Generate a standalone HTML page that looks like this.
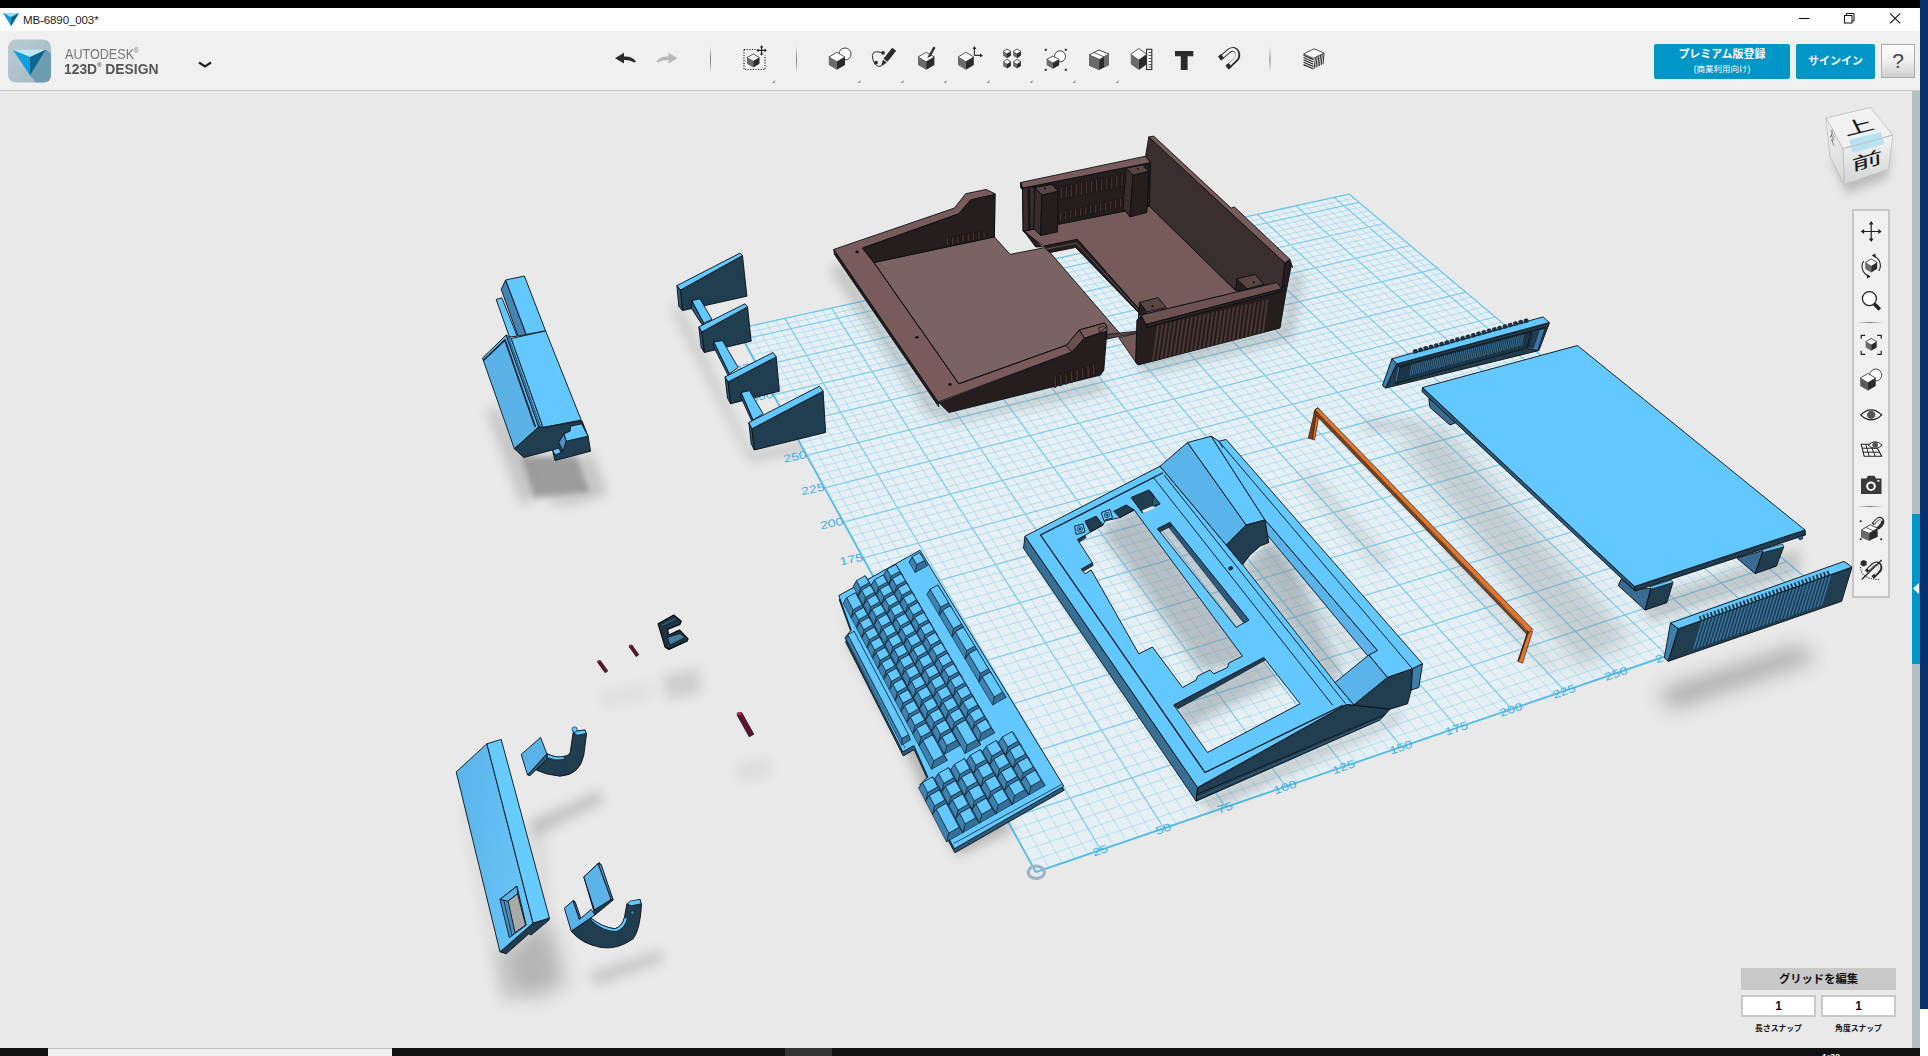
<!DOCTYPE html>
<html lang="ja"><head><meta charset="utf-8"><title>MB-6890_003* - 123D Design</title>
<style>

html,body{margin:0;padding:0;background:#e9e9e9;}
body{width:1928px;height:1056px;overflow:hidden;position:relative;font-family:"Liberation Sans","Noto Sans CJK JP",sans-serif;}
#app{position:absolute;left:0;top:0;width:1928px;height:1056px;overflow:hidden;background:#e9e9e9;}
#scene{position:absolute;left:0;top:0;}
.abs{position:absolute;}
#topblack{left:0;top:0;width:1920px;height:8px;background:#000;}
#titlebar{left:0;top:8px;width:1920px;height:23px;background:#fff;}
#title{left:23px;top:12px;font-size:11.5px;color:#222;line-height:16px;letter-spacing:-0.1px;}
#header{left:0;top:31px;width:1920px;height:59px;background:#f0f0f0;border-bottom:1px solid #c9c9c9;}
#rightblue{left:1920px;top:0;width:8px;height:1009px;background:#08306d;}
#rightwhite{left:1920px;top:1009px;width:8px;height:47px;background:#fff;}
#scrollstrip{left:1912px;top:90px;width:8px;height:958px;background:#b5bfbf;}
#scrollblue{left:1912px;top:514px;width:8px;height:150px;background:#0096c8;}
#bottombar{left:0;top:1048px;width:1920px;height:8px;background:#111;}
#bb1{left:48px;top:1048px;width:344px;height:8px;background:#f0f0f0;border-top:1px solid #c4c4c4;box-sizing:border-box;}
#bb2{left:785px;top:1048px;width:47px;height:8px;background:#333;}
.brand{color:#6e6e6e;}
#brand1{left:65px;top:43px;font-size:14px;line-height:16px;color:#777;transform:scaleX(0.9);transform-origin:0 0;white-space:nowrap;}
#brand2{left:64px;top:57px;font-size:14px;line-height:16px;color:#555;font-weight:bold;transform:scaleX(0.99);transform-origin:0 0;white-space:nowrap;}
.btn{background:#0096c8;border-radius:2px;color:#fff;text-align:center;font-weight:bold;}
#prem{left:1654px;top:44px;width:136px;height:35px;}
#prem .l1{position:absolute;left:0;width:136px;top:2px;font-size:11px;line-height:16px;}
#prem .l2{position:absolute;left:0;width:136px;top:19px;font-size:8.5px;line-height:12px;font-weight:normal;}
#signin{left:1796px;top:44px;width:79px;height:35px;font-size:11px;line-height:34px;}
#help{left:1881px;top:44px;width:34px;height:34px;box-sizing:border-box;border:1px solid #aaa;background:linear-gradient(#fcfcfc,#f0f0f0 50%,#cfcfcf);text-align:center;font-size:21px;line-height:31px;color:#444;}
#gridhead{left:1741px;top:968px;width:155px;height:22px;background:#c8c8c8;text-align:center;font-size:11.3px;line-height:23px;font-weight:bold;color:#111;}
.ginp{top:995px;height:22px;box-sizing:border-box;border:2px solid #c8c8c8;background:#fff;text-align:center;font-size:12px;line-height:18px;font-weight:bold;color:#111;}
.glab{top:1022.5px;width:75px;text-align:center;font-size:7.8px;line-height:12px;font-weight:bold;color:#111;}
#rtool{left:1852px;top:209px;width:38px;height:389px;box-sizing:border-box;border:2px solid #c6c6c6;background:#f0f0f0;}

</style></head>
<body>
<div id="app">
<svg id="scene" width="1928" height="1056" viewBox="0 0 1928 1056">
<defs><filter id="b3" x="-30%" y="-30%" width="160%" height="160%"><feGaussianBlur stdDeviation="3"/></filter><filter id="b6" x="-30%" y="-30%" width="160%" height="160%"><feGaussianBlur stdDeviation="6"/></filter><filter id="b10" x="-40%" y="-40%" width="180%" height="180%"><feGaussianBlur stdDeviation="10"/></filter><filter id="b14" x="-40%" y="-40%" width="180%" height="180%"><feGaussianBlur stdDeviation="14"/></filter><style>.gl{font-family:"Liberation Sans",sans-serif;font-size:11px;fill:#3fb0e3;}</style></defs>
<rect x="0" y="0" width="1928" height="1056" fill="#e9e9e9"/>
<polygon points="521.0,456.0 577.0,456.0 590.0,492.0 534.0,498.0" fill="#6e6e6e" opacity="0.62" filter="url(#b3)"/>
<polygon points="486.0,409.0 500.0,409.0 525.0,458.0 534.0,497.0 522.0,506.0" fill="#6e6e6e" opacity="0.3" filter="url(#b6)"/>
<polygon points="577.0,456.0 592.0,454.0 607.0,494.0 566.0,506.0 540.0,500.0 590.0,490.0" fill="#6e6e6e" opacity="0.32" filter="url(#b6)"/>
<polygon points="672.0,300.0 684.0,312.0 752.0,452.0 826.0,436.0 832.0,446.0 750.0,462.0 676.0,318.0" fill="#6e6e6e" opacity="0.28" filter="url(#b6)"/>
<polygon points="662.0,676.0 698.0,668.0 702.0,692.0 668.0,700.0" fill="#6e6e6e" opacity="0.22" filter="url(#b6)"/>
<polygon points="600.0,692.0 650.0,682.0 653.0,698.0 604.0,708.0" fill="#6e6e6e" opacity="0.07" filter="url(#b6)"/>
<polygon points="735.0,765.0 770.0,757.0 772.0,775.0 738.0,782.0" fill="#6e6e6e" opacity="0.09" filter="url(#b6)"/>
<polygon points="528.0,822.0 600.0,790.0 604.0,802.0 536.0,836.0" fill="#6e6e6e" opacity="0.3" filter="url(#b6)"/>
<polygon points="527.0,932.0 551.0,924.0 565.0,985.0 528.0,999.0 509.0,988.0 501.0,953.0" fill="#6e6e6e" opacity="0.42" filter="url(#b10)"/>
<polygon points="470.0,800.0 500.0,950.0 520.0,1000.0 500.0,1005.0 462.0,805.0" fill="#6e6e6e" opacity="0.12" filter="url(#b6)"/>
<polygon points="527.0,826.0 546.0,826.0 552.0,930.0 530.0,934.0" fill="#6e6e6e" opacity="0.1" filter="url(#b6)"/>
<polygon points="590.0,972.0 660.0,950.0 664.0,962.0 596.0,986.0" fill="#6e6e6e" opacity="0.26" filter="url(#b6)"/>
<polygon points="1660.0,690.0 1800.0,645.0 1815.0,660.0 1670.0,710.0" fill="#6e6e6e" opacity="0.5" filter="url(#b10)"/>
<polygon points="1035.9,872.2 1831.3,599.4 1349.1,194.1 737.2,328.9" fill="#e6eff3"/>
<path d="M1049.0,867.7L746.8,326.8M1029.9,861.3L1822.1,591.7M1062.1,863.2L756.3,324.7M1024.0,850.5L1813.1,584.0M1075.0,858.7L765.9,322.6M1018.2,839.9L1804.1,576.5M1088.0,854.3L775.4,320.5M1012.4,829.5L1795.2,569.0M1113.6,845.5L794.3,316.3M1001.1,808.9L1777.6,554.3M1126.3,841.1L803.7,314.3M995.5,798.8L1769.0,547.0M1138.9,836.8L813.0,312.2M990.1,788.8L1760.5,539.8M1151.5,832.5L822.3,310.1M984.6,778.9L1752.0,532.7M1176.5,823.9L840.9,306.1M974.0,759.5L1735.4,518.7M1188.9,819.7L850.1,304.0M968.7,750.0L1727.1,511.8M1201.2,815.5L859.3,302.0M963.6,740.6L1719.0,505.0M1213.5,811.3L868.5,300.0M958.4,731.3L1711.0,498.2M1237.8,802.9L886.7,296.0M948.4,713.0L1695.1,484.9M1249.9,798.8L895.8,294.0M943.4,704.0L1687.3,478.3M1261.9,794.6L904.8,292.0M938.6,695.1L1679.6,471.8M1273.9,790.5L913.8,290.0M933.7,686.3L1671.9,465.4M1297.6,782.4L931.7,286.1M924.2,669.1L1656.8,452.7M1309.4,778.4L940.6,284.1M919.5,660.6L1649.3,446.4M1321.1,774.4L949.5,282.1M914.9,652.1L1641.9,440.2M1332.7,770.4L958.3,280.2M910.3,643.8L1634.6,434.0M1355.9,762.4L975.9,276.3M901.3,627.5L1620.2,421.9M1367.4,758.5L984.6,274.4M896.9,619.4L1613.1,415.9M1378.8,754.6L993.4,272.5M892.5,611.4L1606.0,410.0M1390.2,750.7L1002.1,270.6M888.2,603.6L1599.1,404.2M1412.7,742.9L1019.3,266.8M879.7,588.0L1585.3,392.6M1423.9,739.1L1027.9,264.9M875.5,580.4L1578.5,386.9M1435.1,735.3L1036.5,263.0M871.3,572.8L1571.8,381.2M1446.2,731.4L1045.0,261.1M867.2,565.4L1565.1,375.6M1468.2,723.9L1062.0,257.3M859.1,550.6L1551.9,364.5M1479.2,720.1L1070.5,255.5M855.1,543.4L1545.4,359.1M1490.1,716.4L1078.9,253.6M851.2,536.2L1539.0,353.6M1500.9,712.7L1087.3,251.8M847.3,529.1L1532.6,348.3M1522.4,705.3L1104.0,248.1M839.6,515.1L1520.0,337.7M1533.1,701.7L1112.3,246.3M835.8,508.2L1513.8,332.5M1543.7,698.0L1120.6,244.4M832.0,501.4L1507.6,327.3M1554.3,694.4L1128.9,242.6M828.3,494.6L1501.5,322.1M1575.3,687.2L1145.3,239.0M821.0,481.3L1489.4,312.0M1585.7,683.6L1153.5,237.2M817.4,474.7L1483.4,307.0M1596.1,680.0L1161.6,235.4M813.8,468.2L1477.5,302.0M1606.4,676.5L1169.7,233.6M810.2,461.8L1471.7,297.1M1626.9,669.5L1185.9,230.1M803.2,449.1L1460.1,287.3M1637.1,666.0L1193.9,228.3M799.8,442.8L1454.4,282.5M1647.3,662.5L1201.9,226.5M796.4,436.6L1448.7,277.8M1657.3,659.0L1209.9,224.8M793.0,430.4L1443.1,273.0M1677.4,652.2L1225.8,221.3M786.4,418.3L1431.9,263.7M1687.3,648.7L1233.7,219.5M783.1,412.4L1426.5,259.1M1697.3,645.4L1241.5,217.8M779.8,406.4L1421.0,254.5M1707.1,642.0L1249.4,216.1M776.6,400.6L1415.6,250.0M1726.7,635.3L1265.0,212.6M770.2,389.0L1404.9,241.0M1736.4,631.9L1272.8,210.9M767.1,383.3L1399.7,236.6M1746.1,628.6L1280.5,209.2M764.0,377.6L1394.4,232.2M1755.8,625.3L1288.3,207.5M760.9,372.0L1389.2,227.8M1774.9,618.7L1303.6,204.1M754.8,361.0L1379.0,219.2M1784.4,615.5L1311.3,202.4M751.8,355.5L1373.9,214.9M1793.9,612.2L1318.9,200.8M748.8,350.1L1368.9,210.7M1803.3,609.0L1326.5,199.1M745.9,344.7L1363.9,206.5M1822.0,602.6L1341.6,195.8M740.1,334.1L1354.0,198.2M1831.3,599.4L1349.1,194.1M737.2,328.9L1349.1,194.1" stroke="#7fcdee" stroke-width="0.85" opacity="0.55" fill="none"/>
<path d="M1035.9,872.2L737.2,328.9M1035.9,872.2L1831.3,599.4M1100.8,849.9L784.8,318.4M1006.7,819.1L1786.4,561.6M1164.0,828.2L831.6,308.1M979.3,769.2L1743.6,525.7M1225.7,807.1L877.6,298.0M953.4,722.1L1703.0,491.5M1285.7,786.5L922.7,288.0M928.9,677.6L1664.3,459.0M1344.3,766.4L967.1,278.3M905.8,635.6L1627.4,428.0M1401.5,746.8L1010.7,268.7M883.9,595.8L1592.1,398.3M1457.2,727.7L1053.6,259.2M863.1,558.0L1558.5,370.0M1511.7,709.0L1095.7,249.9M843.4,522.1L1526.2,343.0M1564.8,690.8L1137.1,240.8M824.6,487.9L1495.4,317.0M1616.7,673.0L1177.8,231.8M806.7,455.4L1465.8,292.2M1667.4,655.6L1217.8,223.0M789.7,424.4L1437.5,268.3M1716.9,638.6L1257.2,214.3M773.4,394.8L1410.3,245.5M1765.3,622.0L1296.0,205.8M757.8,366.5L1384.1,223.5M1812.7,605.8L1334.1,197.4M743.0,339.4L1358.9,202.3" stroke="#5bbfe8" stroke-width="1.25" opacity="0.72" fill="none"/>
<path d="M1035.9,872.2L1831.3,599.4M1035.9,872.2L737.2,328.9" stroke="#4fb9e6" stroke-width="1.8" fill="none" opacity="0.9"/>
<path d="M1349.1,194.1L1831.3,599.4M1349.1,194.1L737.2,328.9" stroke="#5bbfe8" stroke-width="1.3" fill="none" opacity="0.8"/>
<ellipse cx="1036.3" cy="872.3" rx="8.2" ry="6.2" fill="none" stroke="#9db3c6" stroke-width="3.2"/>
<text transform="translate(1101.3,854.1) rotate(-18.8) scale(1.28,1)" text-anchor="middle" class="gl">25</text>
<text transform="translate(1164.5,832.4) rotate(-18.8) scale(1.28,1)" text-anchor="middle" class="gl">50</text>
<text transform="translate(1226.2,811.3) rotate(-18.8) scale(1.28,1)" text-anchor="middle" class="gl">75</text>
<text transform="translate(1286.2,790.7) rotate(-18.8) scale(1.28,1)" text-anchor="middle" class="gl">100</text>
<text transform="translate(1344.8,770.6) rotate(-18.8) scale(1.28,1)" text-anchor="middle" class="gl">125</text>
<text transform="translate(1402.0,751.0) rotate(-18.8) scale(1.28,1)" text-anchor="middle" class="gl">150</text>
<text transform="translate(1457.7,731.9) rotate(-18.8) scale(1.28,1)" text-anchor="middle" class="gl">175</text>
<text transform="translate(1512.2,713.2) rotate(-18.8) scale(1.28,1)" text-anchor="middle" class="gl">200</text>
<text transform="translate(1565.3,695.0) rotate(-18.8) scale(1.28,1)" text-anchor="middle" class="gl">225</text>
<text transform="translate(1617.2,677.2) rotate(-18.8) scale(1.28,1)" text-anchor="middle" class="gl">250</text>
<text transform="translate(1667.9,659.8) rotate(-18.8) scale(1.28,1)" text-anchor="middle" class="gl">275</text>
<text transform="translate(1717.4,642.8) rotate(-18.8) scale(1.28,1)" text-anchor="middle" class="gl">300</text>
<text transform="translate(1765.8,626.2) rotate(-18.8) scale(1.28,1)" text-anchor="middle" class="gl">325</text>
<text transform="translate(1813.2,610.0) rotate(-18.8) scale(1.28,1)" text-anchor="middle" class="gl">350</text>
<text transform="translate(1007.2,821.6) rotate(-12) scale(1.28,1)" text-anchor="end" class="gl">25</text>
<text transform="translate(979.8,771.7) rotate(-12) scale(1.28,1)" text-anchor="end" class="gl">50</text>
<text transform="translate(953.9,724.6) rotate(-12) scale(1.28,1)" text-anchor="end" class="gl">75</text>
<text transform="translate(929.4,680.1) rotate(-12) scale(1.28,1)" text-anchor="end" class="gl">100</text>
<text transform="translate(906.3,638.1) rotate(-12) scale(1.28,1)" text-anchor="end" class="gl">125</text>
<text transform="translate(884.4,598.3) rotate(-12) scale(1.28,1)" text-anchor="end" class="gl">150</text>
<text transform="translate(863.6,560.5) rotate(-12) scale(1.28,1)" text-anchor="end" class="gl">175</text>
<text transform="translate(843.9,524.6) rotate(-12) scale(1.28,1)" text-anchor="end" class="gl">200</text>
<text transform="translate(825.1,490.4) rotate(-12) scale(1.28,1)" text-anchor="end" class="gl">225</text>
<text transform="translate(807.2,457.9) rotate(-12) scale(1.28,1)" text-anchor="end" class="gl">250</text>
<text transform="translate(790.2,426.9) rotate(-12) scale(1.28,1)" text-anchor="end" class="gl">275</text>
<text transform="translate(773.9,397.3) rotate(-12) scale(1.28,1)" text-anchor="end" class="gl">300</text>
<text transform="translate(758.3,369.0) rotate(-12) scale(1.28,1)" text-anchor="end" class="gl">325</text>
<text transform="translate(743.5,341.9) rotate(-12) scale(1.28,1)" text-anchor="end" class="gl">350</text>
<polygon points="1398.0,440.0 1440.0,424.0 1632.0,640.0 1578.0,668.0" fill="#6e6e6e" opacity="0.25" filter="url(#b10)"/>
<polygon points="1640.0,600.0 1800.0,548.0 1800.0,575.0 1650.0,622.0" fill="#6e6e6e" opacity="0.3" filter="url(#b6)"/>
<polygon points="1362.0,418.0 1420.0,422.0 1424.0,432.0 1366.0,430.0" fill="#6e6e6e" opacity="0.25" filter="url(#b6)"/>
<polygon points="1298.0,478.0 1312.0,472.0 1392.0,560.0 1378.0,570.0" fill="#6e6e6e" opacity="0.16" filter="url(#b6)"/>
<polygon points="1440.0,560.0 1452.0,552.0 1560.0,668.0 1546.0,676.0" fill="#6e6e6e" opacity="0.12" filter="url(#b6)"/>
<polygon points="842.0,262.0 940.0,405.0 960.0,412.0 1100.0,378.0 1108.0,390.0 952.0,422.0 928.0,414.0 830.0,270.0" fill="#6e6e6e" opacity="0.32" filter="url(#b6)"/>
<polygon points="1138.0,362.0 1282.0,328.0 1292.0,270.0 1302.0,275.0 1292.0,338.0 1142.0,374.0" fill="#6e6e6e" opacity="0.35" filter="url(#b6)"/>
<polygon points="496.2,299.4 501.9,297.9 517.2,336.2 509.4,336.9" fill="#62c8ff" stroke="#0a0f14" stroke-width="0.9" stroke-linejoin="round" />
<polygon points="505.6,280.0 501.2,289.4 518.1,336.2 526.2,334.4" fill="#4385b3" stroke="#0a0f14" stroke-width="0.9" stroke-linejoin="round" />
<polygon points="505.6,280.0 524.4,276.0 545.6,330.9 526.2,334.4" fill="#62c8ff" stroke="#0a0f14" stroke-width="0.9" stroke-linejoin="round" />
<polygon points="482.5,358.1 506.2,335.0 538.8,426.9 514.4,448.8" fill="#5ab2e6" stroke="#0a0f14" stroke-width="0.9" stroke-linejoin="round" />
<polyline points="483.8,360.0 505.0,340.0 535.0,426.2" fill="none" stroke="#0a1a26" stroke-width="1.6" stroke-linejoin="round" stroke-linecap="round" />
<polygon points="506.2,335.0 511.2,338.5 543.1,427.5 538.8,426.9" fill="#62c8ff" stroke="#0a0f14" stroke-width="0.9" stroke-linejoin="round" />
<polyline points="508.1,336.5 540.6,427.2" fill="none" stroke="#2d6488" stroke-width="1.6" stroke-linejoin="round" stroke-linecap="round" />
<polygon points="511.2,338.5 545.6,330.9 581.2,420.0 543.1,427.5" fill="#62c8ff" stroke="#0a0f14" stroke-width="0.9" stroke-linejoin="round" />
<polygon points="514.4,448.8 538.8,426.9 543.1,427.5 581.9,420.6 588.1,436.2 590.6,451.2 555.0,460.6 552.5,450.0 523.8,457.5" fill="#213d50" stroke="#0a0f14" stroke-width="0.9" stroke-linejoin="round" />
<polygon points="570.6,426.2 581.6,423.8 588.1,436.2 566.2,441.2 563.8,433.8 570.0,431.2" fill="#62c8ff" stroke="#0a0f14" stroke-width="0.9" stroke-linejoin="round" />
<polygon points="563.8,433.8 566.2,441.2 563.1,451.2 558.8,442.5" fill="#4b92c2" stroke="#0a0f14" stroke-width="0.9" stroke-linejoin="round" />
<polygon points="552.5,450.0 558.8,448.1 561.2,452.5 555.0,455.0" fill="#62c8ff" stroke="#0a0f14" stroke-width="0.9" stroke-linejoin="round" />
<polygon points="676.9,285.6 680.6,290.0 682.5,310.6 678.8,306.2" fill="#2d5a7a" stroke="#0a0f14" stroke-width="0.9" stroke-linejoin="round" />
<polygon points="680.6,290.0 742.5,255.6 746.9,296.2 682.5,310.6" fill="#213d50" stroke="#0a0f14" stroke-width="0.9" stroke-linejoin="round" />
<polygon points="676.9,285.6 740.0,253.1 742.5,255.6 680.6,290.0" fill="#62c8ff" stroke="#0a0f14" stroke-width="0.9" stroke-linejoin="round" />
<polygon points="691.9,300.6 703.8,323.1 703.1,326.2 691.2,308.1" fill="#2d5a7a" stroke="#0a0f14" stroke-width="0.9" stroke-linejoin="round" />
<polygon points="691.9,300.6 700.0,298.8 711.9,319.4 703.8,323.1" fill="#62c8ff" stroke="#0a0f14" stroke-width="0.9" stroke-linejoin="round" />
<polygon points="698.8,326.9 701.9,331.9 704.4,352.5 701.2,347.5" fill="#2d5a7a" stroke="#0a0f14" stroke-width="0.9" stroke-linejoin="round" />
<polygon points="701.9,331.9 747.5,306.9 751.2,341.2 704.4,352.5" fill="#213d50" stroke="#0a0f14" stroke-width="0.9" stroke-linejoin="round" />
<polygon points="698.8,326.9 745.0,303.8 747.5,306.9 701.9,331.9" fill="#62c8ff" stroke="#0a0f14" stroke-width="0.9" stroke-linejoin="round" />
<polygon points="713.8,341.9 729.4,373.8 729.0,376.9 714.0,347.5" fill="#2d5a7a" stroke="#0a0f14" stroke-width="0.9" stroke-linejoin="round" />
<polygon points="713.8,341.9 722.5,340.6 738.1,367.5 729.4,373.8" fill="#62c8ff" stroke="#0a0f14" stroke-width="0.9" stroke-linejoin="round" />
<polygon points="725.0,376.9 728.1,381.9 730.6,403.8 727.5,398.1" fill="#2d5a7a" stroke="#0a0f14" stroke-width="0.9" stroke-linejoin="round" />
<polygon points="728.1,381.9 776.2,356.9 779.4,391.2 730.6,403.8" fill="#213d50" stroke="#0a0f14" stroke-width="0.9" stroke-linejoin="round" />
<polygon points="725.0,376.9 773.1,352.5 776.2,356.9 728.1,381.9" fill="#62c8ff" stroke="#0a0f14" stroke-width="0.9" stroke-linejoin="round" />
<polygon points="741.2,392.5 753.1,420.0 752.8,423.1 741.0,397.5" fill="#2d5a7a" stroke="#0a0f14" stroke-width="0.9" stroke-linejoin="round" />
<polygon points="741.2,392.5 749.4,390.6 763.1,413.8 753.1,420.0" fill="#62c8ff" stroke="#0a0f14" stroke-width="0.9" stroke-linejoin="round" />
<polygon points="748.8,422.5 751.9,428.8 754.4,450.0 751.2,443.8" fill="#2d5a7a" stroke="#0a0f14" stroke-width="0.9" stroke-linejoin="round" />
<polygon points="751.9,428.8 823.1,391.2 825.6,432.5 754.4,450.0" fill="#213d50" stroke="#0a0f14" stroke-width="0.9" stroke-linejoin="round" />
<polygon points="748.8,422.5 819.4,386.2 823.1,391.2 751.9,428.8" fill="#62c8ff" stroke="#0a0f14" stroke-width="0.9" stroke-linejoin="round" />
<polygon points="833.8,249.4 834.4,254.4 938.8,406.9 938.1,401.9" fill="#261d1d" stroke="#0a0f14" stroke-width="0.9" stroke-linejoin="round" />
<polygon points="938.1,401.9 942.5,406.2 948.8,412.5 1100.6,375.0 1103.8,370.0 1106.9,331.2 1099.4,333.1 1084.4,338.1 1071.9,351.9 939.4,402.5" fill="#261d1d" stroke="#0a0f14" stroke-width="0.9" stroke-linejoin="round" />
<polygon points="1053.8,376.2 1056.0,375.6 1056.5,386.9 1054.2,387.8" fill="#4a3838" stroke="#120c0c" stroke-width="0.7" stroke-linejoin="round" />
<polygon points="1059.2,374.6 1061.5,373.9 1062.0,385.2 1059.8,386.1" fill="#4a3838" stroke="#120c0c" stroke-width="0.7" stroke-linejoin="round" />
<polygon points="1064.8,372.9 1067.0,372.2 1067.5,383.5 1065.2,384.4" fill="#4a3838" stroke="#120c0c" stroke-width="0.7" stroke-linejoin="round" />
<polygon points="1070.2,371.2 1072.5,370.6 1073.0,381.8 1070.8,382.7" fill="#4a3838" stroke="#120c0c" stroke-width="0.7" stroke-linejoin="round" />
<polygon points="1075.8,369.5 1078.0,368.9 1078.5,380.1 1076.2,381.0" fill="#4a3838" stroke="#120c0c" stroke-width="0.7" stroke-linejoin="round" />
<polygon points="1081.2,367.8 1083.5,367.2 1084.0,378.4 1081.8,379.3" fill="#4a3838" stroke="#120c0c" stroke-width="0.7" stroke-linejoin="round" />
<polygon points="1086.8,366.1 1089.0,365.5 1089.5,376.8 1087.2,377.6" fill="#4a3838" stroke="#120c0c" stroke-width="0.7" stroke-linejoin="round" />
<polygon points="1092.2,364.4 1094.5,363.8 1095.0,375.1 1092.8,375.9" fill="#4a3838" stroke="#120c0c" stroke-width="0.7" stroke-linejoin="round" />
<polygon points="873.8,262.5 994.4,236.9 1010.0,254.4 1042.5,248.1 1043.8,247.5 1050.0,252.5 1121.2,335.0 1106.9,338.8 1106.9,331.2 1104.4,323.1 1079.4,330.0 1066.2,345.6 958.8,383.8" fill="#7c6363" stroke="#0a0f14" stroke-width="0.9" stroke-linejoin="round" />
<polygon points="833.8,249.4 954.4,208.1 965.6,193.8 986.2,189.4 995.0,193.8 995.0,194.4 970.6,200.0 958.8,213.8 862.5,248.1 873.8,262.5 958.8,383.8 1066.9,345.0 1079.4,330.0 1104.4,323.1 1106.9,326.2 1106.9,331.2 1099.4,333.1 1084.4,338.1 1071.9,351.9 938.1,401.9" fill="#7a5b5b" stroke="#0a0f14" stroke-width="0.9" stroke-linejoin="round" />
<polygon points="862.5,248.1 958.8,213.8 970.6,200.0 995.0,194.4 994.4,236.9 873.8,262.5" fill="#261d1d" stroke="#0a0f14" stroke-width="0.9" stroke-linejoin="round" />
<polygon points="946.2,238.1 948.5,237.6 948.5,245.6 946.2,246.1" fill="#4a3838" stroke="#120c0c" stroke-width="0.7" stroke-linejoin="round" />
<polygon points="951.5,237.1 953.8,236.6 953.8,244.6 951.5,245.1" fill="#4a3838" stroke="#120c0c" stroke-width="0.7" stroke-linejoin="round" />
<polygon points="956.8,236.0 959.0,235.5 959.0,243.5 956.8,244.0" fill="#4a3838" stroke="#120c0c" stroke-width="0.7" stroke-linejoin="round" />
<polygon points="962.0,234.9 964.2,234.4 964.2,242.4 962.0,242.9" fill="#4a3838" stroke="#120c0c" stroke-width="0.7" stroke-linejoin="round" />
<polygon points="967.2,233.9 969.5,233.4 969.5,241.4 967.2,241.9" fill="#4a3838" stroke="#120c0c" stroke-width="0.7" stroke-linejoin="round" />
<polygon points="972.5,232.8 974.8,232.3 974.8,240.3 972.5,240.8" fill="#4a3838" stroke="#120c0c" stroke-width="0.7" stroke-linejoin="round" />
<polygon points="977.8,231.8 980.0,231.2 980.0,239.2 977.8,239.8" fill="#4a3838" stroke="#120c0c" stroke-width="0.7" stroke-linejoin="round" />
<polygon points="983.0,230.7 985.2,230.2 985.2,238.2 983.0,238.7" fill="#4a3838" stroke="#120c0c" stroke-width="0.7" stroke-linejoin="round" />
<polyline points="995.0,193.8 994.4,236.9" fill="none" stroke="#0a0f14" stroke-width="0.9" stroke-linejoin="round" stroke-linecap="round" />
<polyline points="873.8,262.5 958.8,383.8 1066.9,345.0" fill="none" stroke="#1a1212" stroke-width="0.9" stroke-linejoin="round" stroke-linecap="round" />
<polygon points="1066.2,345.6 1079.4,330.0 1084.4,338.1 1071.9,351.9" fill="#6a4f4f" stroke="#0a0f14" stroke-width="0.9" stroke-linejoin="round" />
<polygon points="1079.4,330.0 1104.4,323.1 1106.9,326.2 1099.4,333.1 1084.4,338.1" fill="#7a5b5b" stroke="#0a0f14" stroke-width="0.9" stroke-linejoin="round" />
<polyline points="1099.4,333.1 1098.8,327.5 1104.4,326.2" fill="none" stroke="#1a1212" stroke-width="0.8" stroke-linejoin="round" stroke-linecap="round" />
<ellipse cx="857.1" cy="251.9" rx="1.6" ry="1.3" fill="#140d0d"/>
<ellipse cx="916.9" cy="337.2" rx="1.6" ry="1.3" fill="#140d0d"/>
<ellipse cx="950.0" cy="384.4" rx="1.6" ry="1.3" fill="#140d0d"/>
<polygon points="1106.9,334.4 1136.2,331.2 1136.2,333.1 1106.9,339.0" fill="#5a4545" stroke="#120c0c" stroke-width="0.8" stroke-linejoin="round" />
<polygon points="1023.1,231.2 1149.4,206.2 1235.0,290.0 1277.5,282.5 1141.2,315.0 1137.5,350.0 1138.8,308.8 1077.5,239.4 1043.8,246.2" fill="#775b5b" stroke="#0a0f14" stroke-width="0.9" stroke-linejoin="round" />
<polygon points="1023.1,230.0 1026.9,233.1 1042.5,246.9 1035.6,246.9" fill="#261d1d" stroke="#0a0f14" stroke-width="0.9" stroke-linejoin="round" />
<polygon points="1043.8,246.2 1077.5,239.4 1138.8,308.8 1137.8,311.9 1075.6,247.5 1050.0,252.5" fill="#261d1d" stroke="#0a0f14" stroke-width="0.9" stroke-linejoin="round" />
<polyline points="1046.9,249.0 1076.5,243.1 1138.2,310.0" fill="none" stroke="#6a5050" stroke-width="1.0" stroke-linejoin="round" stroke-linecap="round" />
<polygon points="1022.5,188.1 1150.6,162.5 1149.4,206.2 1023.1,231.2" fill="#261d1d" stroke="#0a0f14" stroke-width="0.9" stroke-linejoin="round" />
<polygon points="1022.5,188.1 1028.1,187.1 1029.0,230.0 1023.1,231.2" fill="#3a2c2c" stroke="#0a0f14" stroke-width="0.9" stroke-linejoin="round" />
<polygon points="1029.4,186.9 1034.8,187.5 1033.8,228.8 1030.0,229.8" fill="#3a2c2c" stroke="#0a0f14" stroke-width="0.9" stroke-linejoin="round" />
<polygon points="1060.2,186.9 1062.4,186.4 1062.1,199.4 1060.0,199.9" fill="#4a3838" stroke="#120c0c" stroke-width="0.7" stroke-linejoin="round" />
<polygon points="1059.8,211.9 1061.9,211.4 1061.6,220.9 1059.5,221.4" fill="#4a3838" stroke="#120c0c" stroke-width="0.7" stroke-linejoin="round" />
<polygon points="1065.3,185.8 1067.4,185.3 1067.2,198.3 1065.1,198.8" fill="#4a3838" stroke="#120c0c" stroke-width="0.7" stroke-linejoin="round" />
<polygon points="1064.8,210.8 1066.9,210.2 1066.6,219.8 1064.5,220.2" fill="#4a3838" stroke="#120c0c" stroke-width="0.7" stroke-linejoin="round" />
<polygon points="1070.4,184.8 1072.5,184.2 1072.2,197.2 1070.1,197.8" fill="#4a3838" stroke="#120c0c" stroke-width="0.7" stroke-linejoin="round" />
<polygon points="1069.8,209.6 1071.9,209.1 1071.6,218.6 1069.5,219.1" fill="#4a3838" stroke="#120c0c" stroke-width="0.7" stroke-linejoin="round" />
<polygon points="1075.4,183.7 1077.6,183.2 1077.3,196.2 1075.2,196.7" fill="#4a3838" stroke="#120c0c" stroke-width="0.7" stroke-linejoin="round" />
<polygon points="1074.8,208.5 1076.9,208.0 1076.6,217.5 1074.5,218.0" fill="#4a3838" stroke="#120c0c" stroke-width="0.7" stroke-linejoin="round" />
<polygon points="1080.5,182.6 1082.6,182.1 1082.4,195.1 1080.2,195.6" fill="#4a3838" stroke="#120c0c" stroke-width="0.7" stroke-linejoin="round" />
<polygon points="1079.8,207.4 1081.9,206.9 1081.6,216.4 1079.5,216.9" fill="#4a3838" stroke="#120c0c" stroke-width="0.7" stroke-linejoin="round" />
<polygon points="1085.6,181.6 1087.7,181.1 1087.4,194.1 1085.3,194.6" fill="#4a3838" stroke="#120c0c" stroke-width="0.7" stroke-linejoin="round" />
<polygon points="1084.8,206.2 1086.9,205.8 1086.6,215.2 1084.5,215.8" fill="#4a3838" stroke="#120c0c" stroke-width="0.7" stroke-linejoin="round" />
<polygon points="1090.6,180.5 1092.8,180.0 1092.5,193.0 1090.4,193.5" fill="#4a3838" stroke="#120c0c" stroke-width="0.7" stroke-linejoin="round" />
<polygon points="1089.8,205.1 1091.9,204.6 1091.6,214.1 1089.5,214.6" fill="#4a3838" stroke="#120c0c" stroke-width="0.7" stroke-linejoin="round" />
<polygon points="1095.7,179.4 1097.8,178.9 1097.6,191.9 1095.4,192.4" fill="#4a3838" stroke="#120c0c" stroke-width="0.7" stroke-linejoin="round" />
<polygon points="1094.8,204.0 1096.9,203.5 1096.6,213.0 1094.5,213.5" fill="#4a3838" stroke="#120c0c" stroke-width="0.7" stroke-linejoin="round" />
<polygon points="1100.8,178.4 1102.9,177.9 1102.6,190.9 1100.5,191.4" fill="#4a3838" stroke="#120c0c" stroke-width="0.7" stroke-linejoin="round" />
<polygon points="1099.8,202.9 1101.9,202.4 1101.6,211.9 1099.5,212.4" fill="#4a3838" stroke="#120c0c" stroke-width="0.7" stroke-linejoin="round" />
<polygon points="1105.8,177.3 1107.9,176.8 1107.7,189.8 1105.6,190.3" fill="#4a3838" stroke="#120c0c" stroke-width="0.7" stroke-linejoin="round" />
<polygon points="1104.8,201.8 1106.9,201.2 1106.6,210.8 1104.5,211.2" fill="#4a3838" stroke="#120c0c" stroke-width="0.7" stroke-linejoin="round" />
<polygon points="1110.9,176.2 1113.0,175.8 1112.8,188.8 1110.6,189.2" fill="#4a3838" stroke="#120c0c" stroke-width="0.7" stroke-linejoin="round" />
<polygon points="1109.8,200.6 1111.9,200.1 1111.6,209.6 1109.5,210.1" fill="#4a3838" stroke="#120c0c" stroke-width="0.7" stroke-linejoin="round" />
<polygon points="1115.9,175.2 1118.1,174.7 1117.8,187.7 1115.7,188.2" fill="#4a3838" stroke="#120c0c" stroke-width="0.7" stroke-linejoin="round" />
<polygon points="1114.8,199.5 1116.9,199.0 1116.6,208.5 1114.5,209.0" fill="#4a3838" stroke="#120c0c" stroke-width="0.7" stroke-linejoin="round" />
<polygon points="1121.0,174.1 1123.1,173.6 1122.9,186.6 1120.8,187.1" fill="#4a3838" stroke="#120c0c" stroke-width="0.7" stroke-linejoin="round" />
<polygon points="1119.8,198.4 1121.9,197.9 1121.6,207.4 1119.5,207.9" fill="#4a3838" stroke="#120c0c" stroke-width="0.7" stroke-linejoin="round" />
<polygon points="1020.6,182.5 1145.6,156.2 1150.6,162.5 1022.5,188.1" fill="#7a5b5b" stroke="#0a0f14" stroke-width="0.9" stroke-linejoin="round" />
<polygon points="1020.6,182.5 1022.5,188.1 1022.5,190.0 1020.6,187.5" fill="#261d1d" stroke="#0a0f14" stroke-width="0.9" stroke-linejoin="round" />
<polygon points="1148.8,136.9 1195.0,180.0 1285.0,263.1 1281.9,288.8 1235.0,290.0 1149.4,206.2 1150.6,162.5 1145.6,156.2" fill="#3b2e2e" stroke="#0a0f14" stroke-width="0.9" stroke-linejoin="round" />
<polygon points="1148.8,136.9 1153.8,136.2 1231.2,208.1 1234.4,206.9 1290.0,259.4 1285.0,263.1" fill="#7a5b5b" stroke="#0a0f14" stroke-width="0.9" stroke-linejoin="round" />
<polygon points="1285.0,263.1 1290.0,259.4 1292.5,267.5 1291.2,266.2 1286.2,291.2 1281.9,288.8" fill="#261d1d" stroke="#0a0f14" stroke-width="0.9" stroke-linejoin="round" />
<polygon points="1035.0,187.5 1041.9,195.0 1040.6,235.6 1033.8,228.8" fill="#3a2c2c" stroke="#0a0f14" stroke-width="0.9" stroke-linejoin="round" />
<polygon points="1041.9,195.0 1058.1,191.2 1057.5,231.9 1040.6,235.6" fill="#261d1d" stroke="#0a0f14" stroke-width="0.9" stroke-linejoin="round" />
<polygon points="1035.0,187.5 1051.9,184.4 1058.1,191.2 1041.9,195.0" fill="#5a4545" stroke="#0a0f14" stroke-width="0.9" stroke-linejoin="round" />
<polygon points="1126.2,168.1 1133.1,175.0 1130.0,216.9 1123.1,208.1" fill="#3a2c2c" stroke="#0a0f14" stroke-width="0.9" stroke-linejoin="round" />
<polygon points="1133.1,175.0 1148.8,171.2 1146.9,212.5 1130.0,216.9" fill="#261d1d" stroke="#0a0f14" stroke-width="0.9" stroke-linejoin="round" />
<polygon points="1126.2,168.1 1142.5,165.0 1148.8,171.2 1133.1,175.0" fill="#5a4545" stroke="#0a0f14" stroke-width="0.9" stroke-linejoin="round" />
<ellipse cx="1045.0" cy="188.5" rx="1.1" ry="0.9" fill="#140d0d"/>
<ellipse cx="1137.9" cy="168.8" rx="1.1" ry="0.9" fill="#140d0d"/>
<polygon points="1236.9,278.8 1246.9,288.8 1246.2,291.9 1235.6,290.6" fill="#261d1d" stroke="#0a0f14" stroke-width="0.9" stroke-linejoin="round" />
<polygon points="1236.9,278.8 1255.0,274.4 1263.8,284.4 1246.9,288.8" fill="#5a4545" stroke="#0a0f14" stroke-width="0.9" stroke-linejoin="round" />
<polygon points="1139.4,302.5 1146.9,311.9 1146.2,315.0 1138.8,315.0" fill="#261d1d" stroke="#0a0f14" stroke-width="0.9" stroke-linejoin="round" />
<polygon points="1139.4,302.5 1158.1,297.5 1166.2,307.5 1146.9,311.9" fill="#5a4545" stroke="#0a0f14" stroke-width="0.9" stroke-linejoin="round" />
<ellipse cx="1253.8" cy="282.2" rx="1.1" ry="0.9" fill="#140d0d"/>
<ellipse cx="1152.5" cy="306.2" rx="1.1" ry="0.9" fill="#140d0d"/>
<polygon points="1118.8,337.8 1136.5,333.2 1136.5,361.9 1135.0,361.2" fill="#755959" stroke="#120c0c" stroke-width="0.8" stroke-linejoin="round" />
<polygon points="1141.2,316.2 1146.2,325.0 1281.9,289.8 1286.2,291.2 1280.0,328.1 1138.1,365.0 1135.6,362.5 1136.9,320.0" fill="#261d1d" stroke="#0a0f14" stroke-width="0.9" stroke-linejoin="round" />
<polygon points="1157.2,325.0 1159.6,324.4 1154.0,361.1 1151.6,361.6" fill="#4d3a3a" stroke="#1a1212" stroke-width="0.3" stroke-linejoin="round" />
<polygon points="1161.4,324.0 1163.8,323.5 1158.2,360.0 1155.9,360.5" fill="#4d3a3a" stroke="#1a1212" stroke-width="0.3" stroke-linejoin="round" />
<polygon points="1165.6,323.0 1168.0,322.5 1162.5,358.9 1160.1,359.4" fill="#4d3a3a" stroke="#1a1212" stroke-width="0.3" stroke-linejoin="round" />
<polygon points="1169.8,322.1 1172.2,321.5 1166.7,357.7 1164.3,358.3" fill="#4d3a3a" stroke="#1a1212" stroke-width="0.3" stroke-linejoin="round" />
<polygon points="1174.0,321.1 1176.4,320.5 1170.9,356.6 1168.5,357.2" fill="#4d3a3a" stroke="#1a1212" stroke-width="0.3" stroke-linejoin="round" />
<polygon points="1178.2,320.1 1180.6,319.5 1175.2,355.5 1172.8,356.1" fill="#4d3a3a" stroke="#1a1212" stroke-width="0.3" stroke-linejoin="round" />
<polygon points="1182.4,319.1 1184.8,318.6 1179.4,354.4 1177.0,355.0" fill="#4d3a3a" stroke="#1a1212" stroke-width="0.3" stroke-linejoin="round" />
<polygon points="1186.6,318.1 1189.0,317.6 1183.6,353.3 1181.2,353.9" fill="#4d3a3a" stroke="#1a1212" stroke-width="0.3" stroke-linejoin="round" />
<polygon points="1190.8,317.2 1193.2,316.6 1187.8,352.2 1185.5,352.8" fill="#4d3a3a" stroke="#1a1212" stroke-width="0.3" stroke-linejoin="round" />
<polygon points="1195.0,316.2 1197.4,315.6 1192.1,351.1 1189.7,351.7" fill="#4d3a3a" stroke="#1a1212" stroke-width="0.3" stroke-linejoin="round" />
<polygon points="1199.2,315.2 1201.5,314.6 1196.3,350.0 1193.9,350.6" fill="#4d3a3a" stroke="#1a1212" stroke-width="0.3" stroke-linejoin="round" />
<polygon points="1203.4,314.2 1205.7,313.6 1200.5,348.9 1198.2,349.5" fill="#4d3a3a" stroke="#1a1212" stroke-width="0.3" stroke-linejoin="round" />
<polygon points="1207.6,313.2 1209.9,312.7 1204.8,347.8 1202.4,348.4" fill="#4d3a3a" stroke="#1a1212" stroke-width="0.3" stroke-linejoin="round" />
<polygon points="1211.8,312.2 1214.1,311.7 1209.0,346.7 1206.6,347.2" fill="#4d3a3a" stroke="#1a1212" stroke-width="0.3" stroke-linejoin="round" />
<polygon points="1215.9,311.3 1218.3,310.7 1213.2,345.6 1210.9,346.1" fill="#4d3a3a" stroke="#1a1212" stroke-width="0.3" stroke-linejoin="round" />
<polygon points="1220.1,310.3 1222.5,309.7 1217.5,344.5 1215.1,345.0" fill="#4d3a3a" stroke="#1a1212" stroke-width="0.3" stroke-linejoin="round" />
<polygon points="1224.3,309.3 1226.7,308.7 1221.7,343.4 1219.3,343.9" fill="#4d3a3a" stroke="#1a1212" stroke-width="0.3" stroke-linejoin="round" />
<polygon points="1228.5,308.3 1230.9,307.8 1225.9,342.3 1223.5,342.8" fill="#4d3a3a" stroke="#1a1212" stroke-width="0.3" stroke-linejoin="round" />
<polygon points="1232.7,307.3 1235.1,306.8 1230.2,341.2 1227.8,341.7" fill="#4d3a3a" stroke="#1a1212" stroke-width="0.3" stroke-linejoin="round" />
<polygon points="1236.9,306.4 1239.3,305.8 1234.4,340.1 1232.0,340.6" fill="#4d3a3a" stroke="#1a1212" stroke-width="0.3" stroke-linejoin="round" />
<polygon points="1241.1,305.4 1243.5,304.8 1238.6,338.9 1236.2,339.5" fill="#4d3a3a" stroke="#1a1212" stroke-width="0.3" stroke-linejoin="round" />
<polygon points="1245.3,304.4 1247.7,303.8 1242.8,337.8 1240.5,338.4" fill="#4d3a3a" stroke="#1a1212" stroke-width="0.3" stroke-linejoin="round" />
<polygon points="1249.5,303.4 1251.9,302.9 1247.1,336.7 1244.7,337.3" fill="#4d3a3a" stroke="#1a1212" stroke-width="0.3" stroke-linejoin="round" />
<polygon points="1253.7,302.4 1256.0,301.9 1251.3,335.6 1248.9,336.2" fill="#4d3a3a" stroke="#1a1212" stroke-width="0.3" stroke-linejoin="round" />
<polygon points="1257.9,301.5 1260.2,300.9 1255.5,334.5 1253.2,335.1" fill="#4d3a3a" stroke="#1a1212" stroke-width="0.3" stroke-linejoin="round" />
<polygon points="1262.1,300.5 1264.4,299.9 1259.8,333.4 1257.4,334.0" fill="#4d3a3a" stroke="#1a1212" stroke-width="0.3" stroke-linejoin="round" />
<polygon points="1266.2,299.5 1268.6,298.9 1264.0,332.3 1261.6,332.9" fill="#4d3a3a" stroke="#1a1212" stroke-width="0.3" stroke-linejoin="round" />
<polygon points="1141.2,315.0 1276.9,282.5 1281.9,288.8 1146.2,324.4" fill="#6d5252" stroke="#0a0f14" stroke-width="0.9" stroke-linejoin="round" />
<polygon points="1146.2,324.4 1281.9,288.8 1281.9,291.2 1146.2,327.8" fill="#2e2222" stroke="#0a0f14" stroke-width="0.9" stroke-linejoin="round" />
<polygon points="1391.9,358.8 1396.9,363.8 1385.6,388.1 1382.5,385.6" fill="#3f7fab" stroke="#0a0f14" stroke-width="0.9" stroke-linejoin="round" />
<polygon points="1396.9,363.8 1549.4,323.1 1538.8,350.6 1385.6,388.1" fill="#213d50" stroke="#0a0f14" stroke-width="0.9" stroke-linejoin="round" />
<polyline points="1397.8,366.5 1547.8,326.5" fill="none" stroke="#0a0f14" stroke-width="0.8" stroke-linejoin="round" stroke-linecap="round" />
<polygon points="1399.8,367.5 1531.2,332.2 1526.9,348.1 1395.6,383.5" fill="#1b3546" stroke="#0a0f14" stroke-width="0.7" stroke-linejoin="round" />
<path d="M1412.2,364.0 L1410.2,374.8 Q1411.2,375.8 1412.2,374.2 L1414.2,363.5" fill="none" stroke="#3a78a4" stroke-width="0.8"/>
<path d="M1416.3,362.9 L1414.3,373.7 Q1415.3,374.7 1416.3,373.2 L1418.3,362.4" fill="none" stroke="#3a78a4" stroke-width="0.8"/>
<path d="M1420.3,361.8 L1418.3,372.6 Q1419.3,373.6 1420.3,372.1 L1422.3,361.3" fill="none" stroke="#3a78a4" stroke-width="0.8"/>
<path d="M1424.4,360.8 L1422.4,371.5 Q1423.4,372.5 1424.4,371.0 L1426.4,360.2" fill="none" stroke="#3a78a4" stroke-width="0.8"/>
<path d="M1428.4,359.7 L1426.4,370.4 Q1427.4,371.4 1428.4,369.9 L1430.4,359.2" fill="none" stroke="#3a78a4" stroke-width="0.8"/>
<path d="M1432.5,358.6 L1430.5,369.3 Q1431.5,370.3 1432.5,368.8 L1434.5,358.1" fill="none" stroke="#3a78a4" stroke-width="0.8"/>
<path d="M1436.5,357.5 L1434.5,368.2 Q1435.5,369.2 1436.5,367.8 L1438.5,357.0" fill="none" stroke="#3a78a4" stroke-width="0.8"/>
<path d="M1440.6,356.4 L1438.6,367.2 Q1439.6,368.2 1440.6,366.7 L1442.6,355.9" fill="none" stroke="#3a78a4" stroke-width="0.8"/>
<path d="M1444.6,355.3 L1442.6,366.1 Q1443.6,367.1 1444.6,365.6 L1446.6,354.8" fill="none" stroke="#3a78a4" stroke-width="0.8"/>
<path d="M1448.7,354.2 L1446.7,365.0 Q1447.7,366.0 1448.7,364.5 L1450.7,353.8" fill="none" stroke="#3a78a4" stroke-width="0.8"/>
<path d="M1452.7,353.2 L1450.7,363.9 Q1451.7,364.9 1452.7,363.4 L1454.7,352.7" fill="none" stroke="#3a78a4" stroke-width="0.8"/>
<path d="M1456.8,352.1 L1454.8,362.8 Q1455.8,363.8 1456.8,362.3 L1458.8,351.6" fill="none" stroke="#3a78a4" stroke-width="0.8"/>
<path d="M1460.8,351.0 L1458.8,361.8 Q1459.8,362.8 1460.8,361.2 L1462.8,350.5" fill="none" stroke="#3a78a4" stroke-width="0.8"/>
<path d="M1464.9,349.9 L1462.9,360.7 Q1463.9,361.7 1464.9,360.2 L1466.9,349.4" fill="none" stroke="#3a78a4" stroke-width="0.8"/>
<path d="M1468.9,348.8 L1466.9,359.6 Q1467.9,360.6 1468.9,359.1 L1470.9,348.3" fill="none" stroke="#3a78a4" stroke-width="0.8"/>
<path d="M1472.9,347.8 L1470.9,358.5 Q1471.9,359.5 1472.9,358.0 L1474.9,347.2" fill="none" stroke="#3a78a4" stroke-width="0.8"/>
<path d="M1477.0,346.7 L1475.0,357.4 Q1476.0,358.4 1477.0,356.9 L1479.0,346.2" fill="none" stroke="#3a78a4" stroke-width="0.8"/>
<path d="M1481.0,345.6 L1479.0,356.3 Q1480.0,357.3 1481.0,355.8 L1483.0,345.1" fill="none" stroke="#3a78a4" stroke-width="0.8"/>
<path d="M1485.1,344.5 L1483.1,355.2 Q1484.1,356.2 1485.1,354.8 L1487.1,344.0" fill="none" stroke="#3a78a4" stroke-width="0.8"/>
<path d="M1489.1,343.4 L1487.1,354.2 Q1488.1,355.2 1489.1,353.7 L1491.1,342.9" fill="none" stroke="#3a78a4" stroke-width="0.8"/>
<path d="M1493.2,342.3 L1491.2,353.1 Q1492.2,354.1 1493.2,352.6 L1495.2,341.8" fill="none" stroke="#3a78a4" stroke-width="0.8"/>
<path d="M1497.2,341.2 L1495.2,352.0 Q1496.2,353.0 1497.2,351.5 L1499.2,340.8" fill="none" stroke="#3a78a4" stroke-width="0.8"/>
<path d="M1501.3,340.2 L1499.3,350.9 Q1500.3,351.9 1501.3,350.4 L1503.3,339.7" fill="none" stroke="#3a78a4" stroke-width="0.8"/>
<path d="M1505.3,339.1 L1503.3,349.8 Q1504.3,350.8 1505.3,349.3 L1507.3,338.6" fill="none" stroke="#3a78a4" stroke-width="0.8"/>
<path d="M1509.4,338.0 L1507.4,348.8 Q1508.4,349.8 1509.4,348.2 L1511.4,337.5" fill="none" stroke="#3a78a4" stroke-width="0.8"/>
<path d="M1513.4,336.9 L1511.4,347.7 Q1512.4,348.7 1513.4,347.2 L1515.4,336.4" fill="none" stroke="#3a78a4" stroke-width="0.8"/>
<path d="M1517.5,335.8 L1515.5,346.6 Q1516.5,347.6 1517.5,346.1 L1519.5,335.3" fill="none" stroke="#3a78a4" stroke-width="0.8"/>
<path d="M1521.5,334.8 L1519.5,345.5 Q1520.5,346.5 1521.5,345.0 L1523.5,334.2" fill="none" stroke="#3a78a4" stroke-width="0.8"/>
<polygon points="1397.8,366.9 1400.0,366.2 1396.9,381.5 1394.8,382.2" fill="#3f7fab" stroke="#0a0f14" stroke-width="0.6" stroke-linejoin="round" />
<polygon points="1532.5,331.9 1545.2,328.2 1537.8,350.6 1527.8,348.5" fill="#3a78a4" stroke="#0a0f14" stroke-width="0.7" stroke-linejoin="round" />
<polygon points="1533.1,333.1 1539.0,331.5 1533.1,348.1 1529.0,347.2" fill="#213d50" stroke="#0a0f14" stroke-width="0.5" stroke-linejoin="round" />
<polygon points="1391.9,358.8 1543.1,316.9 1549.4,322.5 1396.9,363.8" fill="#62c8ff" stroke="#0a0f14" stroke-width="0.9" stroke-linejoin="round" />
<path d="M1414.0,353.5 L1413.0,350.5 Q1415.0,348.8 1416.8,349.5 L1417.8,352.5 Z" fill="#1b3546" stroke="#0a0f14" stroke-width="0.5"/>
<path d="M1419.3,352.0 L1418.3,349.0 Q1420.3,347.3 1422.0,348.0 L1423.0,351.0 Z" fill="#1b3546" stroke="#0a0f14" stroke-width="0.5"/>
<path d="M1424.5,350.6 L1423.5,347.6 Q1425.5,345.8 1427.3,346.6 L1428.3,349.6 Z" fill="#1b3546" stroke="#0a0f14" stroke-width="0.5"/>
<path d="M1429.8,349.1 L1428.8,346.1 Q1430.8,344.4 1432.6,345.1 L1433.6,348.1 Z" fill="#1b3546" stroke="#0a0f14" stroke-width="0.5"/>
<path d="M1435.1,347.7 L1434.1,344.7 Q1436.1,342.9 1437.8,343.7 L1438.8,346.7 Z" fill="#1b3546" stroke="#0a0f14" stroke-width="0.5"/>
<path d="M1440.4,346.2 L1439.4,343.2 Q1441.4,341.5 1443.1,342.2 L1444.1,345.2 Z" fill="#1b3546" stroke="#0a0f14" stroke-width="0.5"/>
<path d="M1445.6,344.8 L1444.6,341.8 Q1446.6,340.0 1448.4,340.8 L1449.4,343.8 Z" fill="#1b3546" stroke="#0a0f14" stroke-width="0.5"/>
<path d="M1450.9,343.3 L1449.9,340.3 Q1451.9,338.5 1453.7,339.3 L1454.7,342.3 Z" fill="#1b3546" stroke="#0a0f14" stroke-width="0.5"/>
<path d="M1456.2,341.8 L1455.2,338.8 Q1457.2,337.1 1458.9,337.8 L1459.9,340.8 Z" fill="#1b3546" stroke="#0a0f14" stroke-width="0.5"/>
<path d="M1461.5,340.4 L1460.5,337.4 Q1462.5,335.6 1464.2,336.4 L1465.2,339.4 Z" fill="#1b3546" stroke="#0a0f14" stroke-width="0.5"/>
<path d="M1466.7,338.9 L1465.7,335.9 Q1467.7,334.2 1469.5,334.9 L1470.5,337.9 Z" fill="#1b3546" stroke="#0a0f14" stroke-width="0.5"/>
<path d="M1472.0,337.5 L1471.0,334.5 Q1473.0,332.7 1474.8,333.5 L1475.8,336.5 Z" fill="#1b3546" stroke="#0a0f14" stroke-width="0.5"/>
<path d="M1477.3,336.0 L1476.3,333.0 Q1478.3,331.2 1480.0,332.0 L1481.0,335.0 Z" fill="#1b3546" stroke="#0a0f14" stroke-width="0.5"/>
<path d="M1482.6,334.5 L1481.6,331.5 Q1483.6,329.8 1485.3,330.5 L1486.3,333.5 Z" fill="#1b3546" stroke="#0a0f14" stroke-width="0.5"/>
<path d="M1487.8,333.1 L1486.8,330.1 Q1488.8,328.3 1490.6,329.1 L1491.6,332.1 Z" fill="#1b3546" stroke="#0a0f14" stroke-width="0.5"/>
<path d="M1493.1,331.6 L1492.1,328.6 Q1494.1,326.9 1495.9,327.6 L1496.9,330.6 Z" fill="#1b3546" stroke="#0a0f14" stroke-width="0.5"/>
<path d="M1498.4,330.2 L1497.4,327.2 Q1499.4,325.4 1501.1,326.2 L1502.1,329.2 Z" fill="#1b3546" stroke="#0a0f14" stroke-width="0.5"/>
<path d="M1503.7,328.7 L1502.7,325.7 Q1504.7,324.0 1506.4,324.7 L1507.4,327.7 Z" fill="#1b3546" stroke="#0a0f14" stroke-width="0.5"/>
<path d="M1508.9,327.2 L1507.9,324.2 Q1509.9,322.5 1511.7,323.2 L1512.7,326.2 Z" fill="#1b3546" stroke="#0a0f14" stroke-width="0.5"/>
<path d="M1514.2,325.8 L1513.2,322.8 Q1515.2,321.0 1517.0,321.8 L1518.0,324.8 Z" fill="#1b3546" stroke="#0a0f14" stroke-width="0.5"/>
<path d="M1519.5,324.3 L1518.5,321.3 Q1520.5,319.6 1522.2,320.3 L1523.2,323.3 Z" fill="#1b3546" stroke="#0a0f14" stroke-width="0.5"/>
<path d="M1524.8,322.9 L1523.8,319.9 Q1525.8,318.1 1527.5,318.9 L1528.5,321.9 Z" fill="#1b3546" stroke="#0a0f14" stroke-width="0.5"/>
<polygon points="1670.5,623.0 1678.5,628.7 1668.3,661.3 1664.3,657.8" fill="#3f7fab" stroke="#0a0f14" stroke-width="0.9" stroke-linejoin="round" />
<polygon points="1678.5,628.7 1852.0,567.1 1841.7,601.3 1668.3,661.3" fill="#213d50" stroke="#0a0f14" stroke-width="0.9" stroke-linejoin="round" />
<polygon points="1701.6,620.5 1703.9,619.7 1694.8,649.3 1692.5,650.1" fill="#3a78a4" stroke="#0a0f14" stroke-width="0.25" stroke-linejoin="round" />
<polygon points="1705.2,619.2 1707.5,618.4 1698.5,648.0 1696.2,648.8" fill="#3a78a4" stroke="#0a0f14" stroke-width="0.25" stroke-linejoin="round" />
<polygon points="1708.9,617.9 1711.2,617.1 1702.1,646.8 1699.8,647.6" fill="#3a78a4" stroke="#0a0f14" stroke-width="0.25" stroke-linejoin="round" />
<polygon points="1712.5,616.6 1714.8,615.8 1705.7,645.5 1703.5,646.3" fill="#3a78a4" stroke="#0a0f14" stroke-width="0.25" stroke-linejoin="round" />
<polygon points="1716.2,615.4 1718.5,614.6 1709.4,644.3 1707.1,645.1" fill="#3a78a4" stroke="#0a0f14" stroke-width="0.25" stroke-linejoin="round" />
<polygon points="1719.8,614.1 1722.1,613.3 1713.0,643.0 1710.7,643.8" fill="#3a78a4" stroke="#0a0f14" stroke-width="0.25" stroke-linejoin="round" />
<polygon points="1723.5,612.8 1725.8,612.0 1716.7,641.8 1714.4,642.6" fill="#3a78a4" stroke="#0a0f14" stroke-width="0.25" stroke-linejoin="round" />
<polygon points="1727.1,611.5 1729.4,610.7 1720.3,640.5 1718.0,641.3" fill="#3a78a4" stroke="#0a0f14" stroke-width="0.25" stroke-linejoin="round" />
<polygon points="1730.8,610.2 1733.1,609.4 1723.9,639.3 1721.7,640.1" fill="#3a78a4" stroke="#0a0f14" stroke-width="0.25" stroke-linejoin="round" />
<polygon points="1734.4,608.9 1736.7,608.1 1727.6,638.0 1725.3,638.8" fill="#3a78a4" stroke="#0a0f14" stroke-width="0.25" stroke-linejoin="round" />
<polygon points="1738.1,607.6 1740.4,606.8 1731.2,636.8 1728.9,637.6" fill="#3a78a4" stroke="#0a0f14" stroke-width="0.25" stroke-linejoin="round" />
<polygon points="1741.7,606.3 1744.0,605.5 1734.9,635.5 1732.6,636.3" fill="#3a78a4" stroke="#0a0f14" stroke-width="0.25" stroke-linejoin="round" />
<polygon points="1745.4,605.0 1747.7,604.2 1738.5,634.3 1736.2,635.1" fill="#3a78a4" stroke="#0a0f14" stroke-width="0.25" stroke-linejoin="round" />
<polygon points="1749.0,603.7 1751.3,602.9 1742.1,633.0 1739.9,633.8" fill="#3a78a4" stroke="#0a0f14" stroke-width="0.25" stroke-linejoin="round" />
<polygon points="1752.7,602.4 1755.0,601.6 1745.8,631.7 1743.5,632.5" fill="#3a78a4" stroke="#0a0f14" stroke-width="0.25" stroke-linejoin="round" />
<polygon points="1756.3,601.2 1758.6,600.4 1749.4,630.5 1747.1,631.3" fill="#3a78a4" stroke="#0a0f14" stroke-width="0.25" stroke-linejoin="round" />
<polygon points="1760.0,599.9 1762.3,599.1 1753.1,629.2 1750.8,630.0" fill="#3a78a4" stroke="#0a0f14" stroke-width="0.25" stroke-linejoin="round" />
<polygon points="1763.7,598.6 1765.9,597.8 1756.7,628.0 1754.4,628.8" fill="#3a78a4" stroke="#0a0f14" stroke-width="0.25" stroke-linejoin="round" />
<polygon points="1767.3,597.3 1769.6,596.5 1760.3,626.7 1758.1,627.5" fill="#3a78a4" stroke="#0a0f14" stroke-width="0.25" stroke-linejoin="round" />
<polygon points="1771.0,596.0 1773.2,595.2 1764.0,625.5 1761.7,626.3" fill="#3a78a4" stroke="#0a0f14" stroke-width="0.25" stroke-linejoin="round" />
<polygon points="1774.6,594.7 1776.9,593.9 1767.6,624.2 1765.3,625.0" fill="#3a78a4" stroke="#0a0f14" stroke-width="0.25" stroke-linejoin="round" />
<polygon points="1778.3,593.4 1780.5,592.6 1771.3,623.0 1769.0,623.8" fill="#3a78a4" stroke="#0a0f14" stroke-width="0.25" stroke-linejoin="round" />
<polygon points="1781.9,592.1 1784.2,591.3 1774.9,621.7 1772.6,622.5" fill="#3a78a4" stroke="#0a0f14" stroke-width="0.25" stroke-linejoin="round" />
<polygon points="1785.6,590.8 1787.8,590.0 1778.5,620.5 1776.3,621.3" fill="#3a78a4" stroke="#0a0f14" stroke-width="0.25" stroke-linejoin="round" />
<polygon points="1789.2,589.5 1791.5,588.7 1782.2,619.2 1779.9,620.0" fill="#3a78a4" stroke="#0a0f14" stroke-width="0.25" stroke-linejoin="round" />
<polygon points="1792.9,588.2 1795.1,587.4 1785.8,618.0 1783.5,618.8" fill="#3a78a4" stroke="#0a0f14" stroke-width="0.25" stroke-linejoin="round" />
<polygon points="1796.5,587.0 1798.8,586.2 1789.5,616.7 1787.2,617.5" fill="#3a78a4" stroke="#0a0f14" stroke-width="0.25" stroke-linejoin="round" />
<polygon points="1800.2,585.7 1802.4,584.9 1793.1,615.5 1790.8,616.3" fill="#3a78a4" stroke="#0a0f14" stroke-width="0.25" stroke-linejoin="round" />
<polygon points="1803.8,584.4 1806.1,583.6 1796.7,614.2 1794.5,615.0" fill="#3a78a4" stroke="#0a0f14" stroke-width="0.25" stroke-linejoin="round" />
<polygon points="1807.5,583.1 1809.8,582.3 1800.4,612.9 1798.1,613.7" fill="#3a78a4" stroke="#0a0f14" stroke-width="0.25" stroke-linejoin="round" />
<polygon points="1811.1,581.8 1813.4,581.0 1804.0,611.7 1801.7,612.5" fill="#3a78a4" stroke="#0a0f14" stroke-width="0.25" stroke-linejoin="round" />
<polygon points="1814.8,580.5 1817.1,579.7 1807.7,610.4 1805.4,611.2" fill="#3a78a4" stroke="#0a0f14" stroke-width="0.25" stroke-linejoin="round" />
<polygon points="1818.4,579.2 1820.7,578.4 1811.3,609.2 1809.0,610.0" fill="#3a78a4" stroke="#0a0f14" stroke-width="0.25" stroke-linejoin="round" />
<polygon points="1822.1,577.9 1824.4,577.1 1814.9,607.9 1812.7,608.7" fill="#3a78a4" stroke="#0a0f14" stroke-width="0.25" stroke-linejoin="round" />
<polygon points="1825.7,576.6 1828.0,575.8 1818.6,606.7 1816.3,607.5" fill="#3a78a4" stroke="#0a0f14" stroke-width="0.25" stroke-linejoin="round" />
<polygon points="1829.4,575.3 1831.7,574.5 1822.2,605.4 1819.9,606.2" fill="#3a78a4" stroke="#0a0f14" stroke-width="0.25" stroke-linejoin="round" />
<polygon points="1670.5,623.0 1844.0,561.4 1852.0,567.1 1678.5,628.7" fill="#62c8ff" stroke="#0a0f14" stroke-width="0.9" stroke-linejoin="round" />
<polygon points="1700.7,620.9 1702.0,620.3 1700.4,616.0 1699.1,616.5" fill="#1b3546" stroke="#0a0f14" stroke-width="0.3" stroke-linejoin="round" />
<polygon points="1704.3,619.6 1705.7,619.1 1704.1,614.7 1702.7,615.2" fill="#1b3546" stroke="#0a0f14" stroke-width="0.3" stroke-linejoin="round" />
<polygon points="1708.0,618.3 1709.3,617.8 1707.7,613.4 1706.4,613.9" fill="#1b3546" stroke="#0a0f14" stroke-width="0.3" stroke-linejoin="round" />
<polygon points="1711.6,617.0 1713.0,616.5 1711.4,612.1 1710.0,612.6" fill="#1b3546" stroke="#0a0f14" stroke-width="0.3" stroke-linejoin="round" />
<polygon points="1715.3,615.7 1716.6,615.2 1715.0,610.8 1713.7,611.3" fill="#1b3546" stroke="#0a0f14" stroke-width="0.3" stroke-linejoin="round" />
<polygon points="1718.9,614.4 1720.3,613.9 1718.7,609.5 1717.3,610.0" fill="#1b3546" stroke="#0a0f14" stroke-width="0.3" stroke-linejoin="round" />
<polygon points="1722.6,613.1 1723.9,612.6 1722.3,608.2 1721.0,608.7" fill="#1b3546" stroke="#0a0f14" stroke-width="0.3" stroke-linejoin="round" />
<polygon points="1726.2,611.8 1727.6,611.3 1726.0,606.9 1724.6,607.4" fill="#1b3546" stroke="#0a0f14" stroke-width="0.3" stroke-linejoin="round" />
<polygon points="1729.9,610.5 1731.2,610.0 1729.6,605.6 1728.3,606.1" fill="#1b3546" stroke="#0a0f14" stroke-width="0.3" stroke-linejoin="round" />
<polygon points="1733.5,609.2 1734.9,608.7 1733.3,604.3 1731.9,604.8" fill="#1b3546" stroke="#0a0f14" stroke-width="0.3" stroke-linejoin="round" />
<polygon points="1737.2,608.0 1738.5,607.4 1737.0,603.0 1735.6,603.6" fill="#1b3546" stroke="#0a0f14" stroke-width="0.3" stroke-linejoin="round" />
<polygon points="1740.8,606.7 1742.2,606.1 1740.6,601.8 1739.2,602.3" fill="#1b3546" stroke="#0a0f14" stroke-width="0.3" stroke-linejoin="round" />
<polygon points="1744.5,605.4 1745.9,604.9 1744.3,600.5 1742.9,601.0" fill="#1b3546" stroke="#0a0f14" stroke-width="0.3" stroke-linejoin="round" />
<polygon points="1748.1,604.1 1749.5,603.6 1747.9,599.2 1746.5,599.7" fill="#1b3546" stroke="#0a0f14" stroke-width="0.3" stroke-linejoin="round" />
<polygon points="1751.8,602.8 1753.2,602.3 1751.6,597.9 1750.2,598.4" fill="#1b3546" stroke="#0a0f14" stroke-width="0.3" stroke-linejoin="round" />
<polygon points="1755.4,601.5 1756.8,601.0 1755.2,596.6 1753.8,597.1" fill="#1b3546" stroke="#0a0f14" stroke-width="0.3" stroke-linejoin="round" />
<polygon points="1759.1,600.2 1760.5,599.7 1758.9,595.3 1757.5,595.8" fill="#1b3546" stroke="#0a0f14" stroke-width="0.3" stroke-linejoin="round" />
<polygon points="1762.7,598.9 1764.1,598.4 1762.5,594.0 1761.1,594.5" fill="#1b3546" stroke="#0a0f14" stroke-width="0.3" stroke-linejoin="round" />
<polygon points="1766.4,597.6 1767.8,597.1 1766.2,592.7 1764.8,593.2" fill="#1b3546" stroke="#0a0f14" stroke-width="0.3" stroke-linejoin="round" />
<polygon points="1770.0,596.3 1771.4,595.8 1769.8,591.4 1768.4,591.9" fill="#1b3546" stroke="#0a0f14" stroke-width="0.3" stroke-linejoin="round" />
<polygon points="1773.7,595.0 1775.1,594.5 1773.5,590.1 1772.1,590.6" fill="#1b3546" stroke="#0a0f14" stroke-width="0.3" stroke-linejoin="round" />
<polygon points="1777.3,593.7 1778.7,593.2 1777.1,588.8 1775.7,589.4" fill="#1b3546" stroke="#0a0f14" stroke-width="0.3" stroke-linejoin="round" />
<polygon points="1781.0,592.5 1782.4,591.9 1780.8,587.6 1779.4,588.1" fill="#1b3546" stroke="#0a0f14" stroke-width="0.3" stroke-linejoin="round" />
<polygon points="1784.6,591.2 1786.0,590.7 1784.4,586.3 1783.0,586.8" fill="#1b3546" stroke="#0a0f14" stroke-width="0.3" stroke-linejoin="round" />
<polygon points="1788.3,589.9 1789.7,589.4 1788.1,585.0 1786.7,585.5" fill="#1b3546" stroke="#0a0f14" stroke-width="0.3" stroke-linejoin="round" />
<polygon points="1792.0,588.6 1793.3,588.1 1791.7,583.7 1790.4,584.2" fill="#1b3546" stroke="#0a0f14" stroke-width="0.3" stroke-linejoin="round" />
<polygon points="1795.6,587.3 1797.0,586.8 1795.4,582.4 1794.0,582.9" fill="#1b3546" stroke="#0a0f14" stroke-width="0.3" stroke-linejoin="round" />
<polygon points="1799.3,586.0 1800.6,585.5 1799.0,581.1 1797.7,581.6" fill="#1b3546" stroke="#0a0f14" stroke-width="0.3" stroke-linejoin="round" />
<polygon points="1802.9,584.7 1804.3,584.2 1802.7,579.8 1801.3,580.3" fill="#1b3546" stroke="#0a0f14" stroke-width="0.3" stroke-linejoin="round" />
<polygon points="1806.6,583.4 1807.9,582.9 1806.3,578.5 1805.0,579.0" fill="#1b3546" stroke="#0a0f14" stroke-width="0.3" stroke-linejoin="round" />
<polygon points="1810.2,582.1 1811.6,581.6 1810.0,577.2 1808.6,577.7" fill="#1b3546" stroke="#0a0f14" stroke-width="0.3" stroke-linejoin="round" />
<polygon points="1813.9,580.8 1815.2,580.3 1813.6,575.9 1812.3,576.4" fill="#1b3546" stroke="#0a0f14" stroke-width="0.3" stroke-linejoin="round" />
<polygon points="1817.5,579.5 1818.9,579.0 1817.3,574.6 1815.9,575.2" fill="#1b3546" stroke="#0a0f14" stroke-width="0.3" stroke-linejoin="round" />
<polygon points="1821.2,578.3 1822.5,577.7 1820.9,573.3 1819.6,573.9" fill="#1b3546" stroke="#0a0f14" stroke-width="0.3" stroke-linejoin="round" />
<polygon points="1824.8,577.0 1826.2,576.5 1824.6,572.1 1823.2,572.6" fill="#1b3546" stroke="#0a0f14" stroke-width="0.3" stroke-linejoin="round" />
<polygon points="1828.5,575.7 1829.8,575.2 1828.2,570.8 1826.9,571.3" fill="#1b3546" stroke="#0a0f14" stroke-width="0.3" stroke-linejoin="round" />
<polygon points="1428.8,398.8 1430.0,407.5 1450.0,425.0 1456.2,422.5 1455.0,413.8" fill="#3a6c91" stroke="#0a0f14" stroke-width="0.9" stroke-linejoin="round" />
<polygon points="1618.3,585.6 1645.1,610.1 1650.8,588.5 1634.8,589.0 1621.1,579.3" fill="#3a6c91" stroke="#0a0f14" stroke-width="0.9" stroke-linejoin="round" />
<polygon points="1650.8,588.5 1673.0,582.2 1666.8,602.7 1645.1,610.1" fill="#213d50" stroke="#0a0f14" stroke-width="0.9" stroke-linejoin="round" />
<polygon points="1650.2,586.8 1671.3,579.9 1673.0,582.5 1651.6,588.9" fill="#62c8ff" stroke="#0a0f14" stroke-width="0.6" stroke-linejoin="round" />
<polygon points="1736.9,558.2 1762.0,550.8 1762.6,552.5 1755.2,573.6" fill="#3a6c91" stroke="#0a0f14" stroke-width="0.9" stroke-linejoin="round" />
<polygon points="1762.6,552.2 1783.7,546.8 1776.3,566.2 1755.2,573.6" fill="#213d50" stroke="#0a0f14" stroke-width="0.9" stroke-linejoin="round" />
<polygon points="1762.0,549.9 1782.6,544.0 1783.9,546.9 1763.2,552.4" fill="#62c8ff" stroke="#0a0f14" stroke-width="0.6" stroke-linejoin="round" />
<polygon points="1422.5,387.5 1634.5,586.5 1635.0,591.0 1422.0,391.5" fill="#2d5a7a" stroke="#0a0f14" stroke-width="0.9" stroke-linejoin="round" />
<polygon points="1634.5,586.5 1805.0,530.0 1805.5,535.0 1635.0,591.0" fill="#213d50" stroke="#0a0f14" stroke-width="0.9" stroke-linejoin="round" />
<polygon points="1422.5,387.5 1577.5,345.5 1805.0,530.0 1634.5,586.5" fill="#62c8ff" stroke="#0a0f14" stroke-width="0.9" stroke-linejoin="round" />
<path d="M1797,537 l5,-1.5 l1,3 l-3,1.5 z" fill="#2d5a7a" stroke="#0a0f14" stroke-width="0.6" stroke-linejoin="round" />
<polygon points="1315.0,409.6 1317.9,407.9 1312.5,439.2 1308.3,438.3" fill="#7e4018" stroke="#1a0d05" stroke-width="0.6" stroke-linejoin="round" />
<polygon points="1317.5,407.9 1320.0,410.0 1314.6,440.0 1312.5,439.2" fill="#e5752a" stroke="#1a0d05" stroke-width="0.6" stroke-linejoin="round" />
<polygon points="1528.3,630.0 1532.5,631.2 1522.5,663.3 1517.9,661.2" fill="#e5752a" stroke="#1a0d05" stroke-width="0.6" stroke-linejoin="round" />
<polygon points="1528.3,630.0 1529.6,628.3 1519.6,658.8 1517.9,661.2" fill="#7e4018" stroke="#1a0d05" stroke-width="0.6" stroke-linejoin="round" />
<polygon points="1315.0,410.4 1528.3,632.9 1527.5,635.0 1313.8,412.9" fill="#7e4018" stroke="#1a0d05" stroke-width="0.6" stroke-linejoin="round" />
<polygon points="1315.0,410.0 1317.9,407.9 1532.5,629.2 1529.2,632.5" fill="#e5752a" stroke="#1a0d05" stroke-width="0.6" stroke-linejoin="round" />
<clipPath id="ch1"><polygon points="1075.5,540.5 1135.0,508.0 1245.0,656.2 1182.5,690.0"/></clipPath>
<clipPath id="ch2"><polygon points="1172.5,706.2 1263.8,656.2 1301.2,703.8 1207.5,753.8"/></clipPath>
<clipPath id="ch3"><polygon points="1156.2,529.5 1171.2,521.2 1250.0,620.0 1236.2,628.8"/></clipPath>
<clipPath id="ch4"><polygon points="1241.2,566.2 1270.0,540.0 1372.5,657.5 1335.0,683.8"/></clipPath>
<g clip-path="url(#ch1)"><polygon points="1100.0,530.0 1140.0,505.0 1250.0,645.0 1242.5,665.0 1200.0,670.0" fill="#70797f" opacity="0.4" filter="url(#b6)"/></g>
<g clip-path="url(#ch2)"><polygon points="1170.0,707.5 1265.0,655.0 1282.5,677.5 1185.0,730.0" fill="#70797f" opacity="0.38" filter="url(#b6)"/></g>
<g clip-path="url(#ch3)"><polygon points="1156.2,529.5 1171.2,521.2 1250.0,620.0 1236.2,628.8" fill="#70797f" opacity="0.3" filter="url(#b3)"/></g>
<g clip-path="url(#ch4)"><polygon points="1241.2,566.2 1270.0,540.0 1290.0,560.0 1342.5,670.0 1332.5,685.0" fill="#70797f" opacity="0.4" filter="url(#b6)"/></g>
<g clip-path="url(#ch4)"><polygon points="1270.0,540.0 1372.5,657.5 1360.0,667.5 1265.0,555.0" fill="#70797f" opacity="0.14" filter="url(#b6)"/></g>
<polygon points="1200.0,800.0 1385.0,720.0 1400.0,710.0 1400.0,720.0 1210.0,810.0" fill="#6e6e6e" opacity="0.35" filter="url(#b6)"/>
<polygon points="1025.0,536.2 1023.5,548.0 1196.2,801.2 1197.5,787.5" fill="#3a6f94" stroke="#0a0f14" stroke-width="0.9" stroke-linejoin="round" />
<polygon points="1197.5,788.0 1346.2,704.5 1353.8,705.0 1390.0,709.2 1380.0,720.0 1196.2,801.2" fill="#213d50" stroke="#0a0f14" stroke-width="0.9" stroke-linejoin="round" />
<polyline points="1198.0,793.8 1385.0,714.5" fill="none" stroke="#0a0f14" stroke-width="0.8" stroke-linejoin="round" stroke-linecap="round" />
<polyline points="1197.5,797.5 1382.0,718.0" fill="none" stroke="#3a6f94" stroke-width="0.8" stroke-linejoin="round" stroke-linecap="round" />
<path d="M1025.0,536.2 L1160.0,466.2 L1226.2,545.0 L1243.8,566.2 L1335.0,682.5 L1353.8,705.0 L1346.2,704.5 L1197.5,787.5 Z M1077.5,539.5 L1085.0,535.5 L1090.5,532.0 L1103.0,525.0 L1105.0,521.0 L1120.0,517.5 L1134.2,510.0 L1242.5,656.2 L1228.8,663.0 L1227.5,667.5 L1213.8,673.8 L1210.0,670.0 L1197.5,676.2 L1196.2,680.0 L1182.5,687.5 L1152.5,647.0 L1138.8,653.8 L1091.2,570.0 L1085.0,573.8 L1081.2,569.2 L1092.5,563.0 Z M1173.8,705.0 L1263.8,657.5 L1300.0,703.8 L1207.5,752.5 Z M1157.5,528.8 L1170.0,522.5 L1248.8,620.0 L1236.2,627.5 Z" fill="#62c8ff" stroke="#0a0f14" stroke-width="0.9" stroke-linejoin="round" fill-rule="evenodd"/>
<polygon points="1173.8,705.0 1263.8,657.5 1265.5,660.0 1178.0,708.8" fill="#213d50" stroke="#0a0f14" stroke-width="0.6" stroke-linejoin="round" />
<polygon points="1170.0,522.5 1248.8,620.0 1243.8,623.0 1167.0,525.0" fill="#2d5a7a" stroke="#0a0f14" stroke-width="0.6" stroke-linejoin="round" />
<polygon points="1157.5,528.8 1170.0,522.5 1171.2,526.2 1160.0,531.8" fill="#213d50" stroke="#0a0f14" stroke-width="0.6" stroke-linejoin="round" />
<polygon points="1077.5,539.5 1085.0,535.5 1086.2,537.5 1079.5,542.0" fill="#213d50" stroke="#0a0f14" stroke-width="0.6" stroke-linejoin="round" />
<polygon points="1081.2,569.2 1092.5,563.0 1093.2,565.5 1083.8,571.2" fill="#213d50" stroke="#0a0f14" stroke-width="0.6" stroke-linejoin="round" />
<polygon points="1085.0,521.2 1096.2,516.2 1103.0,525.0 1090.5,532.0" fill="#213d50" stroke="#0a0f14" stroke-width="0.9" stroke-linejoin="round" />
<polygon points="1113.8,511.2 1126.2,505.0 1134.2,510.0 1120.0,517.5" fill="#213d50" stroke="#0a0f14" stroke-width="0.9" stroke-linejoin="round" />
<polygon points="1074.5,526.2 1083.0,523.8 1085.0,532.0 1076.2,534.5" fill="#62c8ff" stroke="#0a0f14" stroke-width="0.9" stroke-linejoin="round" />
<polygon points="1101.2,512.5 1110.0,509.5 1112.5,518.0 1103.8,520.5" fill="#62c8ff" stroke="#0a0f14" stroke-width="0.9" stroke-linejoin="round" />
<circle cx="1079.8" cy="529.2" r="2.6" fill="#62c8ff" stroke="#0a0f14" stroke-width="0.7"/><circle cx="1079.8" cy="529.2" r="1.1" fill="#0a0f14"/>
<circle cx="1107.0" cy="515.0" r="2.6" fill="#62c8ff" stroke="#0a0f14" stroke-width="0.7"/><circle cx="1107.0" cy="515.0" r="1.1" fill="#0a0f14"/>
<polygon points="1131.2,497.5 1148.8,490.0 1160.0,503.8 1142.5,513.0" fill="#213d50" stroke="#0a0f14" stroke-width="0.9" stroke-linejoin="round" />
<polygon points="1142.0,510.5 1153.8,505.5 1155.0,508.0 1143.5,513.0" fill="#dfe9ee" stroke="none" stroke-width="0" stroke-linejoin="round" />
<polygon points="1148.8,490.0 1153.8,495.0 1152.0,506.2 1160.0,503.8" fill="#2d5a7a" stroke="#0a0f14" stroke-width="0.5" stroke-linejoin="round" />
<polyline points="1162.5,473.0 1040.5,535.0 1205.0,772.5 1342.5,705.5" fill="none" stroke="#0a0f14" stroke-width="1.3" stroke-linejoin="round" stroke-linecap="round" />
<polyline points="1153.8,478.0 1332.5,705.0" fill="none" stroke="#0a0f14" stroke-width="0.9" stroke-linejoin="round" stroke-linecap="round" />
<polyline points="1164.5,475.5 1345.0,703.0" fill="none" stroke="#0a0f14" stroke-width="0.9" stroke-linejoin="round" stroke-linecap="round" />
<polygon points="1228.8,567.5 1232.0,566.5 1232.5,569.0 1229.2,570.0" fill="#213d50" stroke="#0a0f14" stroke-width="0.9" stroke-linejoin="round" />
<polygon points="1260.0,526.2 1266.2,521.2 1377.5,650.5 1368.0,656.2" fill="#5ab3e9" stroke="#0a0f14" stroke-width="0.9" stroke-linejoin="round" />
<polygon points="1160.0,466.2 1187.5,442.5 1246.2,525.0 1226.2,545.0" fill="#5ab3e9" stroke="#0a0f14" stroke-width="0.9" stroke-linejoin="round" />
<polygon points="1187.5,442.5 1211.2,436.2 1265.0,520.0 1246.2,525.0" fill="#62c8ff" stroke="#0a0f14" stroke-width="0.9" stroke-linejoin="round" />
<polygon points="1226.2,545.0 1246.2,525.0 1265.0,520.0 1268.8,542.5 1260.0,546.2 1250.0,555.0 1242.5,565.0" fill="#213d50" stroke="#0a0f14" stroke-width="0.9" stroke-linejoin="round" />
<polygon points="1211.2,436.2 1218.8,441.2 1226.2,439.5 1422.5,663.8 1412.5,668.8 1387.5,677.5 1368.8,655.0 1377.5,650.5 1266.2,521.2 1265.0,520.0" fill="#62c8ff" stroke="#0a0f14" stroke-width="0.9" stroke-linejoin="round" />
<polyline points="1218.8,441.2 1412.5,668.8" fill="none" stroke="#0a0f14" stroke-width="0.9" stroke-linejoin="round" stroke-linecap="round" />
<polyline points="1218.8,441.2 1222.5,447.5" fill="none" stroke="#0a0f14" stroke-width="0.7" stroke-linejoin="round" stroke-linecap="round" />
<polygon points="1335.0,682.5 1368.8,655.0 1387.5,677.5 1353.8,705.0" fill="#5ab3e9" stroke="#0a0f14" stroke-width="0.9" stroke-linejoin="round" />
<polygon points="1353.8,705.0 1387.5,677.5 1412.5,668.8 1411.2,690.0 1407.5,703.8 1390.0,709.2" fill="#213d50" stroke="#0a0f14" stroke-width="0.9" stroke-linejoin="round" />
<polygon points="1412.5,668.8 1422.5,663.8 1418.8,687.5 1411.2,690.0" fill="#3f7fab" stroke="#0a0f14" stroke-width="0.9" stroke-linejoin="round" />
<polygon points="838.8,611.2 854.4,633.1 848.1,642.5 913.8,767.5 923.1,795.6 957.5,855.0 1013.8,830.0 995.0,811.2 913.8,686.2" fill="#6e6e6e" opacity="0.45" filter="url(#b6)"/>
<polygon points="839.2,599.6 920.5,554.3 1064.2,790.2 954.9,852.8 920.5,788.7 928.3,780.9 914.2,749.6 903.3,755.9 845.5,641.8 851.8,634.0" fill="#2d5a7a" stroke="#0a0f14" stroke-width="0.9" stroke-linejoin="round" />
<polygon points="838.8,595.6 920.0,550.3 1063.8,786.2 954.4,848.8 920.0,784.7 927.8,776.9 913.8,745.6 902.8,751.9 845.0,637.8 851.2,630.0" fill="#62c8ff" stroke="#0a0f14" stroke-width="0.9" stroke-linejoin="round" />
<polyline points="953.8,843.4 1061.2,784.7" fill="none" stroke="#0a0f14" stroke-width="0.7" stroke-linejoin="round" stroke-linecap="round" />
<polyline points="848.8,636.2 905.0,747.8" fill="none" stroke="#0a0f14" stroke-width="0.6" stroke-linejoin="round" stroke-linecap="round" />
<polygon points="867.2,578.5 872.4,587.9 869.1,582.8 865.2,575.8" fill="#3a78a4" stroke="#0a0f14" stroke-width="0.5" stroke-linejoin="round" />
<polygon points="867.2,578.5 853.2,586.4 856.5,580.7 865.2,575.8" fill="#3a78a4" stroke="#0a0f14" stroke-width="0.5" stroke-linejoin="round" />
<polygon points="872.4,587.9 858.3,595.8 860.3,587.6 869.1,582.8" fill="#35709a" stroke="#0a0f14" stroke-width="0.55" stroke-linejoin="round" />
<polygon points="858.3,595.8 853.2,586.4 856.5,580.7 860.3,587.6" fill="#3f82b0" stroke="#0a0f14" stroke-width="0.55" stroke-linejoin="round" />
<polygon points="865.2,575.8 869.1,582.8 860.3,587.6 856.5,580.7" fill="#62c8ff" stroke="#0a0f14" stroke-width="0.6" stroke-linejoin="round" />
<polygon points="897.7,567.2 903.2,576.5 899.8,571.3 895.8,564.5" fill="#3a78a4" stroke="#0a0f14" stroke-width="0.5" stroke-linejoin="round" />
<polygon points="897.7,567.2 883.7,575.0 887.0,569.3 895.8,564.5" fill="#3a78a4" stroke="#0a0f14" stroke-width="0.5" stroke-linejoin="round" />
<polygon points="903.2,576.5 889.0,584.4 891.0,576.2 899.8,571.3" fill="#35709a" stroke="#0a0f14" stroke-width="0.55" stroke-linejoin="round" />
<polygon points="889.0,584.4 883.7,575.0 887.0,569.3 891.0,576.2" fill="#3f82b0" stroke="#0a0f14" stroke-width="0.55" stroke-linejoin="round" />
<polygon points="895.8,564.5 899.8,571.3 891.0,576.2 887.0,569.3" fill="#62c8ff" stroke="#0a0f14" stroke-width="0.6" stroke-linejoin="round" />
<polygon points="921.3,555.5 927.5,565.7 924.4,560.4 919.7,552.6" fill="#3a78a4" stroke="#0a0f14" stroke-width="0.5" stroke-linejoin="round" />
<polygon points="921.3,555.5 909.1,562.3 912.2,556.8 919.7,552.6" fill="#3a78a4" stroke="#0a0f14" stroke-width="0.5" stroke-linejoin="round" />
<polygon points="927.5,565.7 915.2,572.5 916.8,564.6 924.4,560.4" fill="#35709a" stroke="#0a0f14" stroke-width="0.55" stroke-linejoin="round" />
<polygon points="915.2,572.5 909.1,562.3 912.2,556.8 916.8,564.6" fill="#3f82b0" stroke="#0a0f14" stroke-width="0.55" stroke-linejoin="round" />
<polygon points="919.7,552.6 924.4,560.4 916.8,564.6 912.2,556.8" fill="#62c8ff" stroke="#0a0f14" stroke-width="0.6" stroke-linejoin="round" />
<polygon points="885.2,577.7 890.6,587.1 887.2,581.9 883.2,575.0" fill="#3a78a4" stroke="#0a0f14" stroke-width="0.5" stroke-linejoin="round" />
<polygon points="885.2,577.7 871.1,585.5 874.5,579.9 883.2,575.0" fill="#3a78a4" stroke="#0a0f14" stroke-width="0.5" stroke-linejoin="round" />
<polygon points="890.6,587.1 876.4,595.0 878.4,586.9 887.2,581.9" fill="#35709a" stroke="#0a0f14" stroke-width="0.55" stroke-linejoin="round" />
<polygon points="876.4,595.0 871.1,585.5 874.5,579.9 878.4,586.9" fill="#3f82b0" stroke="#0a0f14" stroke-width="0.55" stroke-linejoin="round" />
<polygon points="883.2,575.0 887.2,581.9 878.4,586.9 874.5,579.9" fill="#62c8ff" stroke="#0a0f14" stroke-width="0.6" stroke-linejoin="round" />
<polygon points="872.4,587.9 877.7,597.4 874.4,592.2 870.4,585.2" fill="#3a78a4" stroke="#0a0f14" stroke-width="0.5" stroke-linejoin="round" />
<polygon points="872.4,587.9 858.3,595.8 861.7,590.1 870.4,585.2" fill="#3a78a4" stroke="#0a0f14" stroke-width="0.5" stroke-linejoin="round" />
<polygon points="877.7,597.4 863.5,605.3 865.5,597.2 874.4,592.2" fill="#35709a" stroke="#0a0f14" stroke-width="0.55" stroke-linejoin="round" />
<polygon points="863.5,605.3 858.3,595.8 861.7,590.1 865.5,597.2" fill="#3f82b0" stroke="#0a0f14" stroke-width="0.55" stroke-linejoin="round" />
<polygon points="870.4,585.2 874.4,592.2 865.5,597.2 861.7,590.1" fill="#62c8ff" stroke="#0a0f14" stroke-width="0.6" stroke-linejoin="round" />
<polygon points="857.6,595.5 865.4,609.8 862.0,604.7 855.5,592.8" fill="#3a78a4" stroke="#0a0f14" stroke-width="0.5" stroke-linejoin="round" />
<polygon points="857.6,595.5 843.4,603.4 846.8,597.7 855.5,592.8" fill="#3a78a4" stroke="#0a0f14" stroke-width="0.5" stroke-linejoin="round" />
<polygon points="865.4,609.8 851.1,617.8 853.1,609.7 862.0,604.7" fill="#35709a" stroke="#0a0f14" stroke-width="0.55" stroke-linejoin="round" />
<polygon points="851.1,617.8 843.4,603.4 846.8,597.7 853.1,609.7" fill="#3f82b0" stroke="#0a0f14" stroke-width="0.55" stroke-linejoin="round" />
<polygon points="855.5,592.8 862.0,604.7 853.1,609.7 846.8,597.7" fill="#62c8ff" stroke="#0a0f14" stroke-width="0.6" stroke-linejoin="round" />
<polygon points="903.2,576.5 908.7,585.9 905.3,580.8 901.2,573.8" fill="#3a78a4" stroke="#0a0f14" stroke-width="0.5" stroke-linejoin="round" />
<polygon points="903.2,576.5 889.0,584.4 892.4,578.7 901.2,573.8" fill="#3a78a4" stroke="#0a0f14" stroke-width="0.5" stroke-linejoin="round" />
<polygon points="908.7,585.9 894.5,593.8 896.4,585.7 905.3,580.8" fill="#35709a" stroke="#0a0f14" stroke-width="0.55" stroke-linejoin="round" />
<polygon points="894.5,593.8 889.0,584.4 892.4,578.7 896.4,585.7" fill="#3f82b0" stroke="#0a0f14" stroke-width="0.55" stroke-linejoin="round" />
<polygon points="901.2,573.8 905.3,580.8 896.4,585.7 892.4,578.7" fill="#62c8ff" stroke="#0a0f14" stroke-width="0.6" stroke-linejoin="round" />
<polygon points="890.6,587.1 896.0,596.6 892.6,591.5 888.6,584.4" fill="#3a78a4" stroke="#0a0f14" stroke-width="0.5" stroke-linejoin="round" />
<polygon points="890.6,587.1 876.4,595.0 879.8,589.3 888.6,584.4" fill="#3a78a4" stroke="#0a0f14" stroke-width="0.5" stroke-linejoin="round" />
<polygon points="896.0,596.6 881.8,604.6 883.8,596.4 892.6,591.5" fill="#35709a" stroke="#0a0f14" stroke-width="0.55" stroke-linejoin="round" />
<polygon points="881.8,604.6 876.4,595.0 879.8,589.3 883.8,596.4" fill="#3f82b0" stroke="#0a0f14" stroke-width="0.55" stroke-linejoin="round" />
<polygon points="888.6,584.4 892.6,591.5 883.8,596.4 879.8,589.3" fill="#62c8ff" stroke="#0a0f14" stroke-width="0.6" stroke-linejoin="round" />
<polygon points="877.7,597.4 883.1,607.0 879.7,601.8 875.7,594.7" fill="#3a78a4" stroke="#0a0f14" stroke-width="0.5" stroke-linejoin="round" />
<polygon points="877.7,597.4 863.5,605.3 866.9,599.7 875.7,594.7" fill="#3a78a4" stroke="#0a0f14" stroke-width="0.5" stroke-linejoin="round" />
<polygon points="883.1,607.0 868.8,615.0 870.8,606.8 879.7,601.8" fill="#35709a" stroke="#0a0f14" stroke-width="0.55" stroke-linejoin="round" />
<polygon points="868.8,615.0 863.5,605.3 866.9,599.7 870.8,606.8" fill="#3f82b0" stroke="#0a0f14" stroke-width="0.55" stroke-linejoin="round" />
<polygon points="875.7,594.7 879.7,601.8 870.8,606.8 866.9,599.7" fill="#62c8ff" stroke="#0a0f14" stroke-width="0.6" stroke-linejoin="round" />
<polygon points="908.7,585.9 914.3,595.4 910.8,590.3 906.7,583.2" fill="#3a78a4" stroke="#0a0f14" stroke-width="0.5" stroke-linejoin="round" />
<polygon points="908.7,585.9 894.5,593.8 897.9,588.2 906.7,583.2" fill="#3a78a4" stroke="#0a0f14" stroke-width="0.5" stroke-linejoin="round" />
<polygon points="914.3,595.4 899.9,603.5 901.9,595.3 910.8,590.3" fill="#35709a" stroke="#0a0f14" stroke-width="0.55" stroke-linejoin="round" />
<polygon points="899.9,603.5 894.5,593.8 897.9,588.2 901.9,595.3" fill="#3f82b0" stroke="#0a0f14" stroke-width="0.55" stroke-linejoin="round" />
<polygon points="906.7,583.2 910.8,590.3 901.9,595.3 897.9,588.2" fill="#62c8ff" stroke="#0a0f14" stroke-width="0.6" stroke-linejoin="round" />
<polygon points="865.5,610.1 870.8,619.9 867.4,614.7 863.5,607.5" fill="#3a78a4" stroke="#0a0f14" stroke-width="0.5" stroke-linejoin="round" />
<polygon points="865.5,610.1 851.3,618.1 854.7,612.5 863.5,607.5" fill="#3a78a4" stroke="#0a0f14" stroke-width="0.5" stroke-linejoin="round" />
<polygon points="870.8,619.9 856.5,627.9 858.5,619.7 867.4,614.7" fill="#35709a" stroke="#0a0f14" stroke-width="0.55" stroke-linejoin="round" />
<polygon points="856.5,627.9 851.3,618.1 854.7,612.5 858.5,619.7" fill="#3f82b0" stroke="#0a0f14" stroke-width="0.55" stroke-linejoin="round" />
<polygon points="863.5,607.5 867.4,614.7 858.5,619.7 854.7,612.5" fill="#62c8ff" stroke="#0a0f14" stroke-width="0.6" stroke-linejoin="round" />
<polygon points="896.0,596.6 901.5,606.2 898.1,601.1 894.0,594.0" fill="#3a78a4" stroke="#0a0f14" stroke-width="0.5" stroke-linejoin="round" />
<polygon points="896.0,596.6 881.8,604.6 885.2,598.9 894.0,594.0" fill="#3a78a4" stroke="#0a0f14" stroke-width="0.5" stroke-linejoin="round" />
<polygon points="901.5,606.2 887.2,614.3 889.2,606.1 898.1,601.1" fill="#35709a" stroke="#0a0f14" stroke-width="0.55" stroke-linejoin="round" />
<polygon points="887.2,614.3 881.8,604.6 885.2,598.9 889.2,606.1" fill="#3f82b0" stroke="#0a0f14" stroke-width="0.55" stroke-linejoin="round" />
<polygon points="894.0,594.0 898.1,601.1 889.2,606.1 885.2,598.9" fill="#62c8ff" stroke="#0a0f14" stroke-width="0.6" stroke-linejoin="round" />
<polygon points="883.1,607.0 888.5,616.7 885.1,611.6 881.1,604.4" fill="#3a78a4" stroke="#0a0f14" stroke-width="0.5" stroke-linejoin="round" />
<polygon points="883.1,607.0 868.8,615.0 872.2,609.3 881.1,604.4" fill="#3a78a4" stroke="#0a0f14" stroke-width="0.5" stroke-linejoin="round" />
<polygon points="888.5,616.7 874.1,624.8 876.2,616.6 885.1,611.6" fill="#35709a" stroke="#0a0f14" stroke-width="0.55" stroke-linejoin="round" />
<polygon points="874.1,624.8 868.8,615.0 872.2,609.3 876.2,616.6" fill="#3f82b0" stroke="#0a0f14" stroke-width="0.55" stroke-linejoin="round" />
<polygon points="881.1,604.4 885.1,611.6 876.2,616.6 872.2,609.3" fill="#62c8ff" stroke="#0a0f14" stroke-width="0.6" stroke-linejoin="round" />
<polygon points="914.3,595.4 919.9,605.1 916.5,600.0 912.3,592.8" fill="#3a78a4" stroke="#0a0f14" stroke-width="0.5" stroke-linejoin="round" />
<polygon points="914.3,595.4 899.9,603.5 903.4,597.8 912.3,592.8" fill="#3a78a4" stroke="#0a0f14" stroke-width="0.5" stroke-linejoin="round" />
<polygon points="919.9,605.1 905.5,613.2 907.5,605.0 916.5,600.0" fill="#35709a" stroke="#0a0f14" stroke-width="0.55" stroke-linejoin="round" />
<polygon points="905.5,613.2 899.9,603.5 903.4,597.8 907.5,605.0" fill="#3f82b0" stroke="#0a0f14" stroke-width="0.55" stroke-linejoin="round" />
<polygon points="912.3,592.8 916.5,600.0 907.5,605.0 903.4,597.8" fill="#62c8ff" stroke="#0a0f14" stroke-width="0.6" stroke-linejoin="round" />
<polygon points="870.8,619.9 876.2,629.8 872.8,624.6 868.8,617.3" fill="#3a78a4" stroke="#0a0f14" stroke-width="0.5" stroke-linejoin="round" />
<polygon points="870.8,619.9 856.5,627.9 859.9,622.3 868.8,617.3" fill="#3a78a4" stroke="#0a0f14" stroke-width="0.5" stroke-linejoin="round" />
<polygon points="876.2,629.8 861.7,637.9 863.8,629.6 872.8,624.6" fill="#35709a" stroke="#0a0f14" stroke-width="0.55" stroke-linejoin="round" />
<polygon points="861.7,637.9 856.5,627.9 859.9,622.3 863.8,629.6" fill="#3f82b0" stroke="#0a0f14" stroke-width="0.55" stroke-linejoin="round" />
<polygon points="868.8,617.3 872.8,624.6 863.8,629.6 859.9,622.3" fill="#62c8ff" stroke="#0a0f14" stroke-width="0.6" stroke-linejoin="round" />
<polygon points="901.5,606.2 907.1,616.0 903.7,610.9 899.5,603.6" fill="#3a78a4" stroke="#0a0f14" stroke-width="0.5" stroke-linejoin="round" />
<polygon points="901.5,606.2 887.2,614.3 890.6,608.6 899.5,603.6" fill="#3a78a4" stroke="#0a0f14" stroke-width="0.5" stroke-linejoin="round" />
<polygon points="907.1,616.0 892.7,624.1 894.7,615.9 903.7,610.9" fill="#35709a" stroke="#0a0f14" stroke-width="0.55" stroke-linejoin="round" />
<polygon points="892.7,624.1 887.2,614.3 890.6,608.6 894.7,615.9" fill="#3f82b0" stroke="#0a0f14" stroke-width="0.55" stroke-linejoin="round" />
<polygon points="899.5,603.6 903.7,610.9 894.7,615.9 890.6,608.6" fill="#62c8ff" stroke="#0a0f14" stroke-width="0.6" stroke-linejoin="round" />
<polygon points="939.4,587.8 951.6,608.0 948.5,602.7 937.8,585.0" fill="#3a78a4" stroke="#0a0f14" stroke-width="0.5" stroke-linejoin="round" />
<polygon points="939.4,587.8 927.0,594.8 930.1,589.3 937.8,585.0" fill="#3a78a4" stroke="#0a0f14" stroke-width="0.5" stroke-linejoin="round" />
<polygon points="951.6,608.0 939.0,615.1 940.7,607.0 948.5,602.7" fill="#35709a" stroke="#0a0f14" stroke-width="0.55" stroke-linejoin="round" />
<polygon points="939.0,615.1 927.0,594.8 930.1,589.3 940.7,607.0" fill="#3f82b0" stroke="#0a0f14" stroke-width="0.55" stroke-linejoin="round" />
<polygon points="937.8,585.0 948.5,602.7 940.7,607.0 930.1,589.3" fill="#62c8ff" stroke="#0a0f14" stroke-width="0.6" stroke-linejoin="round" />
<polygon points="854.4,634.0 910.3,740.1 908.5,734.7 854.1,631.3" fill="#3a78a4" stroke="#0a0f14" stroke-width="0.5" stroke-linejoin="round" />
<polygon points="854.4,634.0 846.2,638.6 847.9,634.8 854.1,631.3" fill="#3a78a4" stroke="#0a0f14" stroke-width="0.5" stroke-linejoin="round" />
<polygon points="910.3,740.1 901.6,745.1 901.8,738.5 908.5,734.7" fill="#35709a" stroke="#0a0f14" stroke-width="0.55" stroke-linejoin="round" />
<polygon points="901.6,745.1 846.2,638.6 847.9,634.8 901.8,738.5" fill="#3f82b0" stroke="#0a0f14" stroke-width="0.55" stroke-linejoin="round" />
<polygon points="854.1,631.3 908.5,734.7 901.8,738.5 847.9,634.8" fill="#62c8ff" stroke="#0a0f14" stroke-width="0.6" stroke-linejoin="round" />
<polygon points="888.5,616.7 894.1,626.6 890.6,621.5 886.5,614.1" fill="#3a78a4" stroke="#0a0f14" stroke-width="0.5" stroke-linejoin="round" />
<polygon points="888.5,616.7 874.1,624.8 877.6,619.2 886.5,614.1" fill="#3a78a4" stroke="#0a0f14" stroke-width="0.5" stroke-linejoin="round" />
<polygon points="894.1,626.6 879.6,634.7 881.6,626.5 890.6,621.5" fill="#35709a" stroke="#0a0f14" stroke-width="0.55" stroke-linejoin="round" />
<polygon points="879.6,634.7 874.1,624.8 877.6,619.2 881.6,626.5" fill="#3f82b0" stroke="#0a0f14" stroke-width="0.55" stroke-linejoin="round" />
<polygon points="886.5,614.1 890.6,621.5 881.6,626.5 877.6,619.2" fill="#62c8ff" stroke="#0a0f14" stroke-width="0.6" stroke-linejoin="round" />
<polygon points="919.9,605.1 925.7,614.9 922.2,609.8 917.9,602.5" fill="#3a78a4" stroke="#0a0f14" stroke-width="0.5" stroke-linejoin="round" />
<polygon points="919.9,605.1 905.5,613.2 909.0,607.5 917.9,602.5" fill="#3a78a4" stroke="#0a0f14" stroke-width="0.5" stroke-linejoin="round" />
<polygon points="925.7,614.9 911.2,623.1 913.2,614.9 922.2,609.8" fill="#35709a" stroke="#0a0f14" stroke-width="0.55" stroke-linejoin="round" />
<polygon points="911.2,623.1 905.5,613.2 909.0,607.5 913.2,614.9" fill="#3f82b0" stroke="#0a0f14" stroke-width="0.55" stroke-linejoin="round" />
<polygon points="917.9,602.5 922.2,609.8 913.2,614.9 909.0,607.5" fill="#62c8ff" stroke="#0a0f14" stroke-width="0.6" stroke-linejoin="round" />
<polygon points="876.2,629.8 881.7,639.8 878.2,634.6 874.2,627.2" fill="#3a78a4" stroke="#0a0f14" stroke-width="0.5" stroke-linejoin="round" />
<polygon points="876.2,629.8 861.7,637.9 865.2,632.2 874.2,627.2" fill="#3a78a4" stroke="#0a0f14" stroke-width="0.5" stroke-linejoin="round" />
<polygon points="881.7,639.8 867.1,647.9 869.2,639.7 878.2,634.6" fill="#35709a" stroke="#0a0f14" stroke-width="0.55" stroke-linejoin="round" />
<polygon points="867.1,647.9 861.7,637.9 865.2,632.2 869.2,639.7" fill="#3f82b0" stroke="#0a0f14" stroke-width="0.55" stroke-linejoin="round" />
<polygon points="874.2,627.2 878.2,634.6 869.2,639.7 865.2,632.2" fill="#62c8ff" stroke="#0a0f14" stroke-width="0.6" stroke-linejoin="round" />
<polygon points="907.1,616.0 912.8,626.0 909.3,620.8 905.1,613.5" fill="#3a78a4" stroke="#0a0f14" stroke-width="0.5" stroke-linejoin="round" />
<polygon points="907.1,616.0 892.7,624.1 896.1,618.5 905.1,613.5" fill="#3a78a4" stroke="#0a0f14" stroke-width="0.5" stroke-linejoin="round" />
<polygon points="912.8,626.0 898.2,634.1 900.3,625.9 909.3,620.8" fill="#35709a" stroke="#0a0f14" stroke-width="0.55" stroke-linejoin="round" />
<polygon points="898.2,634.1 892.7,624.1 896.1,618.5 900.3,625.9" fill="#3f82b0" stroke="#0a0f14" stroke-width="0.55" stroke-linejoin="round" />
<polygon points="905.1,613.5 909.3,620.8 900.3,625.9 896.1,618.5" fill="#62c8ff" stroke="#0a0f14" stroke-width="0.6" stroke-linejoin="round" />
<polygon points="894.1,626.6 899.7,636.6 896.1,631.5 892.0,624.1" fill="#3a78a4" stroke="#0a0f14" stroke-width="0.5" stroke-linejoin="round" />
<polygon points="894.1,626.6 879.6,634.7 883.0,629.1 892.0,624.1" fill="#3a78a4" stroke="#0a0f14" stroke-width="0.5" stroke-linejoin="round" />
<polygon points="899.7,636.6 885.1,644.8 887.1,636.6 896.1,631.5" fill="#35709a" stroke="#0a0f14" stroke-width="0.55" stroke-linejoin="round" />
<polygon points="885.1,644.8 879.6,634.7 883.0,629.1 887.1,636.6" fill="#3f82b0" stroke="#0a0f14" stroke-width="0.55" stroke-linejoin="round" />
<polygon points="892.0,624.1 896.1,631.5 887.1,636.6 883.0,629.1" fill="#62c8ff" stroke="#0a0f14" stroke-width="0.6" stroke-linejoin="round" />
<polygon points="925.7,614.9 931.5,624.9 928.0,619.8 923.7,612.4" fill="#3a78a4" stroke="#0a0f14" stroke-width="0.5" stroke-linejoin="round" />
<polygon points="925.7,614.9 911.2,623.1 914.7,617.4 923.7,612.4" fill="#3a78a4" stroke="#0a0f14" stroke-width="0.5" stroke-linejoin="round" />
<polygon points="931.5,624.9 916.9,633.1 918.9,624.8 928.0,619.8" fill="#35709a" stroke="#0a0f14" stroke-width="0.55" stroke-linejoin="round" />
<polygon points="916.9,633.1 911.2,623.1 914.7,617.4 918.9,624.8" fill="#3f82b0" stroke="#0a0f14" stroke-width="0.55" stroke-linejoin="round" />
<polygon points="923.7,612.4 928.0,619.8 918.9,624.8 914.7,617.4" fill="#62c8ff" stroke="#0a0f14" stroke-width="0.6" stroke-linejoin="round" />
<polygon points="881.7,639.8 887.2,649.9 883.7,644.8 879.6,637.2" fill="#3a78a4" stroke="#0a0f14" stroke-width="0.5" stroke-linejoin="round" />
<polygon points="881.7,639.8 867.1,647.9 870.6,642.3 879.6,637.2" fill="#3a78a4" stroke="#0a0f14" stroke-width="0.5" stroke-linejoin="round" />
<polygon points="887.2,649.9 872.5,658.2 874.6,649.9 883.7,644.8" fill="#35709a" stroke="#0a0f14" stroke-width="0.55" stroke-linejoin="round" />
<polygon points="872.5,658.2 867.1,647.9 870.6,642.3 874.6,649.9" fill="#3f82b0" stroke="#0a0f14" stroke-width="0.55" stroke-linejoin="round" />
<polygon points="879.6,637.2 883.7,644.8 874.6,649.9 870.6,642.3" fill="#62c8ff" stroke="#0a0f14" stroke-width="0.6" stroke-linejoin="round" />
<polygon points="912.8,626.0 918.6,636.0 915.0,630.9 910.8,623.4" fill="#3a78a4" stroke="#0a0f14" stroke-width="0.5" stroke-linejoin="round" />
<polygon points="912.8,626.0 898.2,634.1 901.7,628.5 910.8,623.4" fill="#3a78a4" stroke="#0a0f14" stroke-width="0.5" stroke-linejoin="round" />
<polygon points="918.6,636.0 903.9,644.3 905.9,636.0 915.0,630.9" fill="#35709a" stroke="#0a0f14" stroke-width="0.55" stroke-linejoin="round" />
<polygon points="903.9,644.3 898.2,634.1 901.7,628.5 905.9,636.0" fill="#3f82b0" stroke="#0a0f14" stroke-width="0.55" stroke-linejoin="round" />
<polygon points="910.8,623.4 915.0,630.9 905.9,636.0 901.7,628.5" fill="#62c8ff" stroke="#0a0f14" stroke-width="0.6" stroke-linejoin="round" />
<polygon points="952.0,608.5 964.6,629.4 961.4,624.0 950.3,605.8" fill="#3a78a4" stroke="#0a0f14" stroke-width="0.5" stroke-linejoin="round" />
<polygon points="952.0,608.5 939.4,615.6 942.5,610.2 950.3,605.8" fill="#3a78a4" stroke="#0a0f14" stroke-width="0.5" stroke-linejoin="round" />
<polygon points="964.6,629.4 951.8,636.5 953.4,628.5 961.4,624.0" fill="#35709a" stroke="#0a0f14" stroke-width="0.55" stroke-linejoin="round" />
<polygon points="951.8,636.5 939.4,615.6 942.5,610.2 953.4,628.5" fill="#3f82b0" stroke="#0a0f14" stroke-width="0.55" stroke-linejoin="round" />
<polygon points="950.3,605.8 961.4,624.0 953.4,628.5 942.5,610.2" fill="#62c8ff" stroke="#0a0f14" stroke-width="0.6" stroke-linejoin="round" />
<polygon points="899.7,636.6 905.3,646.8 901.8,641.6 897.6,634.1" fill="#3a78a4" stroke="#0a0f14" stroke-width="0.5" stroke-linejoin="round" />
<polygon points="899.7,636.6 885.1,644.8 888.5,639.2 897.6,634.1" fill="#3a78a4" stroke="#0a0f14" stroke-width="0.5" stroke-linejoin="round" />
<polygon points="905.3,646.8 890.6,655.1 892.7,646.8 901.8,641.6" fill="#35709a" stroke="#0a0f14" stroke-width="0.55" stroke-linejoin="round" />
<polygon points="890.6,655.1 885.1,644.8 888.5,639.2 892.7,646.8" fill="#3f82b0" stroke="#0a0f14" stroke-width="0.55" stroke-linejoin="round" />
<polygon points="897.6,634.1 901.8,641.6 892.7,646.8 888.5,639.2" fill="#62c8ff" stroke="#0a0f14" stroke-width="0.6" stroke-linejoin="round" />
<polygon points="931.5,624.9 937.4,635.0 933.9,629.9 929.5,622.4" fill="#3a78a4" stroke="#0a0f14" stroke-width="0.5" stroke-linejoin="round" />
<polygon points="931.5,624.9 916.9,633.1 920.4,627.5 929.5,622.4" fill="#3a78a4" stroke="#0a0f14" stroke-width="0.5" stroke-linejoin="round" />
<polygon points="937.4,635.0 922.7,643.3 924.7,635.0 933.9,629.9" fill="#35709a" stroke="#0a0f14" stroke-width="0.55" stroke-linejoin="round" />
<polygon points="922.7,643.3 916.9,633.1 920.4,627.5 924.7,635.0" fill="#3f82b0" stroke="#0a0f14" stroke-width="0.55" stroke-linejoin="round" />
<polygon points="929.5,622.4 933.9,629.9 924.7,635.0 920.4,627.5" fill="#62c8ff" stroke="#0a0f14" stroke-width="0.6" stroke-linejoin="round" />
<polygon points="887.2,649.9 892.8,660.2 889.3,655.1 885.1,647.4" fill="#3a78a4" stroke="#0a0f14" stroke-width="0.5" stroke-linejoin="round" />
<polygon points="887.2,649.9 872.5,658.2 876.0,652.5 885.1,647.4" fill="#3a78a4" stroke="#0a0f14" stroke-width="0.5" stroke-linejoin="round" />
<polygon points="892.8,660.2 878.0,668.5 880.1,660.2 889.3,655.1" fill="#35709a" stroke="#0a0f14" stroke-width="0.55" stroke-linejoin="round" />
<polygon points="878.0,668.5 872.5,658.2 876.0,652.5 880.1,660.2" fill="#3f82b0" stroke="#0a0f14" stroke-width="0.55" stroke-linejoin="round" />
<polygon points="885.1,647.4 889.3,655.1 880.1,660.2 876.0,652.5" fill="#62c8ff" stroke="#0a0f14" stroke-width="0.6" stroke-linejoin="round" />
<polygon points="918.6,636.0 924.4,646.2 920.8,641.1 916.5,633.5" fill="#3a78a4" stroke="#0a0f14" stroke-width="0.5" stroke-linejoin="round" />
<polygon points="918.6,636.0 903.9,644.3 907.4,638.6 916.5,633.5" fill="#3a78a4" stroke="#0a0f14" stroke-width="0.5" stroke-linejoin="round" />
<polygon points="924.4,646.2 909.6,654.5 911.7,646.2 920.8,641.1" fill="#35709a" stroke="#0a0f14" stroke-width="0.55" stroke-linejoin="round" />
<polygon points="909.6,654.5 903.9,644.3 907.4,638.6 911.7,646.2" fill="#3f82b0" stroke="#0a0f14" stroke-width="0.55" stroke-linejoin="round" />
<polygon points="916.5,633.5 920.8,641.1 911.7,646.2 907.4,638.6" fill="#62c8ff" stroke="#0a0f14" stroke-width="0.6" stroke-linejoin="round" />
<polygon points="905.3,646.8 911.1,657.1 907.5,652.0 903.3,644.3" fill="#3a78a4" stroke="#0a0f14" stroke-width="0.5" stroke-linejoin="round" />
<polygon points="905.3,646.8 890.6,655.1 894.2,649.4 903.3,644.3" fill="#3a78a4" stroke="#0a0f14" stroke-width="0.5" stroke-linejoin="round" />
<polygon points="911.1,657.1 896.3,665.5 898.4,657.1 907.5,652.0" fill="#35709a" stroke="#0a0f14" stroke-width="0.55" stroke-linejoin="round" />
<polygon points="896.3,665.5 890.6,655.1 894.2,649.4 898.4,657.1" fill="#3f82b0" stroke="#0a0f14" stroke-width="0.55" stroke-linejoin="round" />
<polygon points="903.3,644.3 907.5,652.0 898.4,657.1 894.2,649.4" fill="#62c8ff" stroke="#0a0f14" stroke-width="0.6" stroke-linejoin="round" />
<polygon points="937.4,635.0 943.4,645.3 939.8,640.1 935.4,632.5" fill="#3a78a4" stroke="#0a0f14" stroke-width="0.5" stroke-linejoin="round" />
<polygon points="937.4,635.0 922.7,643.3 926.3,637.6 935.4,632.5" fill="#3a78a4" stroke="#0a0f14" stroke-width="0.5" stroke-linejoin="round" />
<polygon points="943.4,645.3 928.6,653.6 930.7,645.3 939.8,640.1" fill="#35709a" stroke="#0a0f14" stroke-width="0.55" stroke-linejoin="round" />
<polygon points="928.6,653.6 922.7,643.3 926.3,637.6 930.7,645.3" fill="#3f82b0" stroke="#0a0f14" stroke-width="0.55" stroke-linejoin="round" />
<polygon points="935.4,632.5 939.8,640.1 930.7,645.3 926.3,637.6" fill="#62c8ff" stroke="#0a0f14" stroke-width="0.6" stroke-linejoin="round" />
<polygon points="892.8,660.2 898.5,670.7 894.9,665.5 890.7,657.8" fill="#3a78a4" stroke="#0a0f14" stroke-width="0.5" stroke-linejoin="round" />
<polygon points="892.8,660.2 878.0,668.5 881.6,662.9 890.7,657.8" fill="#3a78a4" stroke="#0a0f14" stroke-width="0.5" stroke-linejoin="round" />
<polygon points="898.5,670.7 883.6,679.1 885.7,670.7 894.9,665.5" fill="#35709a" stroke="#0a0f14" stroke-width="0.55" stroke-linejoin="round" />
<polygon points="883.6,679.1 878.0,668.5 881.6,662.9 885.7,670.7" fill="#3f82b0" stroke="#0a0f14" stroke-width="0.55" stroke-linejoin="round" />
<polygon points="890.7,657.8 894.9,665.5 885.7,670.7 881.6,662.9" fill="#62c8ff" stroke="#0a0f14" stroke-width="0.6" stroke-linejoin="round" />
<polygon points="924.4,646.2 930.3,656.6 926.7,651.4 922.4,643.8" fill="#3a78a4" stroke="#0a0f14" stroke-width="0.5" stroke-linejoin="round" />
<polygon points="924.4,646.2 909.6,654.5 913.2,648.9 922.4,643.8" fill="#3a78a4" stroke="#0a0f14" stroke-width="0.5" stroke-linejoin="round" />
<polygon points="930.3,656.6 915.5,665.0 917.5,656.6 926.7,651.4" fill="#35709a" stroke="#0a0f14" stroke-width="0.55" stroke-linejoin="round" />
<polygon points="915.5,665.0 909.6,654.5 913.2,648.9 917.5,656.6" fill="#3f82b0" stroke="#0a0f14" stroke-width="0.55" stroke-linejoin="round" />
<polygon points="922.4,643.8 926.7,651.4 917.5,656.6 913.2,648.9" fill="#62c8ff" stroke="#0a0f14" stroke-width="0.6" stroke-linejoin="round" />
<polygon points="964.9,629.9 978.0,651.4 974.7,646.0 963.3,627.2" fill="#3a78a4" stroke="#0a0f14" stroke-width="0.5" stroke-linejoin="round" />
<polygon points="964.9,629.9 952.1,637.1 955.4,631.7 963.3,627.2" fill="#3a78a4" stroke="#0a0f14" stroke-width="0.5" stroke-linejoin="round" />
<polygon points="978.0,651.4 965.0,658.7 966.6,650.5 974.7,646.0" fill="#35709a" stroke="#0a0f14" stroke-width="0.55" stroke-linejoin="round" />
<polygon points="965.0,658.7 952.1,637.1 955.4,631.7 966.6,650.5" fill="#3f82b0" stroke="#0a0f14" stroke-width="0.55" stroke-linejoin="round" />
<polygon points="963.3,627.2 974.7,646.0 966.6,650.5 955.4,631.7" fill="#62c8ff" stroke="#0a0f14" stroke-width="0.6" stroke-linejoin="round" />
<polygon points="911.1,657.1 916.9,667.6 913.3,662.4 909.0,654.7" fill="#3a78a4" stroke="#0a0f14" stroke-width="0.5" stroke-linejoin="round" />
<polygon points="911.1,657.1 896.3,665.5 899.8,659.8 909.0,654.7" fill="#3a78a4" stroke="#0a0f14" stroke-width="0.5" stroke-linejoin="round" />
<polygon points="916.9,667.6 902.0,676.0 904.1,667.6 913.3,662.4" fill="#35709a" stroke="#0a0f14" stroke-width="0.55" stroke-linejoin="round" />
<polygon points="902.0,676.0 896.3,665.5 899.8,659.8 904.1,667.6" fill="#3f82b0" stroke="#0a0f14" stroke-width="0.55" stroke-linejoin="round" />
<polygon points="909.0,654.7 913.3,662.4 904.1,667.6 899.8,659.8" fill="#62c8ff" stroke="#0a0f14" stroke-width="0.6" stroke-linejoin="round" />
<polygon points="943.4,645.3 949.5,655.7 945.9,650.5 941.4,642.8" fill="#3a78a4" stroke="#0a0f14" stroke-width="0.5" stroke-linejoin="round" />
<polygon points="943.4,645.3 928.6,653.6 932.2,648.0 941.4,642.8" fill="#3a78a4" stroke="#0a0f14" stroke-width="0.5" stroke-linejoin="round" />
<polygon points="949.5,655.7 934.6,664.1 936.6,655.7 945.9,650.5" fill="#35709a" stroke="#0a0f14" stroke-width="0.55" stroke-linejoin="round" />
<polygon points="934.6,664.1 928.6,653.6 932.2,648.0 936.6,655.7" fill="#3f82b0" stroke="#0a0f14" stroke-width="0.55" stroke-linejoin="round" />
<polygon points="941.4,642.8 945.9,650.5 936.6,655.7 932.2,648.0" fill="#62c8ff" stroke="#0a0f14" stroke-width="0.6" stroke-linejoin="round" />
<polygon points="898.5,670.7 904.3,681.3 900.7,676.1 896.4,668.2" fill="#3a78a4" stroke="#0a0f14" stroke-width="0.5" stroke-linejoin="round" />
<polygon points="898.5,670.7 883.6,679.1 887.2,673.4 896.4,668.2" fill="#3a78a4" stroke="#0a0f14" stroke-width="0.5" stroke-linejoin="round" />
<polygon points="904.3,681.3 889.3,689.7 891.4,681.3 900.7,676.1" fill="#35709a" stroke="#0a0f14" stroke-width="0.55" stroke-linejoin="round" />
<polygon points="889.3,689.7 883.6,679.1 887.2,673.4 891.4,681.3" fill="#3f82b0" stroke="#0a0f14" stroke-width="0.55" stroke-linejoin="round" />
<polygon points="896.4,668.2 900.7,676.1 891.4,681.3 887.2,673.4" fill="#62c8ff" stroke="#0a0f14" stroke-width="0.6" stroke-linejoin="round" />
<polygon points="930.3,656.6 936.3,667.1 932.7,661.9 928.3,654.1" fill="#3a78a4" stroke="#0a0f14" stroke-width="0.5" stroke-linejoin="round" />
<polygon points="930.3,656.6 915.5,665.0 919.0,659.3 928.3,654.1" fill="#3a78a4" stroke="#0a0f14" stroke-width="0.5" stroke-linejoin="round" />
<polygon points="936.3,667.1 921.4,675.5 923.4,667.2 932.7,661.9" fill="#35709a" stroke="#0a0f14" stroke-width="0.55" stroke-linejoin="round" />
<polygon points="921.4,675.5 915.5,665.0 919.0,659.3 923.4,667.2" fill="#3f82b0" stroke="#0a0f14" stroke-width="0.55" stroke-linejoin="round" />
<polygon points="928.3,654.1 932.7,661.9 923.4,667.2 919.0,659.3" fill="#62c8ff" stroke="#0a0f14" stroke-width="0.6" stroke-linejoin="round" />
<polygon points="916.9,667.6 922.8,678.2 919.2,673.0 914.9,665.2" fill="#3a78a4" stroke="#0a0f14" stroke-width="0.5" stroke-linejoin="round" />
<polygon points="916.9,667.6 902.0,676.0 905.6,670.4 914.9,665.2" fill="#3a78a4" stroke="#0a0f14" stroke-width="0.5" stroke-linejoin="round" />
<polygon points="922.8,678.2 907.8,686.7 909.9,678.3 919.2,673.0" fill="#35709a" stroke="#0a0f14" stroke-width="0.55" stroke-linejoin="round" />
<polygon points="907.8,686.7 902.0,676.0 905.6,670.4 909.9,678.3" fill="#3f82b0" stroke="#0a0f14" stroke-width="0.55" stroke-linejoin="round" />
<polygon points="914.9,665.2 919.2,673.0 909.9,678.3 905.6,670.4" fill="#62c8ff" stroke="#0a0f14" stroke-width="0.6" stroke-linejoin="round" />
<polygon points="949.5,655.7 955.7,666.2 952.0,661.1 947.5,653.2" fill="#3a78a4" stroke="#0a0f14" stroke-width="0.5" stroke-linejoin="round" />
<polygon points="949.5,655.7 934.6,664.1 938.2,658.4 947.5,653.2" fill="#3a78a4" stroke="#0a0f14" stroke-width="0.5" stroke-linejoin="round" />
<polygon points="955.7,666.2 940.7,674.7 942.7,666.3 952.0,661.1" fill="#35709a" stroke="#0a0f14" stroke-width="0.55" stroke-linejoin="round" />
<polygon points="940.7,674.7 934.6,664.1 938.2,658.4 942.7,666.3" fill="#3f82b0" stroke="#0a0f14" stroke-width="0.55" stroke-linejoin="round" />
<polygon points="947.5,653.2 952.0,661.1 942.7,666.3 938.2,658.4" fill="#62c8ff" stroke="#0a0f14" stroke-width="0.6" stroke-linejoin="round" />
<polygon points="904.3,681.3 910.1,692.1 906.5,686.9 902.2,678.9" fill="#3a78a4" stroke="#0a0f14" stroke-width="0.5" stroke-linejoin="round" />
<polygon points="904.3,681.3 889.3,689.7 892.9,684.1 902.2,678.9" fill="#3a78a4" stroke="#0a0f14" stroke-width="0.5" stroke-linejoin="round" />
<polygon points="910.1,692.1 895.0,700.6 897.1,692.1 906.5,686.9" fill="#35709a" stroke="#0a0f14" stroke-width="0.55" stroke-linejoin="round" />
<polygon points="895.0,700.6 889.3,689.7 892.9,684.1 897.1,692.1" fill="#3f82b0" stroke="#0a0f14" stroke-width="0.55" stroke-linejoin="round" />
<polygon points="902.2,678.9 906.5,686.9 897.1,692.1 892.9,684.1" fill="#62c8ff" stroke="#0a0f14" stroke-width="0.6" stroke-linejoin="round" />
<polygon points="936.3,667.1 942.4,677.8 938.8,672.6 934.3,664.7" fill="#3a78a4" stroke="#0a0f14" stroke-width="0.5" stroke-linejoin="round" />
<polygon points="936.3,667.1 921.4,675.5 925.0,669.9 934.3,664.7" fill="#3a78a4" stroke="#0a0f14" stroke-width="0.5" stroke-linejoin="round" />
<polygon points="942.4,677.8 927.3,686.3 929.4,677.9 938.8,672.6" fill="#35709a" stroke="#0a0f14" stroke-width="0.55" stroke-linejoin="round" />
<polygon points="927.3,686.3 921.4,675.5 925.0,669.9 929.4,677.9" fill="#3f82b0" stroke="#0a0f14" stroke-width="0.55" stroke-linejoin="round" />
<polygon points="934.3,664.7 938.8,672.6 929.4,677.9 925.0,669.9" fill="#62c8ff" stroke="#0a0f14" stroke-width="0.6" stroke-linejoin="round" />
<polygon points="922.8,678.2 928.9,689.0 925.2,683.8 920.8,675.8" fill="#3a78a4" stroke="#0a0f14" stroke-width="0.5" stroke-linejoin="round" />
<polygon points="922.8,678.2 907.8,686.7 911.5,681.1 920.8,675.8" fill="#3a78a4" stroke="#0a0f14" stroke-width="0.5" stroke-linejoin="round" />
<polygon points="928.9,689.0 913.7,697.5 915.8,689.1 925.2,683.8" fill="#35709a" stroke="#0a0f14" stroke-width="0.55" stroke-linejoin="round" />
<polygon points="913.7,697.5 907.8,686.7 911.5,681.1 915.8,689.1" fill="#3f82b0" stroke="#0a0f14" stroke-width="0.55" stroke-linejoin="round" />
<polygon points="920.8,675.8 925.2,683.8 915.8,689.1 911.5,681.1" fill="#62c8ff" stroke="#0a0f14" stroke-width="0.6" stroke-linejoin="round" />
<polygon points="978.3,652.0 991.7,674.1 988.4,668.7 976.7,649.3" fill="#3a78a4" stroke="#0a0f14" stroke-width="0.5" stroke-linejoin="round" />
<polygon points="978.3,652.0 965.3,659.3 968.6,653.9 976.7,649.3" fill="#3a78a4" stroke="#0a0f14" stroke-width="0.5" stroke-linejoin="round" />
<polygon points="991.7,674.1 978.6,681.5 980.2,673.3 988.4,668.7" fill="#35709a" stroke="#0a0f14" stroke-width="0.55" stroke-linejoin="round" />
<polygon points="978.6,681.5 965.3,659.3 968.6,653.9 980.2,673.3" fill="#3f82b0" stroke="#0a0f14" stroke-width="0.55" stroke-linejoin="round" />
<polygon points="976.7,649.3 988.4,668.7 980.2,673.3 968.6,653.9" fill="#62c8ff" stroke="#0a0f14" stroke-width="0.6" stroke-linejoin="round" />
<polygon points="955.7,666.2 962.0,676.9 958.3,671.8 953.6,663.8" fill="#3a78a4" stroke="#0a0f14" stroke-width="0.5" stroke-linejoin="round" />
<polygon points="955.7,666.2 940.7,674.7 944.3,669.1 953.6,663.8" fill="#3a78a4" stroke="#0a0f14" stroke-width="0.5" stroke-linejoin="round" />
<polygon points="962.0,676.9 946.8,685.5 948.9,677.0 958.3,671.8" fill="#35709a" stroke="#0a0f14" stroke-width="0.55" stroke-linejoin="round" />
<polygon points="946.8,685.5 940.7,674.7 944.3,669.1 948.9,677.0" fill="#3f82b0" stroke="#0a0f14" stroke-width="0.55" stroke-linejoin="round" />
<polygon points="953.6,663.8 958.3,671.8 948.9,677.0 944.3,669.1" fill="#62c8ff" stroke="#0a0f14" stroke-width="0.6" stroke-linejoin="round" />
<polygon points="910.1,692.1 916.1,703.0 912.4,697.8 908.0,689.7" fill="#3a78a4" stroke="#0a0f14" stroke-width="0.5" stroke-linejoin="round" />
<polygon points="910.1,692.1 895.0,700.6 898.7,695.0 908.0,689.7" fill="#3a78a4" stroke="#0a0f14" stroke-width="0.5" stroke-linejoin="round" />
<polygon points="916.1,703.0 900.9,711.6 903.0,703.1 912.4,697.8" fill="#35709a" stroke="#0a0f14" stroke-width="0.55" stroke-linejoin="round" />
<polygon points="900.9,711.6 895.0,700.6 898.7,695.0 903.0,703.1" fill="#3f82b0" stroke="#0a0f14" stroke-width="0.55" stroke-linejoin="round" />
<polygon points="908.0,689.7 912.4,697.8 903.0,703.1 898.7,695.0" fill="#62c8ff" stroke="#0a0f14" stroke-width="0.6" stroke-linejoin="round" />
<polygon points="942.4,677.8 948.6,688.6 944.9,683.4 940.4,675.4" fill="#3a78a4" stroke="#0a0f14" stroke-width="0.5" stroke-linejoin="round" />
<polygon points="942.4,677.8 927.3,686.3 931.0,680.7 940.4,675.4" fill="#3a78a4" stroke="#0a0f14" stroke-width="0.5" stroke-linejoin="round" />
<polygon points="948.6,688.6 933.4,697.2 935.5,688.7 944.9,683.4" fill="#35709a" stroke="#0a0f14" stroke-width="0.55" stroke-linejoin="round" />
<polygon points="933.4,697.2 927.3,686.3 931.0,680.7 935.5,688.7" fill="#3f82b0" stroke="#0a0f14" stroke-width="0.55" stroke-linejoin="round" />
<polygon points="940.4,675.4 944.9,683.4 935.5,688.7 931.0,680.7" fill="#62c8ff" stroke="#0a0f14" stroke-width="0.6" stroke-linejoin="round" />
<polygon points="928.9,689.0 935.0,699.9 931.3,694.7 926.8,686.6" fill="#3a78a4" stroke="#0a0f14" stroke-width="0.5" stroke-linejoin="round" />
<polygon points="928.9,689.0 913.7,697.5 917.4,691.9 926.8,686.6" fill="#3a78a4" stroke="#0a0f14" stroke-width="0.5" stroke-linejoin="round" />
<polygon points="935.0,699.9 919.7,708.5 921.8,700.0 931.3,694.7" fill="#35709a" stroke="#0a0f14" stroke-width="0.55" stroke-linejoin="round" />
<polygon points="919.7,708.5 913.7,697.5 917.4,691.9 921.8,700.0" fill="#3f82b0" stroke="#0a0f14" stroke-width="0.55" stroke-linejoin="round" />
<polygon points="926.8,686.6 931.3,694.7 921.8,700.0 917.4,691.9" fill="#62c8ff" stroke="#0a0f14" stroke-width="0.6" stroke-linejoin="round" />
<polygon points="962.0,676.9 968.3,687.8 964.6,682.6 959.9,674.6" fill="#3a78a4" stroke="#0a0f14" stroke-width="0.5" stroke-linejoin="round" />
<polygon points="962.0,676.9 946.8,685.5 950.5,679.9 959.9,674.6" fill="#3a78a4" stroke="#0a0f14" stroke-width="0.5" stroke-linejoin="round" />
<polygon points="968.3,687.8 953.1,696.4 955.2,687.9 964.6,682.6" fill="#35709a" stroke="#0a0f14" stroke-width="0.55" stroke-linejoin="round" />
<polygon points="953.1,696.4 946.8,685.5 950.5,679.9 955.2,687.9" fill="#3f82b0" stroke="#0a0f14" stroke-width="0.55" stroke-linejoin="round" />
<polygon points="959.9,674.6 964.6,682.6 955.2,687.9 950.5,679.9" fill="#62c8ff" stroke="#0a0f14" stroke-width="0.6" stroke-linejoin="round" />
<polygon points="916.1,703.0 922.1,714.1 918.4,708.9 913.9,700.6" fill="#3a78a4" stroke="#0a0f14" stroke-width="0.5" stroke-linejoin="round" />
<polygon points="916.1,703.0 900.9,711.6 904.5,706.0 913.9,700.6" fill="#3a78a4" stroke="#0a0f14" stroke-width="0.5" stroke-linejoin="round" />
<polygon points="922.1,714.1 906.8,722.7 908.9,714.2 918.4,708.9" fill="#35709a" stroke="#0a0f14" stroke-width="0.55" stroke-linejoin="round" />
<polygon points="906.8,722.7 900.9,711.6 904.5,706.0 908.9,714.2" fill="#3f82b0" stroke="#0a0f14" stroke-width="0.55" stroke-linejoin="round" />
<polygon points="913.9,700.6 918.4,708.9 908.9,714.2 904.5,706.0" fill="#62c8ff" stroke="#0a0f14" stroke-width="0.6" stroke-linejoin="round" />
<polygon points="948.6,688.6 954.9,699.6 951.2,694.4 946.5,686.2" fill="#3a78a4" stroke="#0a0f14" stroke-width="0.5" stroke-linejoin="round" />
<polygon points="948.6,688.6 933.4,697.2 937.1,691.6 946.5,686.2" fill="#3a78a4" stroke="#0a0f14" stroke-width="0.5" stroke-linejoin="round" />
<polygon points="954.9,699.6 939.6,708.2 941.7,699.7 951.2,694.4" fill="#35709a" stroke="#0a0f14" stroke-width="0.55" stroke-linejoin="round" />
<polygon points="939.6,708.2 933.4,697.2 937.1,691.6 941.7,699.7" fill="#3f82b0" stroke="#0a0f14" stroke-width="0.55" stroke-linejoin="round" />
<polygon points="946.5,686.2 951.2,694.4 941.7,699.7 937.1,691.6" fill="#62c8ff" stroke="#0a0f14" stroke-width="0.6" stroke-linejoin="round" />
<polygon points="935.0,699.9 941.1,711.0 937.4,705.8 932.9,697.6" fill="#3a78a4" stroke="#0a0f14" stroke-width="0.5" stroke-linejoin="round" />
<polygon points="935.0,699.9 919.7,708.5 923.4,702.9 932.9,697.6" fill="#3a78a4" stroke="#0a0f14" stroke-width="0.5" stroke-linejoin="round" />
<polygon points="941.1,711.0 925.8,719.7 927.9,711.2 937.4,705.8" fill="#35709a" stroke="#0a0f14" stroke-width="0.55" stroke-linejoin="round" />
<polygon points="925.8,719.7 919.7,708.5 923.4,702.9 927.9,711.2" fill="#3f82b0" stroke="#0a0f14" stroke-width="0.55" stroke-linejoin="round" />
<polygon points="932.9,697.6 937.4,705.8 927.9,711.2 923.4,702.9" fill="#62c8ff" stroke="#0a0f14" stroke-width="0.6" stroke-linejoin="round" />
<polygon points="992.1,674.7 1006.0,697.5 1002.5,692.1 990.5,672.1" fill="#3a78a4" stroke="#0a0f14" stroke-width="0.5" stroke-linejoin="round" />
<polygon points="992.1,674.7 978.9,682.1 982.3,676.7 990.5,672.1" fill="#3a78a4" stroke="#0a0f14" stroke-width="0.5" stroke-linejoin="round" />
<polygon points="1006.0,697.5 992.6,705.1 994.3,696.8 1002.5,692.1" fill="#35709a" stroke="#0a0f14" stroke-width="0.55" stroke-linejoin="round" />
<polygon points="992.6,705.1 978.9,682.1 982.3,676.7 994.3,696.8" fill="#3f82b0" stroke="#0a0f14" stroke-width="0.55" stroke-linejoin="round" />
<polygon points="990.5,672.1 1002.5,692.1 994.3,696.8 982.3,676.7" fill="#62c8ff" stroke="#0a0f14" stroke-width="0.6" stroke-linejoin="round" />
<polygon points="968.3,687.8 974.8,698.8 971.0,693.6 966.3,685.5" fill="#3a78a4" stroke="#0a0f14" stroke-width="0.5" stroke-linejoin="round" />
<polygon points="968.3,687.8 953.1,696.4 956.8,690.8 966.3,685.5" fill="#3a78a4" stroke="#0a0f14" stroke-width="0.5" stroke-linejoin="round" />
<polygon points="974.8,698.8 959.4,707.5 961.5,699.0 971.0,693.6" fill="#35709a" stroke="#0a0f14" stroke-width="0.55" stroke-linejoin="round" />
<polygon points="959.4,707.5 953.1,696.4 956.8,690.8 961.5,699.0" fill="#3f82b0" stroke="#0a0f14" stroke-width="0.55" stroke-linejoin="round" />
<polygon points="966.3,685.5 971.0,693.6 961.5,699.0 956.8,690.8" fill="#62c8ff" stroke="#0a0f14" stroke-width="0.6" stroke-linejoin="round" />
<polygon points="922.1,714.1 928.2,725.3 924.5,720.1 920.0,711.8" fill="#3a78a4" stroke="#0a0f14" stroke-width="0.5" stroke-linejoin="round" />
<polygon points="922.1,714.1 906.8,722.7 910.5,717.1 920.0,711.8" fill="#3a78a4" stroke="#0a0f14" stroke-width="0.5" stroke-linejoin="round" />
<polygon points="928.2,725.3 912.8,734.0 914.9,725.5 924.5,720.1" fill="#35709a" stroke="#0a0f14" stroke-width="0.55" stroke-linejoin="round" />
<polygon points="912.8,734.0 906.8,722.7 910.5,717.1 914.9,725.5" fill="#3f82b0" stroke="#0a0f14" stroke-width="0.55" stroke-linejoin="round" />
<polygon points="920.0,711.8 924.5,720.1 914.9,725.5 910.5,717.1" fill="#62c8ff" stroke="#0a0f14" stroke-width="0.6" stroke-linejoin="round" />
<polygon points="954.9,699.6 961.3,710.7 957.5,705.5 952.8,697.3" fill="#3a78a4" stroke="#0a0f14" stroke-width="0.5" stroke-linejoin="round" />
<polygon points="954.9,699.6 939.6,708.2 943.3,702.6 952.8,697.3" fill="#3a78a4" stroke="#0a0f14" stroke-width="0.5" stroke-linejoin="round" />
<polygon points="961.3,710.7 945.9,719.5 948.0,710.9 957.5,705.5" fill="#35709a" stroke="#0a0f14" stroke-width="0.55" stroke-linejoin="round" />
<polygon points="945.9,719.5 939.6,708.2 943.3,702.6 948.0,710.9" fill="#3f82b0" stroke="#0a0f14" stroke-width="0.55" stroke-linejoin="round" />
<polygon points="952.8,697.3 957.5,705.5 948.0,710.9 943.3,702.6" fill="#62c8ff" stroke="#0a0f14" stroke-width="0.6" stroke-linejoin="round" />
<polygon points="941.1,711.0 947.4,722.3 943.7,717.1 939.0,708.7" fill="#3a78a4" stroke="#0a0f14" stroke-width="0.5" stroke-linejoin="round" />
<polygon points="941.1,711.0 925.8,719.7 929.5,714.1 939.0,708.7" fill="#3a78a4" stroke="#0a0f14" stroke-width="0.5" stroke-linejoin="round" />
<polygon points="947.4,722.3 932.0,731.0 934.1,722.5 943.7,717.1" fill="#35709a" stroke="#0a0f14" stroke-width="0.55" stroke-linejoin="round" />
<polygon points="932.0,731.0 925.8,719.7 929.5,714.1 934.1,722.5" fill="#3f82b0" stroke="#0a0f14" stroke-width="0.55" stroke-linejoin="round" />
<polygon points="939.0,708.7 943.7,717.1 934.1,722.5 929.5,714.1" fill="#62c8ff" stroke="#0a0f14" stroke-width="0.6" stroke-linejoin="round" />
<polygon points="974.8,698.8 981.3,710.0 977.5,704.8 972.7,696.5" fill="#3a78a4" stroke="#0a0f14" stroke-width="0.5" stroke-linejoin="round" />
<polygon points="974.8,698.8 959.4,707.5 963.2,701.9 972.7,696.5" fill="#3a78a4" stroke="#0a0f14" stroke-width="0.5" stroke-linejoin="round" />
<polygon points="981.3,710.0 965.9,718.8 968.0,710.3 977.5,704.8" fill="#35709a" stroke="#0a0f14" stroke-width="0.55" stroke-linejoin="round" />
<polygon points="965.9,718.8 959.4,707.5 963.2,701.9 968.0,710.3" fill="#3f82b0" stroke="#0a0f14" stroke-width="0.55" stroke-linejoin="round" />
<polygon points="972.7,696.5 977.5,704.8 968.0,710.3 963.2,701.9" fill="#62c8ff" stroke="#0a0f14" stroke-width="0.6" stroke-linejoin="round" />
<polygon points="928.2,725.3 934.4,736.7 930.7,731.5 926.1,723.0" fill="#3a78a4" stroke="#0a0f14" stroke-width="0.5" stroke-linejoin="round" />
<polygon points="928.2,725.3 912.8,734.0 916.5,728.5 926.1,723.0" fill="#3a78a4" stroke="#0a0f14" stroke-width="0.5" stroke-linejoin="round" />
<polygon points="934.4,736.7 918.9,745.5 921.0,737.0 930.7,731.5" fill="#35709a" stroke="#0a0f14" stroke-width="0.55" stroke-linejoin="round" />
<polygon points="918.9,745.5 912.8,734.0 916.5,728.5 921.0,737.0" fill="#3f82b0" stroke="#0a0f14" stroke-width="0.55" stroke-linejoin="round" />
<polygon points="926.1,723.0 930.7,731.5 921.0,737.0 916.5,728.5" fill="#62c8ff" stroke="#0a0f14" stroke-width="0.6" stroke-linejoin="round" />
<polygon points="961.3,710.7 967.7,722.1 963.9,716.8 959.2,708.5" fill="#3a78a4" stroke="#0a0f14" stroke-width="0.5" stroke-linejoin="round" />
<polygon points="961.3,710.7 945.9,719.5 949.6,713.9 959.2,708.5" fill="#3a78a4" stroke="#0a0f14" stroke-width="0.5" stroke-linejoin="round" />
<polygon points="967.7,722.1 952.2,730.8 954.3,722.3 963.9,716.8" fill="#35709a" stroke="#0a0f14" stroke-width="0.55" stroke-linejoin="round" />
<polygon points="952.2,730.8 945.9,719.5 949.6,713.9 954.3,722.3" fill="#3f82b0" stroke="#0a0f14" stroke-width="0.55" stroke-linejoin="round" />
<polygon points="959.2,708.5 963.9,716.8 954.3,722.3 949.6,713.9" fill="#62c8ff" stroke="#0a0f14" stroke-width="0.6" stroke-linejoin="round" />
<polygon points="947.4,722.3 953.8,733.7 950.0,728.5 945.3,720.0" fill="#3a78a4" stroke="#0a0f14" stroke-width="0.5" stroke-linejoin="round" />
<polygon points="947.4,722.3 932.0,731.0 935.7,725.4 945.3,720.0" fill="#3a78a4" stroke="#0a0f14" stroke-width="0.5" stroke-linejoin="round" />
<polygon points="953.8,733.7 938.3,742.5 940.4,734.0 950.0,728.5" fill="#35709a" stroke="#0a0f14" stroke-width="0.55" stroke-linejoin="round" />
<polygon points="938.3,742.5 932.0,731.0 935.7,725.4 940.4,734.0" fill="#3f82b0" stroke="#0a0f14" stroke-width="0.55" stroke-linejoin="round" />
<polygon points="945.3,720.0 950.0,728.5 940.4,734.0 935.7,725.4" fill="#62c8ff" stroke="#0a0f14" stroke-width="0.6" stroke-linejoin="round" />
<polygon points="981.3,710.0 988.0,721.4 984.2,716.2 979.2,707.8" fill="#3a78a4" stroke="#0a0f14" stroke-width="0.5" stroke-linejoin="round" />
<polygon points="981.3,710.0 965.9,718.8 969.6,713.2 979.2,707.8" fill="#3a78a4" stroke="#0a0f14" stroke-width="0.5" stroke-linejoin="round" />
<polygon points="988.0,721.4 972.4,730.2 974.5,721.7 984.2,716.2" fill="#35709a" stroke="#0a0f14" stroke-width="0.55" stroke-linejoin="round" />
<polygon points="972.4,730.2 965.9,718.8 969.6,713.2 974.5,721.7" fill="#3f82b0" stroke="#0a0f14" stroke-width="0.55" stroke-linejoin="round" />
<polygon points="979.2,707.8 984.2,716.2 974.5,721.7 969.6,713.2" fill="#62c8ff" stroke="#0a0f14" stroke-width="0.6" stroke-linejoin="round" />
<polygon points="934.6,737.2 947.3,760.4 943.5,755.1 932.5,734.9" fill="#3a78a4" stroke="#0a0f14" stroke-width="0.5" stroke-linejoin="round" />
<polygon points="934.6,737.2 919.1,745.9 922.9,740.4 932.5,734.9" fill="#3a78a4" stroke="#0a0f14" stroke-width="0.5" stroke-linejoin="round" />
<polygon points="947.3,760.4 931.5,769.3 933.7,760.7 943.5,755.1" fill="#35709a" stroke="#0a0f14" stroke-width="0.55" stroke-linejoin="round" />
<polygon points="931.5,769.3 919.1,745.9 922.9,740.4 933.7,760.7" fill="#3f82b0" stroke="#0a0f14" stroke-width="0.55" stroke-linejoin="round" />
<polygon points="932.5,734.9 943.5,755.1 933.7,760.7 922.9,740.4" fill="#62c8ff" stroke="#0a0f14" stroke-width="0.6" stroke-linejoin="round" />
<polygon points="967.8,722.2 980.7,744.7 976.8,739.5 965.7,720.0" fill="#3a78a4" stroke="#0a0f14" stroke-width="0.5" stroke-linejoin="round" />
<polygon points="967.8,722.2 952.3,731.0 956.1,725.4 965.7,720.0" fill="#3a78a4" stroke="#0a0f14" stroke-width="0.5" stroke-linejoin="round" />
<polygon points="980.7,744.7 964.9,753.6 967.1,745.0 976.8,739.5" fill="#35709a" stroke="#0a0f14" stroke-width="0.55" stroke-linejoin="round" />
<polygon points="964.9,753.6 952.3,731.0 956.1,725.4 967.1,745.0" fill="#3f82b0" stroke="#0a0f14" stroke-width="0.55" stroke-linejoin="round" />
<polygon points="965.7,720.0 976.8,739.5 967.1,745.0 956.1,725.4" fill="#62c8ff" stroke="#0a0f14" stroke-width="0.6" stroke-linejoin="round" />
<polygon points="953.8,733.7 960.3,745.3 956.5,740.1 951.7,731.5" fill="#3a78a4" stroke="#0a0f14" stroke-width="0.5" stroke-linejoin="round" />
<polygon points="953.8,733.7 938.3,742.5 942.0,737.0 951.7,731.5" fill="#3a78a4" stroke="#0a0f14" stroke-width="0.5" stroke-linejoin="round" />
<polygon points="960.3,745.3 944.6,754.2 946.8,745.6 956.5,740.1" fill="#35709a" stroke="#0a0f14" stroke-width="0.55" stroke-linejoin="round" />
<polygon points="944.6,754.2 938.3,742.5 942.0,737.0 946.8,745.6" fill="#3f82b0" stroke="#0a0f14" stroke-width="0.55" stroke-linejoin="round" />
<polygon points="951.7,731.5 956.5,740.1 946.8,745.6 942.0,737.0" fill="#62c8ff" stroke="#0a0f14" stroke-width="0.6" stroke-linejoin="round" />
<polygon points="988.0,721.4 994.7,732.9 990.9,727.7 985.9,719.2" fill="#3a78a4" stroke="#0a0f14" stroke-width="0.5" stroke-linejoin="round" />
<polygon points="988.0,721.4 972.4,730.2 976.2,724.7 985.9,719.2" fill="#3a78a4" stroke="#0a0f14" stroke-width="0.5" stroke-linejoin="round" />
<polygon points="994.7,732.9 979.0,741.8 981.2,733.2 990.9,727.7" fill="#35709a" stroke="#0a0f14" stroke-width="0.55" stroke-linejoin="round" />
<polygon points="979.0,741.8 972.4,730.2 976.2,724.7 981.2,733.2" fill="#3f82b0" stroke="#0a0f14" stroke-width="0.55" stroke-linejoin="round" />
<polygon points="985.9,719.2 990.9,727.7 981.2,733.2 976.2,724.7" fill="#62c8ff" stroke="#0a0f14" stroke-width="0.6" stroke-linejoin="round" />
<polygon points="1014.2,733.8 1021.7,746.4 1017.8,741.2 1012.1,731.6" fill="#3a78a4" stroke="#0a0f14" stroke-width="0.5" stroke-linejoin="round" />
<polygon points="1014.2,733.8 998.3,742.8 1002.2,737.2 1012.1,731.6" fill="#3a78a4" stroke="#0a0f14" stroke-width="0.5" stroke-linejoin="round" />
<polygon points="1021.7,746.4 1005.8,755.5 1007.9,746.8 1017.8,741.2" fill="#35709a" stroke="#0a0f14" stroke-width="0.55" stroke-linejoin="round" />
<polygon points="1005.8,755.5 998.3,742.8 1002.2,737.2 1007.9,746.8" fill="#3f82b0" stroke="#0a0f14" stroke-width="0.55" stroke-linejoin="round" />
<polygon points="1012.1,731.6 1017.8,741.2 1007.9,746.8 1002.2,737.2" fill="#62c8ff" stroke="#0a0f14" stroke-width="0.6" stroke-linejoin="round" />
<polygon points="998.3,742.8 1005.8,755.5 1001.8,750.3 996.2,740.6" fill="#3a78a4" stroke="#0a0f14" stroke-width="0.5" stroke-linejoin="round" />
<polygon points="998.3,742.8 982.4,751.8 986.3,746.3 996.2,740.6" fill="#3a78a4" stroke="#0a0f14" stroke-width="0.5" stroke-linejoin="round" />
<polygon points="1005.8,755.5 989.7,764.6 991.9,755.9 1001.8,750.3" fill="#35709a" stroke="#0a0f14" stroke-width="0.55" stroke-linejoin="round" />
<polygon points="989.7,764.6 982.4,751.8 986.3,746.3 991.9,755.9" fill="#3f82b0" stroke="#0a0f14" stroke-width="0.55" stroke-linejoin="round" />
<polygon points="996.2,740.6 1001.8,750.3 991.9,755.9 986.3,746.3" fill="#62c8ff" stroke="#0a0f14" stroke-width="0.6" stroke-linejoin="round" />
<polygon points="982.4,751.8 989.7,764.6 985.8,759.4 980.3,749.7" fill="#3a78a4" stroke="#0a0f14" stroke-width="0.5" stroke-linejoin="round" />
<polygon points="982.4,751.8 966.5,760.9 970.4,755.3 980.3,749.7" fill="#3a78a4" stroke="#0a0f14" stroke-width="0.5" stroke-linejoin="round" />
<polygon points="989.7,764.6 973.7,773.7 975.9,765.1 985.8,759.4" fill="#35709a" stroke="#0a0f14" stroke-width="0.55" stroke-linejoin="round" />
<polygon points="973.7,773.7 966.5,760.9 970.4,755.3 975.9,765.1" fill="#3f82b0" stroke="#0a0f14" stroke-width="0.55" stroke-linejoin="round" />
<polygon points="980.3,749.7 985.8,759.4 975.9,765.1 970.4,755.3" fill="#62c8ff" stroke="#0a0f14" stroke-width="0.6" stroke-linejoin="round" />
<polygon points="966.5,760.9 973.7,773.7 969.8,768.5 964.4,758.7" fill="#3a78a4" stroke="#0a0f14" stroke-width="0.5" stroke-linejoin="round" />
<polygon points="966.5,760.9 950.6,769.9 954.5,764.4 964.4,758.7" fill="#3a78a4" stroke="#0a0f14" stroke-width="0.5" stroke-linejoin="round" />
<polygon points="973.7,773.7 957.6,782.9 959.8,774.2 969.8,768.5" fill="#35709a" stroke="#0a0f14" stroke-width="0.55" stroke-linejoin="round" />
<polygon points="957.6,782.9 950.6,769.9 954.5,764.4 959.8,774.2" fill="#3f82b0" stroke="#0a0f14" stroke-width="0.55" stroke-linejoin="round" />
<polygon points="964.4,758.7 969.8,768.5 959.8,774.2 954.5,764.4" fill="#62c8ff" stroke="#0a0f14" stroke-width="0.6" stroke-linejoin="round" />
<polygon points="950.6,769.9 957.6,782.9 953.8,777.6 948.4,767.8" fill="#3a78a4" stroke="#0a0f14" stroke-width="0.5" stroke-linejoin="round" />
<polygon points="950.6,769.9 934.7,779.0 938.5,773.4 948.4,767.8" fill="#3a78a4" stroke="#0a0f14" stroke-width="0.5" stroke-linejoin="round" />
<polygon points="957.6,782.9 941.6,792.0 943.8,783.3 953.8,777.6" fill="#35709a" stroke="#0a0f14" stroke-width="0.55" stroke-linejoin="round" />
<polygon points="941.6,792.0 934.7,779.0 938.5,773.4 943.8,783.3" fill="#3f82b0" stroke="#0a0f14" stroke-width="0.55" stroke-linejoin="round" />
<polygon points="948.4,767.8 953.8,777.6 943.8,783.3 938.5,773.4" fill="#62c8ff" stroke="#0a0f14" stroke-width="0.6" stroke-linejoin="round" />
<polygon points="934.7,779.0 941.6,792.0 937.7,786.8 932.5,776.9" fill="#3a78a4" stroke="#0a0f14" stroke-width="0.5" stroke-linejoin="round" />
<polygon points="934.7,779.0 918.7,788.1 922.5,782.5 932.5,776.9" fill="#3a78a4" stroke="#0a0f14" stroke-width="0.5" stroke-linejoin="round" />
<polygon points="941.6,792.0 925.5,801.2 927.7,792.5 937.7,786.8" fill="#35709a" stroke="#0a0f14" stroke-width="0.55" stroke-linejoin="round" />
<polygon points="925.5,801.2 918.7,788.1 922.5,782.5 927.7,792.5" fill="#3f82b0" stroke="#0a0f14" stroke-width="0.55" stroke-linejoin="round" />
<polygon points="932.5,776.9 937.7,786.8 927.7,792.5 922.5,782.5" fill="#62c8ff" stroke="#0a0f14" stroke-width="0.6" stroke-linejoin="round" />
<polygon points="1021.7,746.4 1029.4,759.3 1025.4,754.0 1019.7,744.3" fill="#3a78a4" stroke="#0a0f14" stroke-width="0.5" stroke-linejoin="round" />
<polygon points="1021.7,746.4 1005.8,755.5 1009.7,750.0 1019.7,744.3" fill="#3a78a4" stroke="#0a0f14" stroke-width="0.5" stroke-linejoin="round" />
<polygon points="1029.4,759.3 1013.3,768.4 1015.4,759.7 1025.4,754.0" fill="#35709a" stroke="#0a0f14" stroke-width="0.55" stroke-linejoin="round" />
<polygon points="1013.3,768.4 1005.8,755.5 1009.7,750.0 1015.4,759.7" fill="#3f82b0" stroke="#0a0f14" stroke-width="0.55" stroke-linejoin="round" />
<polygon points="1019.7,744.3 1025.4,754.0 1015.4,759.7 1009.7,750.0" fill="#62c8ff" stroke="#0a0f14" stroke-width="0.6" stroke-linejoin="round" />
<polygon points="1005.8,755.5 1013.3,768.4 1009.3,763.2 1003.6,753.4" fill="#3a78a4" stroke="#0a0f14" stroke-width="0.5" stroke-linejoin="round" />
<polygon points="1005.8,755.5 989.7,764.6 993.7,759.1 1003.6,753.4" fill="#3a78a4" stroke="#0a0f14" stroke-width="0.5" stroke-linejoin="round" />
<polygon points="1013.3,768.4 997.2,777.6 999.3,768.9 1009.3,763.2" fill="#35709a" stroke="#0a0f14" stroke-width="0.55" stroke-linejoin="round" />
<polygon points="997.2,777.6 989.7,764.6 993.7,759.1 999.3,768.9" fill="#3f82b0" stroke="#0a0f14" stroke-width="0.55" stroke-linejoin="round" />
<polygon points="1003.6,753.4 1009.3,763.2 999.3,768.9 993.7,759.1" fill="#62c8ff" stroke="#0a0f14" stroke-width="0.6" stroke-linejoin="round" />
<polygon points="989.7,764.6 997.2,777.6 993.2,772.4 987.6,762.5" fill="#3a78a4" stroke="#0a0f14" stroke-width="0.5" stroke-linejoin="round" />
<polygon points="989.7,764.6 973.7,773.7 977.6,768.2 987.6,762.5" fill="#3a78a4" stroke="#0a0f14" stroke-width="0.5" stroke-linejoin="round" />
<polygon points="997.2,777.6 981.0,786.8 983.1,778.1 993.2,772.4" fill="#35709a" stroke="#0a0f14" stroke-width="0.55" stroke-linejoin="round" />
<polygon points="981.0,786.8 973.7,773.7 977.6,768.2 983.1,778.1" fill="#3f82b0" stroke="#0a0f14" stroke-width="0.55" stroke-linejoin="round" />
<polygon points="987.6,762.5 993.2,772.4 983.1,778.1 977.6,768.2" fill="#62c8ff" stroke="#0a0f14" stroke-width="0.6" stroke-linejoin="round" />
<polygon points="973.7,773.7 981.0,786.8 977.0,781.6 971.6,771.7" fill="#3a78a4" stroke="#0a0f14" stroke-width="0.5" stroke-linejoin="round" />
<polygon points="973.7,773.7 957.6,782.9 961.5,777.3 971.6,771.7" fill="#3a78a4" stroke="#0a0f14" stroke-width="0.5" stroke-linejoin="round" />
<polygon points="981.0,786.8 964.8,796.1 967.0,787.3 977.0,781.6" fill="#35709a" stroke="#0a0f14" stroke-width="0.55" stroke-linejoin="round" />
<polygon points="964.8,796.1 957.6,782.9 961.5,777.3 967.0,787.3" fill="#3f82b0" stroke="#0a0f14" stroke-width="0.55" stroke-linejoin="round" />
<polygon points="971.6,771.7 977.0,781.6 967.0,787.3 961.5,777.3" fill="#62c8ff" stroke="#0a0f14" stroke-width="0.6" stroke-linejoin="round" />
<polygon points="957.6,782.9 964.8,796.1 960.9,790.8 955.5,780.8" fill="#3a78a4" stroke="#0a0f14" stroke-width="0.5" stroke-linejoin="round" />
<polygon points="957.6,782.9 941.6,792.0 945.5,786.5 955.5,780.8" fill="#3a78a4" stroke="#0a0f14" stroke-width="0.5" stroke-linejoin="round" />
<polygon points="964.8,796.1 948.6,805.3 950.8,796.5 960.9,790.8" fill="#35709a" stroke="#0a0f14" stroke-width="0.55" stroke-linejoin="round" />
<polygon points="948.6,805.3 941.6,792.0 945.5,786.5 950.8,796.5" fill="#3f82b0" stroke="#0a0f14" stroke-width="0.55" stroke-linejoin="round" />
<polygon points="955.5,780.8 960.9,790.8 950.8,796.5 945.5,786.5" fill="#62c8ff" stroke="#0a0f14" stroke-width="0.6" stroke-linejoin="round" />
<polygon points="941.6,792.0 948.6,805.3 944.7,800.0 939.4,790.0" fill="#3a78a4" stroke="#0a0f14" stroke-width="0.5" stroke-linejoin="round" />
<polygon points="941.6,792.0 925.5,801.2 929.3,795.7 939.4,790.0" fill="#3a78a4" stroke="#0a0f14" stroke-width="0.5" stroke-linejoin="round" />
<polygon points="948.6,805.3 932.4,814.5 934.6,805.8 944.7,800.0" fill="#35709a" stroke="#0a0f14" stroke-width="0.55" stroke-linejoin="round" />
<polygon points="932.4,814.5 925.5,801.2 929.3,795.7 934.6,805.8" fill="#3f82b0" stroke="#0a0f14" stroke-width="0.55" stroke-linejoin="round" />
<polygon points="939.4,790.0 944.7,800.0 934.6,805.8 929.3,795.7" fill="#62c8ff" stroke="#0a0f14" stroke-width="0.6" stroke-linejoin="round" />
<polygon points="1029.4,759.3 1037.2,772.3 1033.2,767.1 1027.3,757.2" fill="#3a78a4" stroke="#0a0f14" stroke-width="0.5" stroke-linejoin="round" />
<polygon points="1029.4,759.3 1013.3,768.4 1017.3,762.9 1027.3,757.2" fill="#3a78a4" stroke="#0a0f14" stroke-width="0.5" stroke-linejoin="round" />
<polygon points="1037.2,772.3 1021.0,781.6 1023.1,772.8 1033.2,767.1" fill="#35709a" stroke="#0a0f14" stroke-width="0.55" stroke-linejoin="round" />
<polygon points="1021.0,781.6 1013.3,768.4 1017.3,762.9 1023.1,772.8" fill="#3f82b0" stroke="#0a0f14" stroke-width="0.55" stroke-linejoin="round" />
<polygon points="1027.3,757.2 1033.2,767.1 1023.1,772.8 1017.3,762.9" fill="#62c8ff" stroke="#0a0f14" stroke-width="0.6" stroke-linejoin="round" />
<polygon points="1013.3,768.4 1021.0,781.6 1017.0,776.3 1011.2,766.4" fill="#3a78a4" stroke="#0a0f14" stroke-width="0.5" stroke-linejoin="round" />
<polygon points="1013.3,768.4 997.2,777.6 1001.1,772.1 1011.2,766.4" fill="#3a78a4" stroke="#0a0f14" stroke-width="0.5" stroke-linejoin="round" />
<polygon points="1021.0,781.6 1004.7,790.9 1006.8,782.1 1017.0,776.3" fill="#35709a" stroke="#0a0f14" stroke-width="0.55" stroke-linejoin="round" />
<polygon points="1004.7,790.9 997.2,777.6 1001.1,772.1 1006.8,782.1" fill="#3f82b0" stroke="#0a0f14" stroke-width="0.55" stroke-linejoin="round" />
<polygon points="1011.2,766.4 1017.0,776.3 1006.8,782.1 1001.1,772.1" fill="#62c8ff" stroke="#0a0f14" stroke-width="0.6" stroke-linejoin="round" />
<polygon points="997.2,777.6 1004.7,790.9 1000.7,785.6 995.0,775.6" fill="#3a78a4" stroke="#0a0f14" stroke-width="0.5" stroke-linejoin="round" />
<polygon points="997.2,777.6 981.0,786.8 984.9,781.3 995.0,775.6" fill="#3a78a4" stroke="#0a0f14" stroke-width="0.5" stroke-linejoin="round" />
<polygon points="1004.7,790.9 988.4,800.2 990.6,791.4 1000.7,785.6" fill="#35709a" stroke="#0a0f14" stroke-width="0.55" stroke-linejoin="round" />
<polygon points="988.4,800.2 981.0,786.8 984.9,781.3 990.6,791.4" fill="#3f82b0" stroke="#0a0f14" stroke-width="0.55" stroke-linejoin="round" />
<polygon points="995.0,775.6 1000.7,785.6 990.6,791.4 984.9,781.3" fill="#62c8ff" stroke="#0a0f14" stroke-width="0.6" stroke-linejoin="round" />
<polygon points="981.0,786.8 988.4,800.2 984.4,794.9 978.8,784.8" fill="#3a78a4" stroke="#0a0f14" stroke-width="0.5" stroke-linejoin="round" />
<polygon points="981.0,786.8 964.8,796.1 968.7,790.5 978.8,784.8" fill="#3a78a4" stroke="#0a0f14" stroke-width="0.5" stroke-linejoin="round" />
<polygon points="988.4,800.2 972.1,809.5 974.3,800.7 984.4,794.9" fill="#35709a" stroke="#0a0f14" stroke-width="0.55" stroke-linejoin="round" />
<polygon points="972.1,809.5 964.8,796.1 968.7,790.5 974.3,800.7" fill="#3f82b0" stroke="#0a0f14" stroke-width="0.55" stroke-linejoin="round" />
<polygon points="978.8,784.8 984.4,794.9 974.3,800.7 968.7,790.5" fill="#62c8ff" stroke="#0a0f14" stroke-width="0.6" stroke-linejoin="round" />
<polygon points="964.8,796.1 972.1,809.5 968.1,804.2 962.6,794.0" fill="#3a78a4" stroke="#0a0f14" stroke-width="0.5" stroke-linejoin="round" />
<polygon points="964.8,796.1 948.6,805.3 952.5,799.8 962.6,794.0" fill="#3a78a4" stroke="#0a0f14" stroke-width="0.5" stroke-linejoin="round" />
<polygon points="972.1,809.5 955.7,818.8 958.0,810.0 968.1,804.2" fill="#35709a" stroke="#0a0f14" stroke-width="0.55" stroke-linejoin="round" />
<polygon points="955.7,818.8 948.6,805.3 952.5,799.8 958.0,810.0" fill="#3f82b0" stroke="#0a0f14" stroke-width="0.55" stroke-linejoin="round" />
<polygon points="962.6,794.0 968.1,804.2 958.0,810.0 952.5,799.8" fill="#62c8ff" stroke="#0a0f14" stroke-width="0.6" stroke-linejoin="round" />
<polygon points="948.6,805.3 963.0,832.5 959.0,827.2 946.4,803.3" fill="#3a78a4" stroke="#0a0f14" stroke-width="0.5" stroke-linejoin="round" />
<polygon points="948.6,805.3 932.4,814.5 936.3,809.0 946.4,803.3" fill="#3a78a4" stroke="#0a0f14" stroke-width="0.5" stroke-linejoin="round" />
<polygon points="963.0,832.5 946.5,841.9 948.8,833.1 959.0,827.2" fill="#35709a" stroke="#0a0f14" stroke-width="0.55" stroke-linejoin="round" />
<polygon points="946.5,841.9 932.4,814.5 936.3,809.0 948.8,833.1" fill="#3f82b0" stroke="#0a0f14" stroke-width="0.55" stroke-linejoin="round" />
<polygon points="946.4,803.3 959.0,827.2 948.8,833.1 936.3,809.0" fill="#62c8ff" stroke="#0a0f14" stroke-width="0.6" stroke-linejoin="round" />
<polygon points="1037.2,772.3 1045.2,785.6 1041.1,780.3 1035.1,770.3" fill="#3a78a4" stroke="#0a0f14" stroke-width="0.5" stroke-linejoin="round" />
<polygon points="1037.2,772.3 1021.0,781.6 1025.0,776.0 1035.1,770.3" fill="#3a78a4" stroke="#0a0f14" stroke-width="0.5" stroke-linejoin="round" />
<polygon points="1045.2,785.6 1028.8,795.0 1030.9,786.2 1041.1,780.3" fill="#35709a" stroke="#0a0f14" stroke-width="0.55" stroke-linejoin="round" />
<polygon points="1028.8,795.0 1021.0,781.6 1025.0,776.0 1030.9,786.2" fill="#3f82b0" stroke="#0a0f14" stroke-width="0.55" stroke-linejoin="round" />
<polygon points="1035.1,770.3 1041.1,780.3 1030.9,786.2 1025.0,776.0" fill="#62c8ff" stroke="#0a0f14" stroke-width="0.6" stroke-linejoin="round" />
<polygon points="1021.0,781.6 1028.8,795.0 1024.7,789.7 1018.8,779.6" fill="#3a78a4" stroke="#0a0f14" stroke-width="0.5" stroke-linejoin="round" />
<polygon points="1021.0,781.6 1004.7,790.9 1008.7,785.3 1018.8,779.6" fill="#3a78a4" stroke="#0a0f14" stroke-width="0.5" stroke-linejoin="round" />
<polygon points="1028.8,795.0 1012.4,804.3 1014.5,795.5 1024.7,789.7" fill="#35709a" stroke="#0a0f14" stroke-width="0.55" stroke-linejoin="round" />
<polygon points="1012.4,804.3 1004.7,790.9 1008.7,785.3 1014.5,795.5" fill="#3f82b0" stroke="#0a0f14" stroke-width="0.55" stroke-linejoin="round" />
<polygon points="1018.8,779.6 1024.7,789.7 1014.5,795.5 1008.7,785.3" fill="#62c8ff" stroke="#0a0f14" stroke-width="0.6" stroke-linejoin="round" />
<polygon points="1004.7,790.9 1012.4,804.3 1008.3,799.0 1002.5,788.8" fill="#3a78a4" stroke="#0a0f14" stroke-width="0.5" stroke-linejoin="round" />
<polygon points="1004.7,790.9 988.4,800.2 992.4,794.6 1002.5,788.8" fill="#3a78a4" stroke="#0a0f14" stroke-width="0.5" stroke-linejoin="round" />
<polygon points="1012.4,804.3 995.9,813.7 998.1,804.9 1008.3,799.0" fill="#35709a" stroke="#0a0f14" stroke-width="0.55" stroke-linejoin="round" />
<polygon points="995.9,813.7 988.4,800.2 992.4,794.6 998.1,804.9" fill="#3f82b0" stroke="#0a0f14" stroke-width="0.55" stroke-linejoin="round" />
<polygon points="1002.5,788.8 1008.3,799.0 998.1,804.9 992.4,794.6" fill="#62c8ff" stroke="#0a0f14" stroke-width="0.6" stroke-linejoin="round" />
<polygon points="988.4,800.2 995.9,813.7 991.9,808.4 986.2,798.2" fill="#3a78a4" stroke="#0a0f14" stroke-width="0.5" stroke-linejoin="round" />
<polygon points="988.4,800.2 972.1,809.5 976.1,804.0 986.2,798.2" fill="#3a78a4" stroke="#0a0f14" stroke-width="0.5" stroke-linejoin="round" />
<polygon points="995.9,813.7 979.5,823.1 981.7,814.3 991.9,808.4" fill="#35709a" stroke="#0a0f14" stroke-width="0.55" stroke-linejoin="round" />
<polygon points="979.5,823.1 972.1,809.5 976.1,804.0 981.7,814.3" fill="#3f82b0" stroke="#0a0f14" stroke-width="0.55" stroke-linejoin="round" />
<polygon points="986.2,798.2 991.9,808.4 981.7,814.3 976.1,804.0" fill="#62c8ff" stroke="#0a0f14" stroke-width="0.6" stroke-linejoin="round" />
<polygon points="972.1,809.5 979.5,823.1 975.5,817.8 969.9,807.5" fill="#3a78a4" stroke="#0a0f14" stroke-width="0.5" stroke-linejoin="round" />
<polygon points="972.1,809.5 955.7,818.8 959.7,813.3 969.9,807.5" fill="#3a78a4" stroke="#0a0f14" stroke-width="0.5" stroke-linejoin="round" />
<polygon points="979.5,823.1 963.0,832.5 965.2,823.7 975.5,817.8" fill="#35709a" stroke="#0a0f14" stroke-width="0.55" stroke-linejoin="round" />
<polygon points="963.0,832.5 955.7,818.8 959.7,813.3 965.2,823.7" fill="#3f82b0" stroke="#0a0f14" stroke-width="0.55" stroke-linejoin="round" />
<polygon points="969.9,807.5 975.5,817.8 965.2,823.7 959.7,813.3" fill="#62c8ff" stroke="#0a0f14" stroke-width="0.6" stroke-linejoin="round" />
<polygon points="658.1,623.8 673.8,615.0 681.2,621.2 680.0,624.4 667.5,629.4 668.8,635.0 679.4,630.0 688.1,638.8 686.9,641.2 668.8,649.4 665.0,646.9" fill="#1c3342" stroke="#060a0e" stroke-width="1.2" stroke-linejoin="round" />
<polygon points="667.5,637.5 680.0,633.5 685.0,637.5 670.0,645.0" fill="#4a7ea0" stroke="#060a0e" stroke-width="0.6" stroke-linejoin="round" />
<polyline points="662.5,625.0 675.0,618.8" fill="none" stroke="#3b6887" stroke-width="1.2" stroke-linejoin="round" stroke-linecap="round" />
<polygon points="597.7,662.4 605.2,672.8 607.8,670.9 600.3,660.6" fill="#5e1330" stroke="#1a050d" stroke-width="0.7" stroke-linejoin="round" />
<ellipse cx="599.0" cy="661.5" rx="1.6" ry="1.1" fill="#d81b60" stroke="#1a050d" stroke-width="0.5"/>
<polygon points="629.3,646.9 636.2,656.6 638.8,654.7 631.9,645.1" fill="#5e1330" stroke="#1a050d" stroke-width="0.7" stroke-linejoin="round" />
<ellipse cx="630.6" cy="646.0" rx="1.6" ry="1.1" fill="#d81b60" stroke="#1a050d" stroke-width="0.5"/>
<polygon points="737.2,715.3 749.2,736.8 753.8,734.2 741.8,712.7" fill="#5e1330" stroke="#1a050d" stroke-width="0.7" stroke-linejoin="round" />
<ellipse cx="739.5" cy="714.0" rx="2.6" ry="1.7" fill="#d81b60" stroke="#1a050d" stroke-width="0.5"/>
<defs><linearGradient id="slg" x1="0" y1="0" x2="1" y2="0.3"><stop offset="0" stop-color="#5ab3e9"/><stop offset="1" stop-color="#68c4f8"/></linearGradient></defs>
<polygon points="500.0,951.9 533.1,923.1 549.4,918.1 548.8,920.2 531.2,935.0 528.8,933.8 506.2,953.8" fill="#213d50" stroke="#0a0f14" stroke-width="0.9" stroke-linejoin="round" />
<polygon points="456.2,771.9 486.9,743.8 533.1,923.1 500.0,951.9" fill="url(#slg)" stroke="#0a0f14" stroke-width="0.9" stroke-linejoin="round" />
<polygon points="486.9,743.8 501.2,739.4 549.4,918.1 533.1,923.1" fill="#66ccff" stroke="#0a0f14" stroke-width="0.9" stroke-linejoin="round" />
<polygon points="500.0,899.4 516.9,886.2 526.2,925.0 509.4,937.5" fill="#4b92c2" stroke="#0a0f14" stroke-width="0.9" stroke-linejoin="round" />
<polygon points="500.0,899.4 516.9,886.2 517.8,893.8 508.1,901.2" fill="#5ab3e9" stroke="#0a0f14" stroke-width="0.9" stroke-linejoin="round" />
<polygon points="508.1,901.2 517.5,893.8 525.6,925.0 515.0,932.8" fill="#a9a9a9" stroke="#0a0f14" stroke-width="0.9" stroke-linejoin="round" />
<polyline points="503.8,900.2 511.9,935.0" fill="none" stroke="#0a0f14" stroke-width="0.7" stroke-linejoin="round" stroke-linecap="round" />
<path d="M536.2,770.0 L546.9,758.8 L546.9,753.8 Q557.5,758.8 565.0,756.2 Q570.6,755.0 570.6,750.0 L573.1,732.5 L576.9,731.0 L585.0,730.0 L586.5,734.0 L583.8,755.0 Q580.0,775.0 560.0,776.2 Q546.2,775.0 536.2,770.0 Z" fill="#213d50" stroke="#0a0f14" stroke-width="0.9" stroke-linejoin="round" />
<polygon points="573.1,732.8 576.9,731.0 585.0,730.0 586.0,733.5 577.5,735.2" fill="#62c8ff" stroke="#0a0f14" stroke-width="0.7" stroke-linejoin="round" />
<path d="M546.9,753.8 Q557.5,758.8 565.0,756.2 L563.8,759.4 Q556.2,761.2 547.5,757.8 Z" fill="#62c8ff" stroke="#0a0f14" stroke-width="0.7" stroke-linejoin="round" />
<circle cx="574.6" cy="729.4" r="2.6" fill="#62c8ff" stroke="#0a0f14" stroke-width="0.6"/>
<polygon points="527.5,775.0 530.0,775.6 547.5,758.8 546.9,753.8" fill="#2d5a7a" stroke="#0a0f14" stroke-width="0.9" stroke-linejoin="round" />
<polygon points="521.2,754.4 540.6,737.5 546.9,753.8 527.5,775.0" fill="#5ab3e9" stroke="#0a0f14" stroke-width="0.9" stroke-linejoin="round" />
<path d="M571.2,931.2 L590.0,917.5 Q602.5,927.5 615.0,928.8 Q622.5,926.2 624.4,917.5 L626.9,903.8 640.0,899.4 641.5,905.0 Q640.0,930.0 633.1,938.8 Q617.5,950.0 601.2,947.5 Q581.2,943.8 571.2,931.2 Z" fill="#213d50" stroke="#0a0f14" stroke-width="0.9" stroke-linejoin="round" />
<path d="M590.0,917.5 Q602.5,927.5 615.0,928.8 Q622.5,926.2 624.4,917.5 L627.5,918.1 Q625.0,928.8 616.2,931.5 Q602.5,931.2 591.9,921.0 Z" fill="#62c8ff" stroke="#0a0f14" stroke-width="0.7" stroke-linejoin="round" />
<polygon points="626.9,903.8 630.6,901.0 640.0,899.4 641.2,903.8 631.2,905.8" fill="#62c8ff" stroke="#0a0f14" stroke-width="0.7" stroke-linejoin="round" />
<ellipse cx="632.6" cy="912.5" rx="2.2" ry="1.8" fill="#3f7fab" stroke="#0a0f14" stroke-width="0.6"/>
<polygon points="583.8,876.9 599.4,862.5 613.1,900.0 595.0,915.0" fill="#213d50" stroke="#0a0f14" stroke-width="0.9" stroke-linejoin="round" />
<polygon points="583.8,876.9 598.1,863.5 611.2,899.4 594.4,910.0" fill="#5ab3e9" stroke="#0a0f14" stroke-width="0.9" stroke-linejoin="round" />
<polygon points="598.1,863.5 601.2,864.4 613.1,900.0 611.2,899.4" fill="#4b92c2" stroke="#0a0f14" stroke-width="0.9" stroke-linejoin="round" />
<polygon points="564.4,908.1 573.1,900.6 579.4,919.4 591.2,909.4 595.0,915.0 571.2,931.2" fill="#5ab3e9" stroke="#0a0f14" stroke-width="0.9" stroke-linejoin="round" />
<polygon points="573.1,900.6 575.0,901.5 580.6,917.5 579.4,919.4" fill="#3f7fab" stroke="#0a0f14" stroke-width="0.9" stroke-linejoin="round" />
</svg>

<div class="abs" id="scrollstrip"></div><div class="abs" id="scrollblue"></div>
<div class="abs" id="rtool"></div>
<svg class="abs" style="left:1800px;top:95px" width="112" height="115" viewBox="1800 95 112 115"><defs><filter id="vb" x="-50%" y="-50%" width="200%" height="200%"><feGaussianBlur stdDeviation="5"/></filter><linearGradient id="vf" x1="0" y1="0" x2="0" y2="1"><stop offset="0" stop-color="#f4f4f4"/><stop offset="1" stop-color="#d4d4d4"/></linearGradient><linearGradient id="vl" x1="0" y1="0" x2="0" y2="1"><stop offset="0" stop-color="#f0f0f0"/><stop offset="1" stop-color="#d8d8d8"/></linearGradient></defs><path d="M1832,160 L1890,150 L1888,178 L1846,194 Z" fill="#999" opacity="0.55" filter="url(#vb)"/><path d="M1826.1,117.9 L1870.4,107.5 L1892.8,135.1 L1842.8,148.6 Z" fill="#f1f1f1" stroke="#bdbdbd" stroke-width="0.8"/><path d="M1842.8,148.6 L1892.8,135.1 L1888.6,169 L1844.4,184.6 Z" fill="url(#vf)" stroke="#bdbdbd" stroke-width="0.8"/><path d="M1826.1,117.9 L1842.8,148.6 L1844.4,184.6 L1829.8,156.5 Z" fill="url(#vl)" stroke="#bdbdbd" stroke-width="0.8"/><path d="M1849,139.8 L1880.8,132 L1884.5,144 L1852.7,152.8 Z" fill="#b5e1f0" opacity="0.95"/><path d="M1846,147.8 L1890,135.9" stroke="#b9a9a0" stroke-width="0.7" opacity="0.7"/><text transform="matrix(1.06,-0.26,0.28,0.56,1846,136)" font-family="'Liberation Sans','Noto Sans CJK JP',sans-serif" font-size="28" fill="#1a1a1a">上</text><text transform="matrix(1.1,-0.32,0.03,0.62,1852,171.5)" font-family="'Liberation Sans','Noto Sans CJK JP',sans-serif" font-size="28" fill="#1a1a1a">前</text><text transform="matrix(0.3,0.62,-0.04,0.85,1830,137)" font-family="'Liberation Sans','Noto Sans CJK JP',sans-serif" font-size="15" fill="#222" opacity="0.8">左</text></svg>
<svg class="abs" style="left:1800px;top:95px" width="120" height="520" viewBox="1800 95 120 520"><path d="M1862.7,231.5 H1879.7 M1871.2,223.0 V240.0" stroke="#222" stroke-width="1.2"/><path d="M1871.2,221.0 l-2.4,3.4 h4.8z M1871.2,242.0 l-2.4,-3.4 h4.8z M1860.7,231.5 l3.4,-2.4 v4.8z M1881.7,231.5 l-3.4,-2.4 v4.8z" fill="#222"/><path d="M1871.2,259 L1877.2,262.645 L1871.2,266.29 L1865.2,262.645 Z" fill="#fff" stroke="#2b2b2b" stroke-width="0.8"/><path d="M1865.2,262.645 L1871.2,266.29 L1871.2,272.5 L1865.2,268.855 Z" fill="#6b6b6b"/><path d="M1877.2,262.645 L1871.2,266.29 L1871.2,272.5 L1877.2,268.855 Z" fill="#2b2b2b"/><path d="M1863.7,261 A10,10 0 0 0 1867.7,275.5" fill="none" stroke="#222" stroke-width="1.1"/><path d="M1878.7,271 A10,10 0 0 0 1874.7,256.5" fill="none" stroke="#222" stroke-width="1.1"/><path d="M1870.7,276.6 l-4.2,-2.6 l0.6,4.4z M1871.7,255.4 l4.2,2.6 l-0.6,-4.4z" fill="#222"/><circle cx="1869.4" cy="298.6" r="7" fill="#fff" stroke="#222" stroke-width="1.3"/><path d="M1874.4,304 L1879.8,309.4" stroke="#222" stroke-width="3.6"/><defs><linearGradient id="sh" x1="0" y1="0" x2="1" y2="0"><stop offset="0" stop-color="#777" stop-opacity="0"/><stop offset="0.5" stop-color="#777"/><stop offset="1" stop-color="#777" stop-opacity="0"/></linearGradient></defs><rect x="1857" y="322" width="26" height="1" fill="url(#sh)"/><rect x="1857" y="506" width="26" height="1" fill="url(#sh)"/><path d="M1871.2,338.3 L1876.7,341.675 L1871.2,345.05 L1865.7,341.675 Z" fill="#fff" stroke="#2b2b2b" stroke-width="0.8"/><path d="M1865.7,341.675 L1871.2,345.05 L1871.2,350.8 L1865.7,347.425 Z" fill="#6b6b6b"/><path d="M1876.7,341.675 L1871.2,345.05 L1871.2,350.8 L1876.7,347.425 Z" fill="#2b2b2b"/><path d="M1861.2,338.8 V335.3 H1865.2 M1877.2,335.3 H1881.2 V338.8 M1881.2,350.8 V354.3 H1877.2 M1865.2,354.3 H1861.2 V350.8" fill="none" stroke="#222" stroke-width="1.2"/><circle cx="1875.7" cy="375" r="6" fill="#fff" stroke="#222" stroke-width="0.8"/><path d="M1867.95,373.5 L1875.7,378.09 L1867.95,382.68 L1860.2,378.09 Z" fill="#fff" stroke="#2b2b2b" stroke-width="0.8"/><path d="M1860.2,378.09 L1867.95,382.68 L1867.95,390.5 L1860.2,385.91 Z" fill="#5a5a5a"/><path d="M1875.7,378.09 L1867.95,382.68 L1867.95,390.5 L1875.7,385.91 Z" fill="#2b2b2b"/><path d="M1860.7,414.9 Q1871.2,404.9 1881.7,414.9 Q1871.2,424.9 1860.7,414.9 Z" fill="#fff" stroke="#222" stroke-width="1.3"/><circle cx="1871.2" cy="414.9" r="4.2" fill="#555"/><path d="M1861.2,444.2 L1875.2,444.2 L1881.7,456.2 L1864.2,456.2 Z" fill="#fff" stroke="#222" stroke-width="1.1"/><path d="M1862.2,448.2 H1877.7 M1863.2,452.2 H1879.7 M1865.7,444.2 L1869.2,456.2 M1870.2,444.2 L1875.2,456.2" stroke="#222" stroke-width="1"/><path d="M1868.2,445.2 Q1875.2,438.2 1882.2,445.2 Q1875.2,451.7 1868.2,445.2 Z" fill="#fff" stroke="#222" stroke-width="1"/><circle cx="1875.2" cy="444.9" r="2.9" fill="#555"/><path d="M1861,478.5 H1866.5 L1868,475.8 H1874.5 L1876,478.5 H1881.5 V494 H1861 Z" fill="#3a3a3a"/><circle cx="1871" cy="486.2" r="4.8" fill="#fff"/><circle cx="1871" cy="486.2" r="2.8" fill="#3a3a3a"/><rect x="1877.4" y="480" width="2" height="1.6" fill="#fff"/><path d="M1861.2,530.2 L1870.2,524.7 L1877.7,528.2 L1877.7,536.7 L1869.2,540.7 L1861.2,537.2 Z" fill="#2b2b2b"/><path d="M1861.2,530.2 L1870.2,524.7 L1877.7,528.2 L1869.2,533.4000000000001 Z" fill="#fff" stroke="#2b2b2b" stroke-width="0.8"/><path d="M1861.2,530.2 L1869.2,533.4000000000001 L1869.2,540.7 L1861.2,537.2 Z" fill="#6b6b6b"/><path d="M1865.7,527.4000000000001 L1873.4,530.7" stroke="#2b2b2b" stroke-width="0.7"/><path d="M1872.7,524.2 L1877.7,519.2 Q1881.2,517.2 1882.7,520.7 Q1883.2,523.7 1879.7,526.7 L1877.7,528.7" fill="none" stroke="#2b2b2b" stroke-width="3.2"/><path d="M1873.7,523.2 L1878.2,519.0 Q1881.0,517.8000000000001 1882.0,520.7 Q(1882.2,),523.2 1879.2,526.0" fill="none" stroke="#f0f0f0" stroke-width="1.5"/><rect x="1859.8" y="520.3000000000001" width="1.8" height="1.8" fill="#222"/><rect x="1859.8" y="538.3000000000001" width="1.8" height="1.8" fill="#222"/><rect x="1880.3" y="538.3000000000001" width="1.8" height="1.8" fill="#222"/><path d="M1860.7,561.5 l3,-1.6 l3,1.4 v3.6 l-3,1.6 l-3,-1.4z" fill="#2b2b2b"/><path d="M1860.7,567 Q1860.2,579 1879.2,579.5" fill="none" stroke="#2b2b2b" stroke-width="1.1" stroke-dasharray="1.2 1.2"/><path d="M1866.2,571.5 L1873.2,564.5 Q1877.7,561.5 1880.2,565.5 Q1881.7,569.5 1877.7,572.5 L1872.7,577.5" fill="none" stroke="#2b2b2b" stroke-width="3.6"/><path d="M1868.2,569.5 L1873.8,564.4 Q1877.5,562.4 1879.4,565.6 Q1880.4,569 1877.2,571.6 L1874.6000000000001,574.4" fill="none" stroke="#f0f0f0" stroke-width="1.7"/><path d="M1861.7,579.5 L1881.7,560" stroke="#2b2b2b" stroke-width="1.4"/><path d="M1913,588.5 L1919,583 V594 Z" fill="#fff"/></svg>
<div class="abs" id="topblack"></div>
<div class="abs" id="titlebar"></div>
<div class="abs" id="header"></div>
<div class="abs" id="title">MB-6890_003*</div>
<div class="abs" id="brand1">AUTODESK<span style="font-size:7px;vertical-align:6px">®</span></div>
<div class="abs" id="brand2">123D<span style="font-size:6px;vertical-align:7px">®</span> DESIGN</div>
<svg class="abs" style="left:0;top:0" width="1928" height="100" viewBox="0 0 1928 100"><path d="M3,13 L19,13 L11,26 Z" fill="#0d9ad6"/><path d="M11,17 L19,13 L11,26 Z" fill="#0a5f8a"/><path d="M3,13 L19,13 L11,17 Z" fill="#9bdcf5"/><defs><linearGradient id="lg" x1="0" y1="0" x2="1" y2="1"><stop offset="0" stop-color="#bccbd2"/><stop offset="1" stop-color="#a3b8c3"/></linearGradient></defs><rect x="8" y="39.5" width="43" height="43" rx="8" fill="url(#lg)"/><path d="M46,49.5 L51,54 L51,75 Q51,82.5 43,82.5 L36,82.5 L30,75.5 Z" fill="#6d9bb0"/><path d="M13,50 L46,49.5 L30,57 Z" fill="#bfe6f7"/><path d="M13,50 L30,57 L30,75.5 Z" fill="#11a0dc"/><path d="M46,49.5 L30,57 L30,75.5 Z" fill="#0a678f"/><path d="M199,62.5 L205,66.5 L211,62.5" fill="none" stroke="#222" stroke-width="2.2"/><path d="M615,58.3 L624,52.8 L624,56.6 Q632,56 636,61.5 L634.3,62.6 Q630.5,59.6 624,60 L624,63.6 Z" fill="#2a2a2a"/><path d="M677.5,58.3 L668.5,52.8 L668.5,56.6 Q660.5,56 656.5,61.5 L658.2,62.6 Q662,59.6 668.5,60 L668.5,63.6 Z" fill="#b8b8b8"/><defs><linearGradient id="sg" x1="0" y1="0" x2="0" y2="1"><stop offset="0" stop-color="#777" stop-opacity="0"/><stop offset="0.5" stop-color="#777"/><stop offset="1" stop-color="#777" stop-opacity="0"/></linearGradient></defs><rect x="710" y="46" width="1" height="27" fill="url(#sg)"/><rect x="796" y="46" width="1" height="27" fill="url(#sg)"/><rect x="1269.5" y="46" width="1" height="27" fill="url(#sg)"/><rect x="744" y="49.5" width="21" height="20" fill="none" stroke="#222" stroke-width="1.2" stroke-dasharray="1.2 1.4"/><rect x="757" y="46" width="10" height="9.5" fill="#f0f0f0"/><path d="M753.25,54 L759.5,57.645 L753.25,61.29 L747,57.645 Z" fill="#fff" stroke="#2b2b2b" stroke-width="0.8"/><path d="M747,57.645 L753.25,61.29 L753.25,67.5 L747,63.855 Z" fill="#6b6b6b"/><path d="M759.5,57.645 L753.25,61.29 L753.25,67.5 L759.5,63.855 Z" fill="#2b2b2b"/><path d="M757.3,50.4 H766 M761.6,46 V54.8" stroke="#222" stroke-width="1.1"/><path d="M761.6,45.2 l-1.8,2.2 h3.6z M761.6,55.6 l-1.8,-2.2 h3.6z M756.4,50.4 l2.2,-1.8 v3.6z M766.8,50.4 l-2.2,-1.8 v3.6z" fill="#222"/><path d="M772,83.0 L775,80.0 L775,83.0 Z" fill="#999"/><circle cx="845" cy="54" r="6" fill="#fff" stroke="#2b2b2b" stroke-width="0.9"/><path d="M836.9,52.3 L845.0,57.025 L836.9,61.75 L828.8,57.025 Z" fill="#fff" stroke="#2b2b2b" stroke-width="0.8"/><path d="M828.8,57.025 L836.9,61.75 L836.9,69.8 L828.8,65.075 Z" fill="#6b6b6b"/><path d="M845.0,57.025 L836.9,61.75 L836.9,69.8 L845.0,65.075 Z" fill="#2b2b2b"/><path d="M857.5,83.0 L860.5,80.0 L860.5,83.0 Z" fill="#999"/><path d="M881,52.5 Q870,49 873,60 Q876,68 881,66" fill="none" stroke="#2b2b2b" stroke-width="1"/><circle cx="883" cy="52.8" r="1.9" fill="#2b2b2b"/><circle cx="876" cy="62.6" r="1.9" fill="#2b2b2b"/><path d="M892.2,47.8 L896.2,50.8 L887.5,61.8 L883.5,58.8 Z" fill="#2b2b2b"/><path d="M883,59.8 L886.8,62.6 L881,66.6 Z" fill="#2b2b2b"/><path d="M900.5,83.0 L903.5,80.0 L903.5,83.0 Z" fill="#999"/><path d="M926.2,52.3 L934.4,57.025 L926.2,61.75 L918,57.025 Z" fill="#fff" stroke="#2b2b2b" stroke-width="0.8"/><path d="M918,57.025 L926.2,61.75 L926.2,69.8 L918,65.075 Z" fill="#6b6b6b"/><path d="M934.4,57.025 L926.2,61.75 L926.2,69.8 L934.4,65.075 Z" fill="#2b2b2b"/><path d="M928.5,55.5 L933.5,46.5 L935.5,47.8 L930.5,56.5 L927,58 Z" fill="#2b2b2b"/><path d="M943.5,83.0 L946.5,80.0 L946.5,83.0 Z" fill="#999"/><path d="M965.9,52.3 L973.8,57.025 L965.9,61.75 L958,57.025 Z" fill="#fff" stroke="#2b2b2b" stroke-width="0.8"/><path d="M958,57.025 L965.9,61.75 L965.9,69.8 L958,65.075 Z" fill="#6b6b6b"/><path d="M973.8,57.025 L965.9,61.75 L965.9,69.8 L973.8,65.075 Z" fill="#2b2b2b"/><path d="M974.4,55.4 V48 M974.4,55.4 H981" stroke="#2b2b2b" stroke-width="1.1" fill="none"/><path d="M974.4,46 l-2,3 h4z M983,55.4 l-3,-2 v4z" fill="#2b2b2b"/><path d="M986.5,83.0 L989.5,80.0 L989.5,83.0 Z" fill="#999"/><path d="M1007.0,49.0 L1010.9,51.484 L1007.0,53.968 L1003.1,51.484 Z" fill="#fff" stroke="#2b2b2b" stroke-width="0.8"/><path d="M1003.1,51.484 L1007.0,53.968 L1007.0,58.2 L1003.1,55.716 Z" fill="#6b6b6b"/><path d="M1010.9,51.484 L1007.0,53.968 L1007.0,58.2 L1010.9,55.716 Z" fill="#2b2b2b"/><path d="M1017.0,49.0 L1020.9,51.484 L1017.0,53.968 L1013.1,51.484 Z" fill="#fff" stroke="#2b2b2b" stroke-width="0.8"/><path d="M1013.1,51.484 L1017.0,53.968 L1017.0,58.2 L1013.1,55.716 Z" fill="#6b6b6b"/><path d="M1020.9,51.484 L1017.0,53.968 L1017.0,58.2 L1020.9,55.716 Z" fill="#2b2b2b"/><path d="M1007.0,59.4 L1010.9,61.884 L1007.0,64.368 L1003.1,61.884 Z" fill="#fff" stroke="#2b2b2b" stroke-width="0.8"/><path d="M1003.1,61.884 L1007.0,64.368 L1007.0,68.6 L1003.1,66.116 Z" fill="#6b6b6b"/><path d="M1010.9,61.884 L1007.0,64.368 L1007.0,68.6 L1010.9,66.116 Z" fill="#2b2b2b"/><path d="M1017.0,59.4 L1020.9,61.884 L1017.0,64.368 L1013.1,61.884 Z" fill="#fff" stroke="#2b2b2b" stroke-width="0.8"/><path d="M1013.1,61.884 L1017.0,64.368 L1017.0,68.6 L1013.1,66.116 Z" fill="#6b6b6b"/><path d="M1020.9,61.884 L1017.0,64.368 L1017.0,68.6 L1020.9,66.116 Z" fill="#2b2b2b"/><path d="M1029.5,83.0 L1032.5,80.0 L1032.5,83.0 Z" fill="#999"/><rect x="1044.8" y="48.8" width="2" height="2" fill="#2b2b2b"/><rect x="1064.8" y="48.8" width="2" height="2" fill="#2b2b2b"/><rect x="1044.8" y="68.8" width="2" height="2" fill="#2b2b2b"/><rect x="1064.8" y="68.8" width="2" height="2" fill="#2b2b2b"/><circle cx="1060" cy="56.3" r="5.5" fill="#fff" stroke="#2b2b2b" stroke-width="0.9"/><path d="M1052.95,56 L1059.2,59.456 L1052.95,62.912 L1046.7,59.456 Z" fill="#fff" stroke="#2b2b2b" stroke-width="0.8"/><path d="M1046.7,59.456 L1052.95,62.912 L1052.95,68.8 L1046.7,65.344 Z" fill="#6b6b6b"/><path d="M1059.2,59.456 L1052.95,62.912 L1052.95,68.8 L1059.2,65.344 Z" fill="#2b2b2b"/><path d="M1072.5,83.0 L1075.5,80.0 L1075.5,83.0 Z" fill="#999"/><path d="M1099,50 L1109,54 L1109,65 L1099,70 L1089,65.5 L1089,55 Z" fill="#2b2b2b"/><path d="M1089,55 L1099,50 L1109,54 L1099.5,59.5 Z" fill="#fff" stroke="#2b2b2b" stroke-width="0.8"/><path d="M1089,55 L1099.5,59.5 L1099,70 L1089,65.5 Z" fill="#6b6b6b"/><path d="M1104,56.8 L1109,54 L1109,65 L1104,67.5 Z" fill="#6b6b6b"/><path d="M1094,52.5 L1104,56.8" stroke="#2b2b2b" stroke-width="0.7"/><path d="M1115.5,83.0 L1118.5,80.0 L1118.5,83.0 Z" fill="#999"/><path d="M1138.8,48.5 L1146.8,54.305 L1138.8,60.11 L1130.8,54.305 Z" fill="#fff" stroke="#2b2b2b" stroke-width="0.8"/><path d="M1130.8,54.305 L1138.8,60.11 L1138.8,70.0 L1130.8,64.195 Z" fill="#6b6b6b"/><path d="M1146.8,54.305 L1138.8,60.11 L1138.8,70.0 L1146.8,64.195 Z" fill="#2b2b2b"/><rect x="1146.6" y="49.3" width="5.2" height="20.2" fill="#fff" stroke="#2b2b2b" stroke-width="1.1"/><path d="M1148.6,52.5 H1151.8" stroke="#2b2b2b" stroke-width="0.8"/><path d="M1148.6,55.5 H1151.8" stroke="#2b2b2b" stroke-width="0.8"/><path d="M1148.6,58.5 H1151.8" stroke="#2b2b2b" stroke-width="0.8"/><path d="M1148.6,61.5 H1151.8" stroke="#2b2b2b" stroke-width="0.8"/><path d="M1148.6,64.5 H1151.8" stroke="#2b2b2b" stroke-width="0.8"/><path d="M1148.6,67 H1151.8" stroke="#2b2b2b" stroke-width="0.8"/><path d="M1175,51 H1193.3 V56.3 H1187.6 V70 H1180.8 V56.3 H1175 Z" fill="#2b2b2b"/><path d="M1220,58.5 L1229.5,50.5 Q1234.5,47.5 1237.2,52 Q1239.5,57 1235,60.5 L1227.5,67.5" fill="none" stroke="#2b2b2b" stroke-width="4.6"/><path d="M1221.6,57.2 L1229.8,50.2 Q1234.4,48 1236.6,52.2 Q1238.2,56.6 1234.6,59.8 L1229.6,64.6" fill="none" stroke="#f0f0f0" stroke-width="2.6"/><path d="M1218,56.5 L1221,54 L1224,58 L1221,60.5 Z M1225.5,65.5 L1228.5,63 L1231.5,67 L1228.5,69.6 Z" fill="#2b2b2b"/><path d="M1303.5,54 L1314,48.8 L1324,53 L1324,64 L1314,69.3 L1303.5,64.5 Z" fill="#fff"/><path d="M1303.5,54 L1314,48.8 L1324,53 L1313.5,58.3 Z" fill="#fff" stroke="#2b2b2b" stroke-width="0.8"/><path d="M1303.5,55.2 L1313.5,59.6" stroke="#2b2b2b" stroke-width="1.25"/><path d="M1303.5,57.550000000000004 L1313.5,61.95" stroke="#2b2b2b" stroke-width="1.25"/><path d="M1303.5,59.900000000000006 L1313.5,64.30000000000001" stroke="#2b2b2b" stroke-width="1.25"/><path d="M1303.5,62.25 L1313.5,66.65" stroke="#2b2b2b" stroke-width="1.25"/><path d="M1303.5,64.60000000000001 L1313.5,69.00000000000001" stroke="#2b2b2b" stroke-width="1.25"/><path d="M1314.2,68.6 L1315.4,57.6" stroke="#2b2b2b" stroke-width="1.0"/><path d="M1315.96,67.72 L1317.1200000000001,56.72" stroke="#2b2b2b" stroke-width="1.0"/><path d="M1317.72,66.83999999999999 L1318.8400000000001,55.84" stroke="#2b2b2b" stroke-width="1.0"/><path d="M1319.48,65.96 L1320.5600000000002,54.96" stroke="#2b2b2b" stroke-width="1.0"/><path d="M1321.24,65.08 L1322.2800000000002,54.08" stroke="#2b2b2b" stroke-width="1.0"/><path d="M1323.0,64.19999999999999 L1324.0,53.2" stroke="#2b2b2b" stroke-width="1.0"/><path d="M1799,18.5 H1809.5" stroke="#111" stroke-width="1.1"/><rect x="1844.5" y="15.5" width="7.5" height="7.5" fill="#fff" stroke="#111" stroke-width="1"/><path d="M1846.5,15.5 V13.5 H1854 V21 H1852" fill="none" stroke="#111" stroke-width="1"/><path d="M1890,13.3 L1900.3,23.3 M1900.3,13.3 L1890,23.3" stroke="#111" stroke-width="1.1"/></svg>
<div class="abs btn" id="prem"><span class="l1">プレミアム版登録</span><span class="l2">(商業利用向け)</span></div>
<div class="abs btn" id="signin">サインイン</div>
<div class="abs" id="help">?</div>
<div class="abs" id="gridhead">グリッドを編集</div>
<div class="abs ginp" style="left:1741px;width:75px">1</div>
<div class="abs ginp" style="left:1821px;width:75px">1</div>
<div class="abs glab" style="left:1741px">長さスナップ</div>
<div class="abs glab" style="left:1821px">角度スナップ</div>
<div class="abs" id="rightblue"></div><div class="abs" id="rightwhite"></div>
<div class="abs" id="bottombar"></div><div class="abs" id="bb1"></div><div class="abs" id="bb2"></div>
<div class="abs" style="left:1822px;top:1052px;font-size:9px;line-height:10px;color:#eee;font-weight:bold">1:32</div>

</div>
</body></html>
